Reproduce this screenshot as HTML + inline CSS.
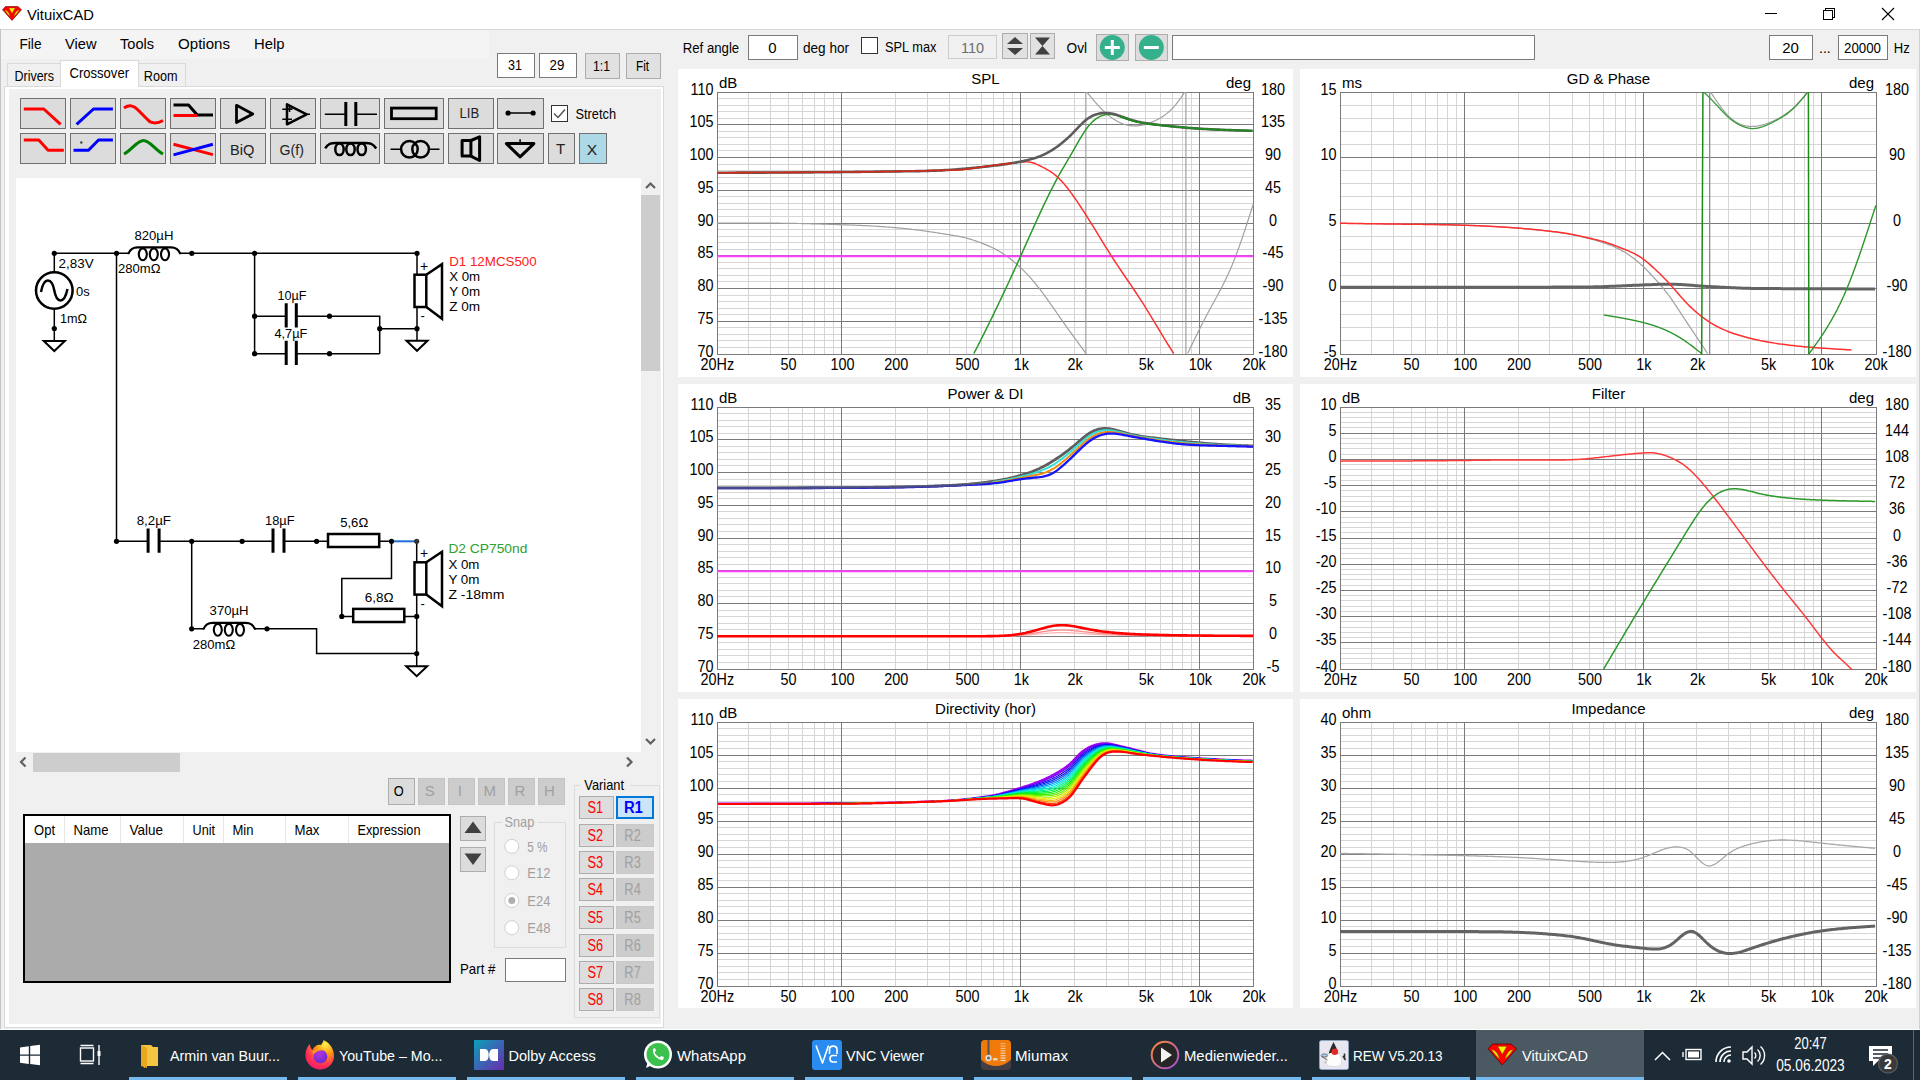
<!DOCTYPE html><html><head><meta charset="utf-8"><title>VituixCAD</title><style>html,body{margin:0;padding:0;width:1920px;height:1080px;overflow:hidden;background:#f0f0f0}svg{position:absolute;left:0;top:0;display:block}text{font-family:"Liberation Sans",sans-serif}</style></head><body><svg width="1920" height="1080" viewBox="0 0 1920 1080"><rect x="0" y="0" width="1920" height="1080" fill="#f0f0f0"/><rect x="0" y="0" width="1920" height="29" fill="#ffffff"/><line x1="0" y1="29.5" x2="1920" y2="29.5" stroke="#d6d6d6" shape-rendering="crispEdges"/><line x1="0.5" y1="29" x2="0.5" y2="1029" stroke="#c4c4c4" shape-rendering="crispEdges"/><line x1="1919.5" y1="29" x2="1919.5" y2="1030" stroke="#d0d0d0" shape-rendering="crispEdges"/><g transform="translate(2.5,6.5) scale(0.67)"><path d="M4.4 0 H23 L28.4 4.7 L14.2 20.8 L0 4.7 Z" fill="#ff0000" stroke="#6a0000" stroke-width="0.9" stroke-linejoin="round"/><path d="M9.5 2.2 H18.9 L14.2 10.4 Z" fill="#f4f400" stroke="#8a2000" stroke-width="0.5"/><path d="M3.2 5.4 C6.5 5.2 10 8.5 11.7 15.4 C8.5 12.5 6 9.5 3.2 5.4 Z" fill="#e6e600" stroke="#8a2000" stroke-width="0.5"/><path d="M25.2 5.4 C21.9 5.2 18.4 8.5 16.7 15.4 C19.9 12.5 22.4 9.5 25.2 5.4 Z" fill="#e6e600" stroke="#8a2000" stroke-width="0.5"/></g><text x="27" y="20" font-size="15" fill="#000" textLength="67" lengthAdjust="spacingAndGlyphs">VituixCAD</text><g stroke="#000" stroke-width="1" fill="none" shape-rendering="crispEdges"><line x1="1765" y1="13.5" x2="1777" y2="13.5"/><rect x="1823.5" y="10.5" width="9" height="9"/><path d="M1825.5 10.5 V8.5 H1834.5 V17.5 H1832.5"/></g><g stroke="#000" stroke-width="1.1"><line x1="1882" y1="8" x2="1894" y2="20"/><line x1="1894" y1="8" x2="1882" y2="20"/></g><rect x="1" y="30" width="488" height="29" fill="#f4f4f4"/><text x="19.5" y="49" font-size="15.5" fill="#000" textLength="22" lengthAdjust="spacingAndGlyphs">File</text><text x="65" y="49" font-size="15.5" fill="#000" textLength="31.5" lengthAdjust="spacingAndGlyphs">View</text><text x="120" y="49" font-size="15.5" fill="#000" textLength="34" lengthAdjust="spacingAndGlyphs">Tools</text><text x="178" y="49" font-size="15.5" fill="#000" textLength="52" lengthAdjust="spacingAndGlyphs">Options</text><text x="254" y="49" font-size="15.5" fill="#000" textLength="30.5" lengthAdjust="spacingAndGlyphs">Help</text><rect x="4.5" y="86.5" width="659" height="941" fill="#ffffff" stroke="#d9d9d9" stroke-width="1" shape-rendering="crispEdges"/><rect x="9" y="89" width="652" height="935" fill="#f0f0f0"/><rect x="7.5" y="63.5" width="53" height="23" fill="#f0f0f0" stroke="#d9d9d9" stroke-width="1" shape-rendering="crispEdges"/><rect x="138.5" y="63.5" width="47" height="23" fill="#f0f0f0" stroke="#d9d9d9" stroke-width="1" shape-rendering="crispEdges"/><rect x="60.5" y="60.5" width="78" height="26" fill="#ffffff" stroke="#d9d9d9" stroke-width="1" shape-rendering="crispEdges"/><rect x="61" y="85" width="77" height="3" fill="#ffffff"/><text x="14.5" y="80.5" font-size="14.5" fill="#000" textLength="39.5" lengthAdjust="spacingAndGlyphs">Drivers</text><text x="69.5" y="77.5" font-size="14.5" fill="#000" textLength="59.5" lengthAdjust="spacingAndGlyphs">Crossover</text><text x="143.8" y="80.5" font-size="14.5" fill="#000" textLength="33.8" lengthAdjust="spacingAndGlyphs">Room</text><rect x="497.5" y="53.5" width="37" height="24" fill="#ffffff" stroke="#7a7a7a" stroke-width="1" shape-rendering="crispEdges"/><rect x="539.5" y="53.5" width="37" height="24" fill="#ffffff" stroke="#7a7a7a" stroke-width="1" shape-rendering="crispEdges"/><text x="515" y="69.6" font-size="15.5" fill="#000" text-anchor="middle" textLength="13.99" lengthAdjust="spacingAndGlyphs">31</text><text x="557" y="69.6" font-size="15.5" fill="#000" text-anchor="middle" textLength="14.79" lengthAdjust="spacingAndGlyphs">29</text><rect x="585.5" y="53.5" width="34" height="25" fill="#e1e1e1" stroke="#adadad" stroke-width="1" shape-rendering="crispEdges"/><rect x="626.5" y="53.5" width="34" height="25" fill="#e1e1e1" stroke="#adadad" stroke-width="1" shape-rendering="crispEdges"/><text x="601.5" y="71" font-size="15.5" fill="#000" text-anchor="middle" textLength="17.04" lengthAdjust="spacingAndGlyphs">1:1</text><text x="642.5" y="71" font-size="15.5" fill="#000" text-anchor="middle" textLength="13.08" lengthAdjust="spacingAndGlyphs">Fit</text><rect x="20.5" y="98.5" width="45" height="30" fill="#dcdcdc" stroke="#707070" stroke-width="1" shape-rendering="crispEdges"/><rect x="70.5" y="98.5" width="45" height="30" fill="#dcdcdc" stroke="#707070" stroke-width="1" shape-rendering="crispEdges"/><rect x="120.5" y="98.5" width="45" height="30" fill="#dcdcdc" stroke="#707070" stroke-width="1" shape-rendering="crispEdges"/><rect x="170.5" y="98.5" width="45" height="30" fill="#dcdcdc" stroke="#707070" stroke-width="1" shape-rendering="crispEdges"/><rect x="220.5" y="98.5" width="45" height="30" fill="#dcdcdc" stroke="#707070" stroke-width="1" shape-rendering="crispEdges"/><rect x="270.5" y="98.5" width="45" height="30" fill="#dcdcdc" stroke="#707070" stroke-width="1" shape-rendering="crispEdges"/><rect x="320.5" y="98.5" width="59" height="30" fill="#dcdcdc" stroke="#707070" stroke-width="1" shape-rendering="crispEdges"/><rect x="384.5" y="98.5" width="59" height="30" fill="#dcdcdc" stroke="#707070" stroke-width="1" shape-rendering="crispEdges"/><rect x="448.5" y="98.5" width="45" height="30" fill="#dcdcdc" stroke="#707070" stroke-width="1" shape-rendering="crispEdges"/><rect x="497.5" y="98.5" width="46" height="30" fill="#dcdcdc" stroke="#707070" stroke-width="1" shape-rendering="crispEdges"/><rect x="20.5" y="133.5" width="45" height="30" fill="#dcdcdc" stroke="#707070" stroke-width="1" shape-rendering="crispEdges"/><rect x="70.5" y="133.5" width="45" height="30" fill="#dcdcdc" stroke="#707070" stroke-width="1" shape-rendering="crispEdges"/><rect x="120.5" y="133.5" width="45" height="30" fill="#dcdcdc" stroke="#707070" stroke-width="1" shape-rendering="crispEdges"/><rect x="170.5" y="133.5" width="45" height="30" fill="#dcdcdc" stroke="#707070" stroke-width="1" shape-rendering="crispEdges"/><rect x="220.5" y="133.5" width="45" height="30" fill="#dcdcdc" stroke="#707070" stroke-width="1" shape-rendering="crispEdges"/><rect x="270.5" y="133.5" width="45" height="30" fill="#dcdcdc" stroke="#707070" stroke-width="1" shape-rendering="crispEdges"/><rect x="320.5" y="133.5" width="59" height="30" fill="#dcdcdc" stroke="#707070" stroke-width="1" shape-rendering="crispEdges"/><rect x="384.5" y="133.5" width="59" height="30" fill="#dcdcdc" stroke="#707070" stroke-width="1" shape-rendering="crispEdges"/><rect x="448.5" y="133.5" width="45" height="30" fill="#dcdcdc" stroke="#707070" stroke-width="1" shape-rendering="crispEdges"/><rect x="497.5" y="133.5" width="46" height="30" fill="#dcdcdc" stroke="#707070" stroke-width="1" shape-rendering="crispEdges"/><rect x="548.5" y="133.5" width="26" height="30" fill="#dcdcdc" stroke="#707070" stroke-width="1" shape-rendering="crispEdges"/><rect x="579.5" y="133.5" width="27" height="30" fill="#add8e6" stroke="#707070" stroke-width="1" shape-rendering="crispEdges"/><path d="M23.8 109 H43.8 L60.6 124.3" stroke="#ff0000" stroke-width="3" fill="none" stroke-linejoin="round"/><path d="M76.6 124.3 L93.5 109 H112.9" stroke="#0000ff" stroke-width="3" fill="none" stroke-linejoin="round"/><path d="M124 108 C129 104.5 134 105.5 137 109 L148 120 C151 123.5 157 124 163 120.5" stroke="#ff0000" stroke-width="3" fill="none" stroke-linejoin="round"/><path d="M173.5 105 H188.5 L197.3 115 H213" stroke="#000000" stroke-width="3" fill="none" stroke-linejoin="round"/><path d="M173.5 115.5 H197.3" stroke="#ff0000" stroke-width="3" fill="none" stroke-linejoin="round"/><path d="M236.5 105.3 L252.8 113.9 L236.5 122.5 Z" stroke="#000" stroke-width="2.8" fill="none" stroke-linejoin="round"/><path d="M287 104.3 L306.6 114.3 L287 124.3 Z" stroke="#000" stroke-width="2.5" fill="none" stroke-linejoin="round"/><path d="M306.6 114.3 H310 M282.3 109.3 H292 M282.3 119.3 H292 M289.5 106 V112 M286.5 109 H292.5" stroke="#000" stroke-width="1.5" fill="none" stroke-linejoin="round"/><path d="M324.8 114.3 H345.8 M355.8 114.3 H377" stroke="#000" stroke-width="1.5" fill="none" stroke-linejoin="round"/><path d="M345.8 102 V126 M355.8 102 V126" stroke="#000" stroke-width="3" fill="none" stroke-linejoin="round"/><rect x="391.5" y="108.1" width="44.7" height="10.6" fill="none" stroke="#000" stroke-width="2.8"/><path d="M508 113 H533" stroke="#000" stroke-width="1.5" fill="none" stroke-linejoin="round"/><circle cx="508.1" cy="113" r="2.6" fill="#000"/><circle cx="533.1" cy="113" r="2.6" fill="#000"/><text x="469.4" y="118.4" font-size="15.5" fill="#222" text-anchor="middle" textLength="19.76" lengthAdjust="spacingAndGlyphs">LIB</text><rect x="551.5" y="105.5" width="16" height="16" fill="#ffffff" stroke="#333333" stroke-width="1" shape-rendering="crispEdges"/><path d="M554 113.5 L558 117.5 L565 109.5" stroke="#555" stroke-width="1.5" fill="none" stroke-linejoin="round"/><text x="575.5" y="119" font-size="15" fill="#000" textLength="40.5" lengthAdjust="spacingAndGlyphs">Stretch</text><path d="M23.8 140 H38.8 L48.1 150.3 H63.8" stroke="#ff0000" stroke-width="3" fill="none" stroke-linejoin="round"/><path d="M73.5 150.3 H88.5 L98.5 140 H112.9" stroke="#0000ff" stroke-width="3" fill="none" stroke-linejoin="round"/><circle cx="81.3" cy="142.5" r="1.2" fill="#444"/><path d="M124 154 C132 150 137 140.5 143.5 140.5 C150 140.5 155 150 163 154" stroke="#008000" stroke-width="3" fill="none" stroke-linejoin="round"/><path d="M173.5 144.3 L212.9 154.6" stroke="#ff0000" stroke-width="3" fill="none" stroke-linejoin="round"/><path d="M173.5 154.9 L212.9 144.3" stroke="#0000ff" stroke-width="3" fill="none" stroke-linejoin="round"/><text x="242.3" y="154.5" font-size="15.5" fill="#222" text-anchor="middle" textLength="24.37" lengthAdjust="spacingAndGlyphs">BiQ</text><text x="291.7" y="154.5" font-size="15.5" fill="#222" text-anchor="middle" textLength="24.34" lengthAdjust="spacingAndGlyphs">G(f)</text><path d="M325.2 148.3 C328 143.5 331 143 336 143 H365 C370 143 373 143.5 376.2 148.5" stroke="#000" stroke-width="2.5" fill="none" stroke-linejoin="round"/><g stroke="#000" stroke-width="2.5" fill="none"><ellipse cx="339.5" cy="149.3" rx="4.2" ry="5.8"/><ellipse cx="350.5" cy="149.3" rx="4.2" ry="5.8"/><ellipse cx="361.7" cy="149.3" rx="4.2" ry="5.8"/></g><g stroke="#000" stroke-width="2.5" fill="none"><circle cx="409.4" cy="149.3" r="8.3"/><circle cx="420.6" cy="149.3" r="8.3"/><path d="M390.5 149.3 H401 M429 149.3 H439.5" stroke-width="1.5"/></g><path d="M462.1 140.5 H470.9 V156.1 H462.1 Z" stroke="#000" stroke-width="3" fill="none" stroke-linejoin="round"/><path d="M470.9 140.5 L479.6 136.8 V160.5 L470.9 156.1" stroke="#000" stroke-width="3" fill="none" stroke-linejoin="round"/><path d="M520.1 139.3 V143.6" stroke="#000" stroke-width="1.5" fill="none" stroke-linejoin="round"/><path d="M506.4 143.6 H533.9 L520.1 156.8 Z" stroke="#000" stroke-width="3" fill="none" stroke-linejoin="round"/><text x="560.5" y="154.2" font-size="15.5" fill="#222" text-anchor="middle" textLength="9.22" lengthAdjust="spacingAndGlyphs">T</text><text x="592" y="154.5" font-size="15.5" fill="#222" text-anchor="middle" textLength="10.46" lengthAdjust="spacingAndGlyphs">X</text><rect x="16" y="178" width="625" height="574" fill="#ffffff"/><rect x="641" y="178" width="19" height="574" fill="#f0f0f0"/><rect x="641" y="195" width="19" height="176" fill="#cdcdcd"/><path d="M646 188 L650.5 183.5 L655 188" stroke="#606060" stroke-width="2.2" fill="none"/><path d="M646 739 L650.5 743.5 L655 739" stroke="#606060" stroke-width="2.2" fill="none"/><rect x="16" y="752" width="625" height="20" fill="#f0f0f0"/><rect x="33" y="753" width="147" height="19" fill="#cdcdcd"/><path d="M25.5 757.5 L21 762 L25.5 766.5" stroke="#606060" stroke-width="2.2" fill="none"/><path d="M627 757.5 L631.5 762 L627 766.5" stroke="#606060" stroke-width="2.2" fill="none"/><g><path d="M54.3 253.3 H128.6 M180 253.3 H417 V275 M417 307 V340.8" stroke="#000" stroke-width="1.5" fill="none"/><path d="M54.3 253.3 V272 M54.3 309 V341" stroke="#000" stroke-width="1.5" fill="none"/><circle cx="54.3" cy="253.3" r="2.6" fill="#000"/><circle cx="116.5" cy="253.3" r="2.6" fill="#000"/><circle cx="191.8" cy="253.3" r="2.6" fill="#000"/><circle cx="254.6" cy="253.3" r="2.6" fill="#000"/><circle cx="417" cy="253.3" r="2.6" fill="#000"/><circle cx="54.3" cy="328.5" r="2.6" fill="#000"/><circle cx="54.3" cy="290.5" r="18.3" fill="none" stroke="#000" stroke-width="2.5"/><path d="M41 292 C44 276 52 278 54.3 290.5 C56.6 303 64 305 67.5 289" stroke="#000" stroke-width="2.5" fill="none"/><path d="M43.8 341 H64.8 L54.3 351 Z" stroke="#000" stroke-width="2" fill="none"/><path d="M116.5 253.3 V541.3" stroke="#000" stroke-width="1.5" fill="none"/><path d="M127.6 253.3 H128.6 C130.6 248.3 133.6 247.4 137.6 247.4 H171 C175 247.4 178 248.3 180 253.3 H181" stroke="#000" stroke-width="2.1" fill="none"/><ellipse cx="142.79999999999998" cy="254.3" rx="4" ry="5.9" fill="none" stroke="#000" stroke-width="2.1"/><ellipse cx="153.79999999999998" cy="254.3" rx="4" ry="5.9" fill="none" stroke="#000" stroke-width="2.1"/><ellipse cx="165.0" cy="254.3" rx="4" ry="5.9" fill="none" stroke="#000" stroke-width="2.1"/><path d="M254.6 253.3 V353.7 M254.6 316.2 H286 M296.3 316.2 H379.7 V353.7 M254.6 353.7 H286 M296.3 353.7 H379.7 M379.7 328.7 H417" stroke="#000" stroke-width="1.5" fill="none"/><path d="M286.2 303.3 V327.5 M296.3 303.3 V327.5" stroke="#000" stroke-width="3" fill="none"/><path d="M286.2 340.8 V365 M296.3 340.8 V365" stroke="#000" stroke-width="3" fill="none"/><circle cx="254.6" cy="316.2" r="2.6" fill="#000"/><circle cx="254.6" cy="353.7" r="2.6" fill="#000"/><circle cx="329.5" cy="316.2" r="2.6" fill="#000"/><circle cx="329.5" cy="353.7" r="2.6" fill="#000"/><circle cx="379.7" cy="328.7" r="2.6" fill="#000"/><circle cx="417" cy="328.7" r="2.6" fill="#000"/><rect x="414.5" y="274.7" width="11.8" height="32.3" fill="none" stroke="#000" stroke-width="2.5"/><path d="M426.3 274.7 L442 264.2 V318.7 L426.3 307.0" stroke="#000" stroke-width="2.5" fill="none"/><path d="M406.5 340.8 H427.5 L417 350.8 Z" stroke="#000" stroke-width="2" fill="none"/><path d="M116.5 541.3 H148 M159 541.3 H273 M284 541.3 H328 M379.2 541.3 H391.5" stroke="#000" stroke-width="1.5" fill="none"/><path d="M391.5 541.3 H416.7" stroke="#1f6fd6" stroke-width="2" fill="none"/><path d="M416.7 541.3 V562.3 M416.7 594 V666" stroke="#000" stroke-width="1.5" fill="none"/><path d="M148.1 528.6 V552.7 M159.1 528.6 V552.7" stroke="#000" stroke-width="3" fill="none"/><path d="M273 528.6 V552.7 M284 528.6 V552.7" stroke="#000" stroke-width="3" fill="none"/><rect x="328" y="534" width="51.19999999999999" height="13" fill="none" stroke="#000" stroke-width="2.5"/><path d="M391.5 541.3 V578.4 H341.8 V616.4 H353 M404.3 616.4 H416.7" stroke="#000" stroke-width="1.5" fill="none"/><rect x="353.2" y="608.9" width="51.10000000000002" height="13.100000000000023" fill="none" stroke="#000" stroke-width="2.5"/><path d="M191.7 541.3 V628.8 H203.6 M254.8 628.8 H316.6 V653.6 H416.7" stroke="#000" stroke-width="1.5" fill="none"/><path d="M202.6 628.8 H203.6 C205.6 623.8 208.6 622.9 212.6 622.9 H245.8 C249.8 622.9 252.8 623.8 254.8 628.8 H255.8" stroke="#000" stroke-width="2.1" fill="none"/><ellipse cx="217.79999999999998" cy="629.8" rx="4" ry="5.9" fill="none" stroke="#000" stroke-width="2.1"/><ellipse cx="228.79999999999998" cy="629.8" rx="4" ry="5.9" fill="none" stroke="#000" stroke-width="2.1"/><ellipse cx="240.0" cy="629.8" rx="4" ry="5.9" fill="none" stroke="#000" stroke-width="2.1"/><circle cx="116.5" cy="541.3" r="2.6" fill="#000"/><circle cx="191.7" cy="541.3" r="2.6" fill="#000"/><circle cx="242.1" cy="541.3" r="2.6" fill="#000"/><circle cx="316.6" cy="541.3" r="2.6" fill="#000"/><circle cx="391.5" cy="541.3" r="2.6" fill="#000"/><circle cx="416.7" cy="541.3" r="2.6" fill="#333"/><circle cx="191.7" cy="628.8" r="2.6" fill="#000"/><circle cx="267" cy="628.8" r="2.6" fill="#000"/><circle cx="341.8" cy="616.4" r="2.6" fill="#000"/><circle cx="416.7" cy="616.4" r="2.6" fill="#000"/><circle cx="416.7" cy="653.6" r="2.6" fill="#000"/><rect x="414.5" y="562.3" width="11.8" height="32.3" fill="none" stroke="#000" stroke-width="2.5"/><path d="M426.3 562.3 L442 551.8 V606.3 L426.3 594.5999999999999" stroke="#000" stroke-width="2.5" fill="none"/><path d="M406.2 666.2 H427.2 L416.7 676.2 Z" stroke="#000" stroke-width="2" fill="none"/></g><text x="134.4" y="239.7" font-size="13" fill="#000" textLength="39" lengthAdjust="spacingAndGlyphs">820µH</text><text x="118" y="273.2" font-size="13" fill="#000" textLength="42.5" lengthAdjust="spacingAndGlyphs">280mΩ</text><text x="58.6" y="267.5" font-size="13" fill="#000" textLength="35" lengthAdjust="spacingAndGlyphs">2,83V</text><text x="76" y="296" font-size="13" fill="#000" textLength="13.7" lengthAdjust="spacingAndGlyphs">0s</text><text x="60" y="323.2" font-size="13" fill="#000" textLength="27" lengthAdjust="spacingAndGlyphs">1mΩ</text><text x="277.4" y="299.5" font-size="13" fill="#000" textLength="29" lengthAdjust="spacingAndGlyphs">10µF</text><text x="274.4" y="337.5" font-size="13" fill="#000" textLength="33" lengthAdjust="spacingAndGlyphs">4,7µF</text><text x="420" y="271" font-size="14" fill="#000">+</text><text x="420.5" y="320" font-size="13" fill="#000">-</text><text x="449.2" y="266" font-size="13" fill="#ff2020" textLength="87.5" lengthAdjust="spacingAndGlyphs">D1 12MCS500</text><text x="449.2" y="281" font-size="13" fill="#000" textLength="31" lengthAdjust="spacingAndGlyphs">X 0m</text><text x="449.2" y="296" font-size="13" fill="#000" textLength="31" lengthAdjust="spacingAndGlyphs">Y 0m</text><text x="449.2" y="311" font-size="13" fill="#000" textLength="31" lengthAdjust="spacingAndGlyphs">Z 0m</text><text x="136.7" y="524.5" font-size="13" fill="#000" textLength="34.3" lengthAdjust="spacingAndGlyphs">8,2µF</text><text x="265" y="524.5" font-size="13" fill="#000" textLength="29.5" lengthAdjust="spacingAndGlyphs">18µF</text><text x="340.2" y="527.2" font-size="13" fill="#000" textLength="28" lengthAdjust="spacingAndGlyphs">5,6Ω</text><text x="364.7" y="602" font-size="13" fill="#000" textLength="28.8" lengthAdjust="spacingAndGlyphs">6,8Ω</text><text x="209.6" y="614.8" font-size="13" fill="#000" textLength="39" lengthAdjust="spacingAndGlyphs">370µH</text><text x="192.8" y="649.2" font-size="13" fill="#000" textLength="42.4" lengthAdjust="spacingAndGlyphs">280mΩ</text><text x="420" y="558" font-size="14" fill="#000">+</text><text x="420.5" y="608" font-size="13" fill="#000">-</text><text x="448.4" y="553.2" font-size="13" fill="#2ea02e" textLength="79" lengthAdjust="spacingAndGlyphs">D2 CP750nd</text><text x="448.4" y="568.9" font-size="13" fill="#000" textLength="31" lengthAdjust="spacingAndGlyphs">X 0m</text><text x="448.4" y="583.8" font-size="13" fill="#000" textLength="31" lengthAdjust="spacingAndGlyphs">Y 0m</text><text x="448.4" y="598.8" font-size="13" fill="#000" textLength="56" lengthAdjust="spacingAndGlyphs">Z -18mm</text><rect x="388.5" y="778.5" width="26" height="26" fill="#dcdcdc" stroke="#adadad" stroke-width="1" shape-rendering="crispEdges"/><text x="398.6" y="796" font-size="15" fill="#000" text-anchor="middle" textLength="9.94" lengthAdjust="spacingAndGlyphs">O</text><rect x="418.5" y="778.5" width="26" height="26" fill="#cccccc" stroke="#c4c4c4" stroke-width="1" shape-rendering="crispEdges"/><text x="429.7" y="796" font-size="15" fill="#a0a0a0" text-anchor="middle">S</text><rect x="448.5" y="778.5" width="26" height="26" fill="#cccccc" stroke="#c4c4c4" stroke-width="1" shape-rendering="crispEdges"/><text x="459.8" y="796" font-size="15" fill="#a0a0a0" text-anchor="middle">I</text><rect x="478.5" y="778.5" width="26" height="26" fill="#cccccc" stroke="#c4c4c4" stroke-width="1" shape-rendering="crispEdges"/><text x="489.8" y="796" font-size="15" fill="#a0a0a0" text-anchor="middle">M</text><rect x="508.5" y="778.5" width="26" height="26" fill="#cccccc" stroke="#c4c4c4" stroke-width="1" shape-rendering="crispEdges"/><text x="519.8" y="796" font-size="15" fill="#a0a0a0" text-anchor="middle">R</text><rect x="538.5" y="778.5" width="26" height="26" fill="#cccccc" stroke="#c4c4c4" stroke-width="1" shape-rendering="crispEdges"/><text x="549.3" y="796" font-size="15" fill="#a0a0a0" text-anchor="middle">H</text><rect x="24" y="815" width="426" height="167" fill="#ababab" stroke="#000" stroke-width="2"/><rect x="25" y="816" width="424" height="27" fill="#ffffff"/><g stroke="#e6e6e6" shape-rendering="crispEdges"><line x1="64.5" y1="816" x2="64.5" y2="843"/><line x1="120.5" y1="816" x2="120.5" y2="843"/><line x1="183.5" y1="816" x2="183.5" y2="843"/><line x1="223.5" y1="816" x2="223.5" y2="843"/><line x1="285.5" y1="816" x2="285.5" y2="843"/><line x1="348.5" y1="816" x2="348.5" y2="843"/></g><text x="34" y="835" font-size="14.5" fill="#000" textLength="21" lengthAdjust="spacingAndGlyphs">Opt</text><text x="73.5" y="835" font-size="14.5" fill="#000" textLength="35" lengthAdjust="spacingAndGlyphs">Name</text><text x="129.5" y="835" font-size="14.5" fill="#000" textLength="33.5" lengthAdjust="spacingAndGlyphs">Value</text><text x="192.5" y="835" font-size="14.5" fill="#000" textLength="22.5" lengthAdjust="spacingAndGlyphs">Unit</text><text x="232.5" y="835" font-size="14.5" fill="#000" textLength="21" lengthAdjust="spacingAndGlyphs">Min</text><text x="294.5" y="835" font-size="14.5" fill="#000" textLength="25" lengthAdjust="spacingAndGlyphs">Max</text><text x="357.5" y="835" font-size="14.5" fill="#000" textLength="63" lengthAdjust="spacingAndGlyphs">Expression</text><rect x="460.5" y="816.5" width="25" height="24" fill="#dcdcdc" stroke="#adadad" stroke-width="1" shape-rendering="crispEdges"/><rect x="460.5" y="847.5" width="25" height="24" fill="#dcdcdc" stroke="#adadad" stroke-width="1" shape-rendering="crispEdges"/><path d="M464.5 833 L473 821.5 L481.5 833 Z" fill="#404040"/><path d="M464.5 853.5 L473 865 L481.5 853.5 Z" fill="#404040"/><path d="M502 822.5 H494.5 V947.5 H565.5 V822.5 H538" stroke="#dcdcdc" fill="none" shape-rendering="crispEdges"/><text x="504.5" y="826.5" font-size="15" fill="#a0a0a0" textLength="29.73" lengthAdjust="spacingAndGlyphs">Snap</text><circle cx="511.8" cy="846.3" r="7" fill="#fff" stroke="#cfcfcf"/><text x="527.3" y="851.8" font-size="15" fill="#a0a0a0" textLength="20.28" lengthAdjust="spacingAndGlyphs">5 %</text><circle cx="511.8" cy="872.8" r="7" fill="#fff" stroke="#cfcfcf"/><text x="527.3" y="878.3" font-size="15" fill="#a0a0a0" textLength="23.05" lengthAdjust="spacingAndGlyphs">E12</text><circle cx="511.8" cy="900.5" r="7" fill="#fff" stroke="#cfcfcf"/><text x="527.3" y="906" font-size="15" fill="#a0a0a0" textLength="23.05" lengthAdjust="spacingAndGlyphs">E24</text><circle cx="511.8" cy="927.7" r="7" fill="#fff" stroke="#cfcfcf"/><text x="527.3" y="933.2" font-size="15" fill="#a0a0a0" textLength="23.05" lengthAdjust="spacingAndGlyphs">E48</text><circle cx="511.8" cy="900.5" r="3.5" fill="#b0b0b0"/><text x="460" y="974" font-size="15" fill="#000" textLength="35.42" lengthAdjust="spacingAndGlyphs">Part #</text><rect x="505.5" y="958.5" width="60" height="23" fill="#ffffff" stroke="#7a7a7a" stroke-width="1" shape-rendering="crispEdges"/><path d="M580 785.5 H574.5 V1017.5 H659.5 V785.5 H630" stroke="#dcdcdc" fill="none" shape-rendering="crispEdges"/><text x="584.3" y="790" font-size="15" fill="#000" textLength="39.73" lengthAdjust="spacingAndGlyphs">Variant</text><rect x="579.5" y="796.5" width="34" height="22" fill="#dddddd" stroke="#adadad" stroke-width="1" shape-rendering="crispEdges"/><text x="595.3" y="812.5" font-size="16" fill="#ff0000" text-anchor="middle" textLength="15.56" lengthAdjust="spacingAndGlyphs">S1</text><rect x="617" y="797" width="36" height="21" fill="#cce4f7" stroke="#0078d7" stroke-width="2"/><text x="633.4" y="812.5" font-size="16" fill="#0000ff" text-anchor="middle" textLength="18.96" lengthAdjust="spacingAndGlyphs" font-weight="bold">R1</text><rect x="579.5" y="824.5" width="34" height="22" fill="#dddddd" stroke="#adadad" stroke-width="1" shape-rendering="crispEdges"/><text x="595.3" y="840.5" font-size="16" fill="#ff0000" text-anchor="middle" textLength="15.56" lengthAdjust="spacingAndGlyphs">S2</text><rect x="616.5" y="824.5" width="37" height="22" fill="#cccccc" stroke="#c8c8c8" stroke-width="1" shape-rendering="crispEdges"/><text x="632.6" y="840.5" font-size="16" fill="#a0a0a0" text-anchor="middle" textLength="16.46" lengthAdjust="spacingAndGlyphs">R2</text><rect x="579.5" y="851.5" width="34" height="22" fill="#dddddd" stroke="#adadad" stroke-width="1" shape-rendering="crispEdges"/><text x="595.3" y="867.5" font-size="16" fill="#ff0000" text-anchor="middle" textLength="15.56" lengthAdjust="spacingAndGlyphs">S3</text><rect x="616.5" y="851.5" width="37" height="22" fill="#cccccc" stroke="#c8c8c8" stroke-width="1" shape-rendering="crispEdges"/><text x="632.6" y="867.5" font-size="16" fill="#a0a0a0" text-anchor="middle" textLength="16.46" lengthAdjust="spacingAndGlyphs">R3</text><rect x="579.5" y="878.5" width="34" height="22" fill="#dddddd" stroke="#adadad" stroke-width="1" shape-rendering="crispEdges"/><text x="595.3" y="894.5" font-size="16" fill="#ff0000" text-anchor="middle" textLength="15.56" lengthAdjust="spacingAndGlyphs">S4</text><rect x="616.5" y="878.5" width="37" height="22" fill="#cccccc" stroke="#c8c8c8" stroke-width="1" shape-rendering="crispEdges"/><text x="632.6" y="894.5" font-size="16" fill="#a0a0a0" text-anchor="middle" textLength="16.46" lengthAdjust="spacingAndGlyphs">R4</text><rect x="579.5" y="906.5" width="34" height="22" fill="#dddddd" stroke="#adadad" stroke-width="1" shape-rendering="crispEdges"/><text x="595.3" y="922.5" font-size="16" fill="#ff0000" text-anchor="middle" textLength="15.56" lengthAdjust="spacingAndGlyphs">S5</text><rect x="616.5" y="906.5" width="37" height="22" fill="#cccccc" stroke="#c8c8c8" stroke-width="1" shape-rendering="crispEdges"/><text x="632.6" y="922.5" font-size="16" fill="#a0a0a0" text-anchor="middle" textLength="16.46" lengthAdjust="spacingAndGlyphs">R5</text><rect x="579.5" y="934.5" width="34" height="22" fill="#dddddd" stroke="#adadad" stroke-width="1" shape-rendering="crispEdges"/><text x="595.3" y="950.5" font-size="16" fill="#ff0000" text-anchor="middle" textLength="15.56" lengthAdjust="spacingAndGlyphs">S6</text><rect x="616.5" y="934.5" width="37" height="22" fill="#cccccc" stroke="#c8c8c8" stroke-width="1" shape-rendering="crispEdges"/><text x="632.6" y="950.5" font-size="16" fill="#a0a0a0" text-anchor="middle" textLength="16.46" lengthAdjust="spacingAndGlyphs">R6</text><rect x="579.5" y="961.5" width="34" height="22" fill="#dddddd" stroke="#adadad" stroke-width="1" shape-rendering="crispEdges"/><text x="595.3" y="977.5" font-size="16" fill="#ff0000" text-anchor="middle" textLength="15.56" lengthAdjust="spacingAndGlyphs">S7</text><rect x="616.5" y="961.5" width="37" height="22" fill="#cccccc" stroke="#c8c8c8" stroke-width="1" shape-rendering="crispEdges"/><text x="632.6" y="977.5" font-size="16" fill="#a0a0a0" text-anchor="middle" textLength="16.46" lengthAdjust="spacingAndGlyphs">R7</text><rect x="579.5" y="988.5" width="34" height="22" fill="#dddddd" stroke="#adadad" stroke-width="1" shape-rendering="crispEdges"/><text x="595.3" y="1004.5" font-size="16" fill="#ff0000" text-anchor="middle" textLength="15.56" lengthAdjust="spacingAndGlyphs">S8</text><rect x="616.5" y="988.5" width="37" height="22" fill="#cccccc" stroke="#c8c8c8" stroke-width="1" shape-rendering="crispEdges"/><text x="632.6" y="1004.5" font-size="16" fill="#a0a0a0" text-anchor="middle" textLength="16.46" lengthAdjust="spacingAndGlyphs">R8</text><text x="682.7" y="52.5" font-size="15.5" fill="#000" textLength="56.5" lengthAdjust="spacingAndGlyphs">Ref angle</text><rect x="748.5" y="35.5" width="49" height="24" fill="#ffffff" stroke="#7a7a7a" stroke-width="1" shape-rendering="crispEdges"/><text x="772.5" y="53" font-size="15" fill="#000" text-anchor="middle">0</text><text x="803" y="52.5" font-size="15.5" fill="#000" textLength="46" lengthAdjust="spacingAndGlyphs">deg hor</text><rect x="861.5" y="37.5" width="16" height="16" fill="#ffffff" stroke="#333333" stroke-width="1" shape-rendering="crispEdges"/><text x="885" y="52" font-size="15.5" fill="#000" textLength="51.5" lengthAdjust="spacingAndGlyphs">SPL max</text><rect x="948.5" y="35.5" width="48" height="23" fill="#f0f0f0" stroke="#cccccc" stroke-width="1" shape-rendering="crispEdges"/><text x="972.5" y="52.5" font-size="14.5" fill="#6d6d6d" text-anchor="middle">110</text><rect x="1002.5" y="33.5" width="25" height="25" fill="#e1e1e1" stroke="#adadad" stroke-width="1" shape-rendering="crispEdges"/><path d="M1007 44 L1015 37 L1023 44 Z M1007 48 L1015 55 L1023 48 Z" fill="#404040"/><rect x="1030.5" y="33.5" width="24" height="25" fill="#e1e1e1" stroke="#adadad" stroke-width="1" shape-rendering="crispEdges"/><path d="M1035 37.5 H1050 L1042.5 46 Z M1035 54.5 H1050 L1042.5 46 Z" fill="#404040"/><text x="1066.6" y="52.5" font-size="15.5" fill="#000" textLength="20.5" lengthAdjust="spacingAndGlyphs">Ovl</text><rect x="1096.5" y="34.5" width="32" height="26" fill="#dcdcdc" stroke="#adadad" stroke-width="1" shape-rendering="crispEdges"/><rect x="1135.5" y="34.5" width="32" height="26" fill="#dcdcdc" stroke="#adadad" stroke-width="1" shape-rendering="crispEdges"/><circle cx="1112.3" cy="47.5" r="12.5" fill="#34b08d"/><path d="M1112.3 40 V55 M1104.8 47.5 H1119.8" stroke="#fff" stroke-width="3"/><circle cx="1151.3" cy="47.5" r="12.5" fill="#34b08d"/><path d="M1143.8 47.5 H1158.8" stroke="#fff" stroke-width="3"/><rect x="1172.5" y="35.5" width="362" height="24" fill="#ffffff" stroke="#7a7a7a" stroke-width="1" shape-rendering="crispEdges"/><rect x="1769.5" y="35.5" width="43" height="24" fill="#ffffff" stroke="#7a7a7a" stroke-width="1" shape-rendering="crispEdges"/><text x="1790.5" y="53" font-size="15" fill="#000" text-anchor="middle">20</text><text x="1819" y="53" font-size="14" fill="#000">...</text><rect x="1838.5" y="35.5" width="49" height="24" fill="#ffffff" stroke="#7a7a7a" stroke-width="1" shape-rendering="crispEdges"/><text x="1862.5" y="53" font-size="15" fill="#000" text-anchor="middle" textLength="37" lengthAdjust="spacingAndGlyphs">20000</text><text x="1893.8" y="53" font-size="15" fill="#000" textLength="16" lengthAdjust="spacingAndGlyphs">Hz</text><rect x="678" y="69" width="615" height="308" fill="#fff"/><g shape-rendering="crispEdges"><line x1="717" y1="347.5" x2="1253" y2="347.5" stroke="#d6d6d6"/><line x1="717" y1="340.5" x2="1253" y2="340.5" stroke="#d6d6d6"/><line x1="717" y1="334.5" x2="1253" y2="334.5" stroke="#d6d6d6"/><line x1="717" y1="327.5" x2="1253" y2="327.5" stroke="#d6d6d6"/><line x1="717" y1="314.5" x2="1253" y2="314.5" stroke="#d6d6d6"/><line x1="717" y1="308.5" x2="1253" y2="308.5" stroke="#d6d6d6"/><line x1="717" y1="301.5" x2="1253" y2="301.5" stroke="#d6d6d6"/><line x1="717" y1="295.5" x2="1253" y2="295.5" stroke="#d6d6d6"/><line x1="717" y1="281.5" x2="1253" y2="281.5" stroke="#d6d6d6"/><line x1="717" y1="275.5" x2="1253" y2="275.5" stroke="#d6d6d6"/><line x1="717" y1="268.5" x2="1253" y2="268.5" stroke="#d6d6d6"/><line x1="717" y1="262.5" x2="1253" y2="262.5" stroke="#d6d6d6"/><line x1="717" y1="249.5" x2="1253" y2="249.5" stroke="#d6d6d6"/><line x1="717" y1="242.5" x2="1253" y2="242.5" stroke="#d6d6d6"/><line x1="717" y1="236.5" x2="1253" y2="236.5" stroke="#d6d6d6"/><line x1="717" y1="229.5" x2="1253" y2="229.5" stroke="#d6d6d6"/><line x1="717" y1="216.5" x2="1253" y2="216.5" stroke="#d6d6d6"/><line x1="717" y1="209.5" x2="1253" y2="209.5" stroke="#d6d6d6"/><line x1="717" y1="203.5" x2="1253" y2="203.5" stroke="#d6d6d6"/><line x1="717" y1="196.5" x2="1253" y2="196.5" stroke="#d6d6d6"/><line x1="717" y1="183.5" x2="1253" y2="183.5" stroke="#d6d6d6"/><line x1="717" y1="177.5" x2="1253" y2="177.5" stroke="#d6d6d6"/><line x1="717" y1="170.5" x2="1253" y2="170.5" stroke="#d6d6d6"/><line x1="717" y1="164.5" x2="1253" y2="164.5" stroke="#d6d6d6"/><line x1="717" y1="150.5" x2="1253" y2="150.5" stroke="#d6d6d6"/><line x1="717" y1="144.5" x2="1253" y2="144.5" stroke="#d6d6d6"/><line x1="717" y1="137.5" x2="1253" y2="137.5" stroke="#d6d6d6"/><line x1="717" y1="131.5" x2="1253" y2="131.5" stroke="#d6d6d6"/><line x1="717" y1="118.5" x2="1253" y2="118.5" stroke="#d6d6d6"/><line x1="717" y1="111.5" x2="1253" y2="111.5" stroke="#d6d6d6"/><line x1="717" y1="105.5" x2="1253" y2="105.5" stroke="#d6d6d6"/><line x1="717" y1="98.5" x2="1253" y2="98.5" stroke="#d6d6d6"/><line x1="748.5" y1="92" x2="748.5" y2="354" stroke="#d6d6d6"/><line x1="770.5" y1="92" x2="770.5" y2="354" stroke="#d6d6d6"/><line x1="788.5" y1="92" x2="788.5" y2="354" stroke="#d6d6d6"/><line x1="802.5" y1="92" x2="802.5" y2="354" stroke="#d6d6d6"/><line x1="814.5" y1="92" x2="814.5" y2="354" stroke="#d6d6d6"/><line x1="824.5" y1="92" x2="824.5" y2="354" stroke="#d6d6d6"/><line x1="833.5" y1="92" x2="833.5" y2="354" stroke="#d6d6d6"/><line x1="895.5" y1="92" x2="895.5" y2="354" stroke="#d6d6d6"/><line x1="927.5" y1="92" x2="927.5" y2="354" stroke="#d6d6d6"/><line x1="949.5" y1="92" x2="949.5" y2="354" stroke="#d6d6d6"/><line x1="966.5" y1="92" x2="966.5" y2="354" stroke="#d6d6d6"/><line x1="981.5" y1="92" x2="981.5" y2="354" stroke="#d6d6d6"/><line x1="993.5" y1="92" x2="993.5" y2="354" stroke="#d6d6d6"/><line x1="1003.5" y1="92" x2="1003.5" y2="354" stroke="#d6d6d6"/><line x1="1012.5" y1="92" x2="1012.5" y2="354" stroke="#d6d6d6"/><line x1="1074.5" y1="92" x2="1074.5" y2="354" stroke="#d6d6d6"/><line x1="1106.5" y1="92" x2="1106.5" y2="354" stroke="#d6d6d6"/><line x1="1128.5" y1="92" x2="1128.5" y2="354" stroke="#d6d6d6"/><line x1="1145.5" y1="92" x2="1145.5" y2="354" stroke="#d6d6d6"/><line x1="1160.5" y1="92" x2="1160.5" y2="354" stroke="#d6d6d6"/><line x1="1172.5" y1="92" x2="1172.5" y2="354" stroke="#d6d6d6"/><line x1="1182.5" y1="92" x2="1182.5" y2="354" stroke="#d6d6d6"/><line x1="1191.5" y1="92" x2="1191.5" y2="354" stroke="#d6d6d6"/><line x1="841.5" y1="92" x2="841.5" y2="354" stroke="#7a7a7a"/><line x1="1020.5" y1="92" x2="1020.5" y2="354" stroke="#7a7a7a"/><line x1="1199.5" y1="92" x2="1199.5" y2="354" stroke="#7a7a7a"/><line x1="717" y1="354.5" x2="1253" y2="354.5" stroke="#7a7a7a"/><line x1="717" y1="321.5" x2="1253" y2="321.5" stroke="#7a7a7a"/><line x1="717" y1="288.5" x2="1253" y2="288.5" stroke="#7a7a7a"/><line x1="717" y1="255.5" x2="1253" y2="255.5" stroke="#7a7a7a"/><line x1="717" y1="223.5" x2="1253" y2="223.5" stroke="#7a7a7a"/><line x1="717" y1="190.5" x2="1253" y2="190.5" stroke="#7a7a7a"/><line x1="717" y1="157.5" x2="1253" y2="157.5" stroke="#7a7a7a"/><line x1="717" y1="124.5" x2="1253" y2="124.5" stroke="#7a7a7a"/><line x1="717" y1="92.5" x2="1253" y2="92.5" stroke="#7a7a7a"/><rect x="717.5" y="92.5" width="536" height="262" fill="none" stroke="#7a7a7a"/></g><rect x="678" y="384" width="615" height="308" fill="#fff"/><g shape-rendering="crispEdges"><line x1="717" y1="662.5" x2="1253" y2="662.5" stroke="#d6d6d6"/><line x1="717" y1="655.5" x2="1253" y2="655.5" stroke="#d6d6d6"/><line x1="717" y1="649.5" x2="1253" y2="649.5" stroke="#d6d6d6"/><line x1="717" y1="642.5" x2="1253" y2="642.5" stroke="#d6d6d6"/><line x1="717" y1="629.5" x2="1253" y2="629.5" stroke="#d6d6d6"/><line x1="717" y1="623.5" x2="1253" y2="623.5" stroke="#d6d6d6"/><line x1="717" y1="616.5" x2="1253" y2="616.5" stroke="#d6d6d6"/><line x1="717" y1="610.5" x2="1253" y2="610.5" stroke="#d6d6d6"/><line x1="717" y1="596.5" x2="1253" y2="596.5" stroke="#d6d6d6"/><line x1="717" y1="590.5" x2="1253" y2="590.5" stroke="#d6d6d6"/><line x1="717" y1="583.5" x2="1253" y2="583.5" stroke="#d6d6d6"/><line x1="717" y1="577.5" x2="1253" y2="577.5" stroke="#d6d6d6"/><line x1="717" y1="564.5" x2="1253" y2="564.5" stroke="#d6d6d6"/><line x1="717" y1="557.5" x2="1253" y2="557.5" stroke="#d6d6d6"/><line x1="717" y1="551.5" x2="1253" y2="551.5" stroke="#d6d6d6"/><line x1="717" y1="544.5" x2="1253" y2="544.5" stroke="#d6d6d6"/><line x1="717" y1="531.5" x2="1253" y2="531.5" stroke="#d6d6d6"/><line x1="717" y1="524.5" x2="1253" y2="524.5" stroke="#d6d6d6"/><line x1="717" y1="518.5" x2="1253" y2="518.5" stroke="#d6d6d6"/><line x1="717" y1="511.5" x2="1253" y2="511.5" stroke="#d6d6d6"/><line x1="717" y1="498.5" x2="1253" y2="498.5" stroke="#d6d6d6"/><line x1="717" y1="492.5" x2="1253" y2="492.5" stroke="#d6d6d6"/><line x1="717" y1="485.5" x2="1253" y2="485.5" stroke="#d6d6d6"/><line x1="717" y1="479.5" x2="1253" y2="479.5" stroke="#d6d6d6"/><line x1="717" y1="465.5" x2="1253" y2="465.5" stroke="#d6d6d6"/><line x1="717" y1="459.5" x2="1253" y2="459.5" stroke="#d6d6d6"/><line x1="717" y1="452.5" x2="1253" y2="452.5" stroke="#d6d6d6"/><line x1="717" y1="446.5" x2="1253" y2="446.5" stroke="#d6d6d6"/><line x1="717" y1="433.5" x2="1253" y2="433.5" stroke="#d6d6d6"/><line x1="717" y1="426.5" x2="1253" y2="426.5" stroke="#d6d6d6"/><line x1="717" y1="420.5" x2="1253" y2="420.5" stroke="#d6d6d6"/><line x1="717" y1="413.5" x2="1253" y2="413.5" stroke="#d6d6d6"/><line x1="748.5" y1="407" x2="748.5" y2="669" stroke="#d6d6d6"/><line x1="770.5" y1="407" x2="770.5" y2="669" stroke="#d6d6d6"/><line x1="788.5" y1="407" x2="788.5" y2="669" stroke="#d6d6d6"/><line x1="802.5" y1="407" x2="802.5" y2="669" stroke="#d6d6d6"/><line x1="814.5" y1="407" x2="814.5" y2="669" stroke="#d6d6d6"/><line x1="824.5" y1="407" x2="824.5" y2="669" stroke="#d6d6d6"/><line x1="833.5" y1="407" x2="833.5" y2="669" stroke="#d6d6d6"/><line x1="895.5" y1="407" x2="895.5" y2="669" stroke="#d6d6d6"/><line x1="927.5" y1="407" x2="927.5" y2="669" stroke="#d6d6d6"/><line x1="949.5" y1="407" x2="949.5" y2="669" stroke="#d6d6d6"/><line x1="966.5" y1="407" x2="966.5" y2="669" stroke="#d6d6d6"/><line x1="981.5" y1="407" x2="981.5" y2="669" stroke="#d6d6d6"/><line x1="993.5" y1="407" x2="993.5" y2="669" stroke="#d6d6d6"/><line x1="1003.5" y1="407" x2="1003.5" y2="669" stroke="#d6d6d6"/><line x1="1012.5" y1="407" x2="1012.5" y2="669" stroke="#d6d6d6"/><line x1="1074.5" y1="407" x2="1074.5" y2="669" stroke="#d6d6d6"/><line x1="1106.5" y1="407" x2="1106.5" y2="669" stroke="#d6d6d6"/><line x1="1128.5" y1="407" x2="1128.5" y2="669" stroke="#d6d6d6"/><line x1="1145.5" y1="407" x2="1145.5" y2="669" stroke="#d6d6d6"/><line x1="1160.5" y1="407" x2="1160.5" y2="669" stroke="#d6d6d6"/><line x1="1172.5" y1="407" x2="1172.5" y2="669" stroke="#d6d6d6"/><line x1="1182.5" y1="407" x2="1182.5" y2="669" stroke="#d6d6d6"/><line x1="1191.5" y1="407" x2="1191.5" y2="669" stroke="#d6d6d6"/><line x1="841.5" y1="407" x2="841.5" y2="669" stroke="#7a7a7a"/><line x1="1020.5" y1="407" x2="1020.5" y2="669" stroke="#7a7a7a"/><line x1="1199.5" y1="407" x2="1199.5" y2="669" stroke="#7a7a7a"/><line x1="717" y1="669.5" x2="1253" y2="669.5" stroke="#7a7a7a"/><line x1="717" y1="636.5" x2="1253" y2="636.5" stroke="#7a7a7a"/><line x1="717" y1="603.5" x2="1253" y2="603.5" stroke="#7a7a7a"/><line x1="717" y1="570.5" x2="1253" y2="570.5" stroke="#7a7a7a"/><line x1="717" y1="538.5" x2="1253" y2="538.5" stroke="#7a7a7a"/><line x1="717" y1="505.5" x2="1253" y2="505.5" stroke="#7a7a7a"/><line x1="717" y1="472.5" x2="1253" y2="472.5" stroke="#7a7a7a"/><line x1="717" y1="439.5" x2="1253" y2="439.5" stroke="#7a7a7a"/><line x1="717" y1="407.5" x2="1253" y2="407.5" stroke="#7a7a7a"/><rect x="717.5" y="407.5" width="536" height="262" fill="none" stroke="#7a7a7a"/></g><rect x="678" y="699" width="615" height="309" fill="#fff"/><g shape-rendering="crispEdges"><line x1="717" y1="979.5" x2="1253" y2="979.5" stroke="#d6d6d6"/><line x1="717" y1="972.5" x2="1253" y2="972.5" stroke="#d6d6d6"/><line x1="717" y1="966.5" x2="1253" y2="966.5" stroke="#d6d6d6"/><line x1="717" y1="959.5" x2="1253" y2="959.5" stroke="#d6d6d6"/><line x1="717" y1="946.5" x2="1253" y2="946.5" stroke="#d6d6d6"/><line x1="717" y1="939.5" x2="1253" y2="939.5" stroke="#d6d6d6"/><line x1="717" y1="933.5" x2="1253" y2="933.5" stroke="#d6d6d6"/><line x1="717" y1="926.5" x2="1253" y2="926.5" stroke="#d6d6d6"/><line x1="717" y1="913.5" x2="1253" y2="913.5" stroke="#d6d6d6"/><line x1="717" y1="906.5" x2="1253" y2="906.5" stroke="#d6d6d6"/><line x1="717" y1="900.5" x2="1253" y2="900.5" stroke="#d6d6d6"/><line x1="717" y1="893.5" x2="1253" y2="893.5" stroke="#d6d6d6"/><line x1="717" y1="880.5" x2="1253" y2="880.5" stroke="#d6d6d6"/><line x1="717" y1="873.5" x2="1253" y2="873.5" stroke="#d6d6d6"/><line x1="717" y1="867.5" x2="1253" y2="867.5" stroke="#d6d6d6"/><line x1="717" y1="860.5" x2="1253" y2="860.5" stroke="#d6d6d6"/><line x1="717" y1="847.5" x2="1253" y2="847.5" stroke="#d6d6d6"/><line x1="717" y1="840.5" x2="1253" y2="840.5" stroke="#d6d6d6"/><line x1="717" y1="834.5" x2="1253" y2="834.5" stroke="#d6d6d6"/><line x1="717" y1="827.5" x2="1253" y2="827.5" stroke="#d6d6d6"/><line x1="717" y1="814.5" x2="1253" y2="814.5" stroke="#d6d6d6"/><line x1="717" y1="807.5" x2="1253" y2="807.5" stroke="#d6d6d6"/><line x1="717" y1="801.5" x2="1253" y2="801.5" stroke="#d6d6d6"/><line x1="717" y1="794.5" x2="1253" y2="794.5" stroke="#d6d6d6"/><line x1="717" y1="781.5" x2="1253" y2="781.5" stroke="#d6d6d6"/><line x1="717" y1="774.5" x2="1253" y2="774.5" stroke="#d6d6d6"/><line x1="717" y1="768.5" x2="1253" y2="768.5" stroke="#d6d6d6"/><line x1="717" y1="761.5" x2="1253" y2="761.5" stroke="#d6d6d6"/><line x1="717" y1="748.5" x2="1253" y2="748.5" stroke="#d6d6d6"/><line x1="717" y1="741.5" x2="1253" y2="741.5" stroke="#d6d6d6"/><line x1="717" y1="735.5" x2="1253" y2="735.5" stroke="#d6d6d6"/><line x1="717" y1="728.5" x2="1253" y2="728.5" stroke="#d6d6d6"/><line x1="748.5" y1="722" x2="748.5" y2="986" stroke="#d6d6d6"/><line x1="770.5" y1="722" x2="770.5" y2="986" stroke="#d6d6d6"/><line x1="788.5" y1="722" x2="788.5" y2="986" stroke="#d6d6d6"/><line x1="802.5" y1="722" x2="802.5" y2="986" stroke="#d6d6d6"/><line x1="814.5" y1="722" x2="814.5" y2="986" stroke="#d6d6d6"/><line x1="824.5" y1="722" x2="824.5" y2="986" stroke="#d6d6d6"/><line x1="833.5" y1="722" x2="833.5" y2="986" stroke="#d6d6d6"/><line x1="895.5" y1="722" x2="895.5" y2="986" stroke="#d6d6d6"/><line x1="927.5" y1="722" x2="927.5" y2="986" stroke="#d6d6d6"/><line x1="949.5" y1="722" x2="949.5" y2="986" stroke="#d6d6d6"/><line x1="966.5" y1="722" x2="966.5" y2="986" stroke="#d6d6d6"/><line x1="981.5" y1="722" x2="981.5" y2="986" stroke="#d6d6d6"/><line x1="993.5" y1="722" x2="993.5" y2="986" stroke="#d6d6d6"/><line x1="1003.5" y1="722" x2="1003.5" y2="986" stroke="#d6d6d6"/><line x1="1012.5" y1="722" x2="1012.5" y2="986" stroke="#d6d6d6"/><line x1="1074.5" y1="722" x2="1074.5" y2="986" stroke="#d6d6d6"/><line x1="1106.5" y1="722" x2="1106.5" y2="986" stroke="#d6d6d6"/><line x1="1128.5" y1="722" x2="1128.5" y2="986" stroke="#d6d6d6"/><line x1="1145.5" y1="722" x2="1145.5" y2="986" stroke="#d6d6d6"/><line x1="1160.5" y1="722" x2="1160.5" y2="986" stroke="#d6d6d6"/><line x1="1172.5" y1="722" x2="1172.5" y2="986" stroke="#d6d6d6"/><line x1="1182.5" y1="722" x2="1182.5" y2="986" stroke="#d6d6d6"/><line x1="1191.5" y1="722" x2="1191.5" y2="986" stroke="#d6d6d6"/><line x1="841.5" y1="722" x2="841.5" y2="986" stroke="#7a7a7a"/><line x1="1020.5" y1="722" x2="1020.5" y2="986" stroke="#7a7a7a"/><line x1="1199.5" y1="722" x2="1199.5" y2="986" stroke="#7a7a7a"/><line x1="717" y1="986.5" x2="1253" y2="986.5" stroke="#7a7a7a"/><line x1="717" y1="953.5" x2="1253" y2="953.5" stroke="#7a7a7a"/><line x1="717" y1="920.5" x2="1253" y2="920.5" stroke="#7a7a7a"/><line x1="717" y1="887.5" x2="1253" y2="887.5" stroke="#7a7a7a"/><line x1="717" y1="854.5" x2="1253" y2="854.5" stroke="#7a7a7a"/><line x1="717" y1="821.5" x2="1253" y2="821.5" stroke="#7a7a7a"/><line x1="717" y1="788.5" x2="1253" y2="788.5" stroke="#7a7a7a"/><line x1="717" y1="755.5" x2="1253" y2="755.5" stroke="#7a7a7a"/><line x1="717" y1="722.5" x2="1253" y2="722.5" stroke="#7a7a7a"/><rect x="717.5" y="722.5" width="536" height="264" fill="none" stroke="#7a7a7a"/></g><rect x="1300" y="69" width="616" height="308" fill="#fff"/><g shape-rendering="crispEdges"><line x1="1340" y1="340.5" x2="1876" y2="340.5" stroke="#d6d6d6"/><line x1="1340" y1="327.5" x2="1876" y2="327.5" stroke="#d6d6d6"/><line x1="1340" y1="314.5" x2="1876" y2="314.5" stroke="#d6d6d6"/><line x1="1340" y1="301.5" x2="1876" y2="301.5" stroke="#d6d6d6"/><line x1="1340" y1="275.5" x2="1876" y2="275.5" stroke="#d6d6d6"/><line x1="1340" y1="262.5" x2="1876" y2="262.5" stroke="#d6d6d6"/><line x1="1340" y1="249.5" x2="1876" y2="249.5" stroke="#d6d6d6"/><line x1="1340" y1="236.5" x2="1876" y2="236.5" stroke="#d6d6d6"/><line x1="1340" y1="209.5" x2="1876" y2="209.5" stroke="#d6d6d6"/><line x1="1340" y1="196.5" x2="1876" y2="196.5" stroke="#d6d6d6"/><line x1="1340" y1="183.5" x2="1876" y2="183.5" stroke="#d6d6d6"/><line x1="1340" y1="170.5" x2="1876" y2="170.5" stroke="#d6d6d6"/><line x1="1340" y1="144.5" x2="1876" y2="144.5" stroke="#d6d6d6"/><line x1="1340" y1="131.5" x2="1876" y2="131.5" stroke="#d6d6d6"/><line x1="1340" y1="118.5" x2="1876" y2="118.5" stroke="#d6d6d6"/><line x1="1340" y1="105.5" x2="1876" y2="105.5" stroke="#d6d6d6"/><line x1="1371.5" y1="92" x2="1371.5" y2="354" stroke="#d6d6d6"/><line x1="1393.5" y1="92" x2="1393.5" y2="354" stroke="#d6d6d6"/><line x1="1411.5" y1="92" x2="1411.5" y2="354" stroke="#d6d6d6"/><line x1="1425.5" y1="92" x2="1425.5" y2="354" stroke="#d6d6d6"/><line x1="1437.5" y1="92" x2="1437.5" y2="354" stroke="#d6d6d6"/><line x1="1447.5" y1="92" x2="1447.5" y2="354" stroke="#d6d6d6"/><line x1="1456.5" y1="92" x2="1456.5" y2="354" stroke="#d6d6d6"/><line x1="1518.5" y1="92" x2="1518.5" y2="354" stroke="#d6d6d6"/><line x1="1549.5" y1="92" x2="1549.5" y2="354" stroke="#d6d6d6"/><line x1="1572.5" y1="92" x2="1572.5" y2="354" stroke="#d6d6d6"/><line x1="1589.5" y1="92" x2="1589.5" y2="354" stroke="#d6d6d6"/><line x1="1603.5" y1="92" x2="1603.5" y2="354" stroke="#d6d6d6"/><line x1="1615.5" y1="92" x2="1615.5" y2="354" stroke="#d6d6d6"/><line x1="1625.5" y1="92" x2="1625.5" y2="354" stroke="#d6d6d6"/><line x1="1635.5" y1="92" x2="1635.5" y2="354" stroke="#d6d6d6"/><line x1="1696.5" y1="92" x2="1696.5" y2="354" stroke="#d6d6d6"/><line x1="1728.5" y1="92" x2="1728.5" y2="354" stroke="#d6d6d6"/><line x1="1750.5" y1="92" x2="1750.5" y2="354" stroke="#d6d6d6"/><line x1="1768.5" y1="92" x2="1768.5" y2="354" stroke="#d6d6d6"/><line x1="1782.5" y1="92" x2="1782.5" y2="354" stroke="#d6d6d6"/><line x1="1794.5" y1="92" x2="1794.5" y2="354" stroke="#d6d6d6"/><line x1="1804.5" y1="92" x2="1804.5" y2="354" stroke="#d6d6d6"/><line x1="1813.5" y1="92" x2="1813.5" y2="354" stroke="#d6d6d6"/><line x1="1464.5" y1="92" x2="1464.5" y2="354" stroke="#7a7a7a"/><line x1="1643.5" y1="92" x2="1643.5" y2="354" stroke="#7a7a7a"/><line x1="1821.5" y1="92" x2="1821.5" y2="354" stroke="#7a7a7a"/><line x1="1340" y1="354.5" x2="1876" y2="354.5" stroke="#7a7a7a"/><line x1="1340" y1="288.5" x2="1876" y2="288.5" stroke="#7a7a7a"/><line x1="1340" y1="223.5" x2="1876" y2="223.5" stroke="#7a7a7a"/><line x1="1340" y1="157.5" x2="1876" y2="157.5" stroke="#7a7a7a"/><line x1="1340" y1="92.5" x2="1876" y2="92.5" stroke="#7a7a7a"/><rect x="1340.5" y="92.5" width="536" height="262" fill="none" stroke="#7a7a7a"/></g><rect x="1300" y="384" width="616" height="308" fill="#fff"/><g shape-rendering="crispEdges"><line x1="1340" y1="663.5" x2="1876" y2="663.5" stroke="#d6d6d6"/><line x1="1340" y1="658.5" x2="1876" y2="658.5" stroke="#d6d6d6"/><line x1="1340" y1="653.5" x2="1876" y2="653.5" stroke="#d6d6d6"/><line x1="1340" y1="648.5" x2="1876" y2="648.5" stroke="#d6d6d6"/><line x1="1340" y1="637.5" x2="1876" y2="637.5" stroke="#d6d6d6"/><line x1="1340" y1="632.5" x2="1876" y2="632.5" stroke="#d6d6d6"/><line x1="1340" y1="627.5" x2="1876" y2="627.5" stroke="#d6d6d6"/><line x1="1340" y1="621.5" x2="1876" y2="621.5" stroke="#d6d6d6"/><line x1="1340" y1="611.5" x2="1876" y2="611.5" stroke="#d6d6d6"/><line x1="1340" y1="606.5" x2="1876" y2="606.5" stroke="#d6d6d6"/><line x1="1340" y1="600.5" x2="1876" y2="600.5" stroke="#d6d6d6"/><line x1="1340" y1="595.5" x2="1876" y2="595.5" stroke="#d6d6d6"/><line x1="1340" y1="585.5" x2="1876" y2="585.5" stroke="#d6d6d6"/><line x1="1340" y1="579.5" x2="1876" y2="579.5" stroke="#d6d6d6"/><line x1="1340" y1="574.5" x2="1876" y2="574.5" stroke="#d6d6d6"/><line x1="1340" y1="569.5" x2="1876" y2="569.5" stroke="#d6d6d6"/><line x1="1340" y1="558.5" x2="1876" y2="558.5" stroke="#d6d6d6"/><line x1="1340" y1="553.5" x2="1876" y2="553.5" stroke="#d6d6d6"/><line x1="1340" y1="548.5" x2="1876" y2="548.5" stroke="#d6d6d6"/><line x1="1340" y1="543.5" x2="1876" y2="543.5" stroke="#d6d6d6"/><line x1="1340" y1="532.5" x2="1876" y2="532.5" stroke="#d6d6d6"/><line x1="1340" y1="527.5" x2="1876" y2="527.5" stroke="#d6d6d6"/><line x1="1340" y1="522.5" x2="1876" y2="522.5" stroke="#d6d6d6"/><line x1="1340" y1="517.5" x2="1876" y2="517.5" stroke="#d6d6d6"/><line x1="1340" y1="506.5" x2="1876" y2="506.5" stroke="#d6d6d6"/><line x1="1340" y1="501.5" x2="1876" y2="501.5" stroke="#d6d6d6"/><line x1="1340" y1="496.5" x2="1876" y2="496.5" stroke="#d6d6d6"/><line x1="1340" y1="490.5" x2="1876" y2="490.5" stroke="#d6d6d6"/><line x1="1340" y1="480.5" x2="1876" y2="480.5" stroke="#d6d6d6"/><line x1="1340" y1="475.5" x2="1876" y2="475.5" stroke="#d6d6d6"/><line x1="1340" y1="469.5" x2="1876" y2="469.5" stroke="#d6d6d6"/><line x1="1340" y1="464.5" x2="1876" y2="464.5" stroke="#d6d6d6"/><line x1="1340" y1="454.5" x2="1876" y2="454.5" stroke="#d6d6d6"/><line x1="1340" y1="448.5" x2="1876" y2="448.5" stroke="#d6d6d6"/><line x1="1340" y1="443.5" x2="1876" y2="443.5" stroke="#d6d6d6"/><line x1="1340" y1="438.5" x2="1876" y2="438.5" stroke="#d6d6d6"/><line x1="1340" y1="427.5" x2="1876" y2="427.5" stroke="#d6d6d6"/><line x1="1340" y1="422.5" x2="1876" y2="422.5" stroke="#d6d6d6"/><line x1="1340" y1="417.5" x2="1876" y2="417.5" stroke="#d6d6d6"/><line x1="1340" y1="412.5" x2="1876" y2="412.5" stroke="#d6d6d6"/><line x1="1371.5" y1="407" x2="1371.5" y2="669" stroke="#d6d6d6"/><line x1="1393.5" y1="407" x2="1393.5" y2="669" stroke="#d6d6d6"/><line x1="1411.5" y1="407" x2="1411.5" y2="669" stroke="#d6d6d6"/><line x1="1425.5" y1="407" x2="1425.5" y2="669" stroke="#d6d6d6"/><line x1="1437.5" y1="407" x2="1437.5" y2="669" stroke="#d6d6d6"/><line x1="1447.5" y1="407" x2="1447.5" y2="669" stroke="#d6d6d6"/><line x1="1456.5" y1="407" x2="1456.5" y2="669" stroke="#d6d6d6"/><line x1="1518.5" y1="407" x2="1518.5" y2="669" stroke="#d6d6d6"/><line x1="1549.5" y1="407" x2="1549.5" y2="669" stroke="#d6d6d6"/><line x1="1572.5" y1="407" x2="1572.5" y2="669" stroke="#d6d6d6"/><line x1="1589.5" y1="407" x2="1589.5" y2="669" stroke="#d6d6d6"/><line x1="1603.5" y1="407" x2="1603.5" y2="669" stroke="#d6d6d6"/><line x1="1615.5" y1="407" x2="1615.5" y2="669" stroke="#d6d6d6"/><line x1="1625.5" y1="407" x2="1625.5" y2="669" stroke="#d6d6d6"/><line x1="1635.5" y1="407" x2="1635.5" y2="669" stroke="#d6d6d6"/><line x1="1696.5" y1="407" x2="1696.5" y2="669" stroke="#d6d6d6"/><line x1="1728.5" y1="407" x2="1728.5" y2="669" stroke="#d6d6d6"/><line x1="1750.5" y1="407" x2="1750.5" y2="669" stroke="#d6d6d6"/><line x1="1768.5" y1="407" x2="1768.5" y2="669" stroke="#d6d6d6"/><line x1="1782.5" y1="407" x2="1782.5" y2="669" stroke="#d6d6d6"/><line x1="1794.5" y1="407" x2="1794.5" y2="669" stroke="#d6d6d6"/><line x1="1804.5" y1="407" x2="1804.5" y2="669" stroke="#d6d6d6"/><line x1="1813.5" y1="407" x2="1813.5" y2="669" stroke="#d6d6d6"/><line x1="1464.5" y1="407" x2="1464.5" y2="669" stroke="#7a7a7a"/><line x1="1643.5" y1="407" x2="1643.5" y2="669" stroke="#7a7a7a"/><line x1="1821.5" y1="407" x2="1821.5" y2="669" stroke="#7a7a7a"/><line x1="1340" y1="669.5" x2="1876" y2="669.5" stroke="#7a7a7a"/><line x1="1340" y1="642.5" x2="1876" y2="642.5" stroke="#7a7a7a"/><line x1="1340" y1="616.5" x2="1876" y2="616.5" stroke="#7a7a7a"/><line x1="1340" y1="590.5" x2="1876" y2="590.5" stroke="#7a7a7a"/><line x1="1340" y1="564.5" x2="1876" y2="564.5" stroke="#7a7a7a"/><line x1="1340" y1="538.5" x2="1876" y2="538.5" stroke="#7a7a7a"/><line x1="1340" y1="511.5" x2="1876" y2="511.5" stroke="#7a7a7a"/><line x1="1340" y1="485.5" x2="1876" y2="485.5" stroke="#7a7a7a"/><line x1="1340" y1="459.5" x2="1876" y2="459.5" stroke="#7a7a7a"/><line x1="1340" y1="433.5" x2="1876" y2="433.5" stroke="#7a7a7a"/><line x1="1340" y1="407.5" x2="1876" y2="407.5" stroke="#7a7a7a"/><rect x="1340.5" y="407.5" width="536" height="262" fill="none" stroke="#7a7a7a"/></g><rect x="1300" y="699" width="616" height="309" fill="#fff"/><g shape-rendering="crispEdges"><line x1="1340" y1="979.5" x2="1876" y2="979.5" stroke="#d6d6d6"/><line x1="1340" y1="972.5" x2="1876" y2="972.5" stroke="#d6d6d6"/><line x1="1340" y1="966.5" x2="1876" y2="966.5" stroke="#d6d6d6"/><line x1="1340" y1="959.5" x2="1876" y2="959.5" stroke="#d6d6d6"/><line x1="1340" y1="946.5" x2="1876" y2="946.5" stroke="#d6d6d6"/><line x1="1340" y1="939.5" x2="1876" y2="939.5" stroke="#d6d6d6"/><line x1="1340" y1="933.5" x2="1876" y2="933.5" stroke="#d6d6d6"/><line x1="1340" y1="926.5" x2="1876" y2="926.5" stroke="#d6d6d6"/><line x1="1340" y1="913.5" x2="1876" y2="913.5" stroke="#d6d6d6"/><line x1="1340" y1="906.5" x2="1876" y2="906.5" stroke="#d6d6d6"/><line x1="1340" y1="900.5" x2="1876" y2="900.5" stroke="#d6d6d6"/><line x1="1340" y1="893.5" x2="1876" y2="893.5" stroke="#d6d6d6"/><line x1="1340" y1="880.5" x2="1876" y2="880.5" stroke="#d6d6d6"/><line x1="1340" y1="873.5" x2="1876" y2="873.5" stroke="#d6d6d6"/><line x1="1340" y1="867.5" x2="1876" y2="867.5" stroke="#d6d6d6"/><line x1="1340" y1="860.5" x2="1876" y2="860.5" stroke="#d6d6d6"/><line x1="1340" y1="847.5" x2="1876" y2="847.5" stroke="#d6d6d6"/><line x1="1340" y1="840.5" x2="1876" y2="840.5" stroke="#d6d6d6"/><line x1="1340" y1="834.5" x2="1876" y2="834.5" stroke="#d6d6d6"/><line x1="1340" y1="827.5" x2="1876" y2="827.5" stroke="#d6d6d6"/><line x1="1340" y1="814.5" x2="1876" y2="814.5" stroke="#d6d6d6"/><line x1="1340" y1="807.5" x2="1876" y2="807.5" stroke="#d6d6d6"/><line x1="1340" y1="801.5" x2="1876" y2="801.5" stroke="#d6d6d6"/><line x1="1340" y1="794.5" x2="1876" y2="794.5" stroke="#d6d6d6"/><line x1="1340" y1="781.5" x2="1876" y2="781.5" stroke="#d6d6d6"/><line x1="1340" y1="774.5" x2="1876" y2="774.5" stroke="#d6d6d6"/><line x1="1340" y1="768.5" x2="1876" y2="768.5" stroke="#d6d6d6"/><line x1="1340" y1="761.5" x2="1876" y2="761.5" stroke="#d6d6d6"/><line x1="1340" y1="748.5" x2="1876" y2="748.5" stroke="#d6d6d6"/><line x1="1340" y1="741.5" x2="1876" y2="741.5" stroke="#d6d6d6"/><line x1="1340" y1="735.5" x2="1876" y2="735.5" stroke="#d6d6d6"/><line x1="1340" y1="728.5" x2="1876" y2="728.5" stroke="#d6d6d6"/><line x1="1371.5" y1="722" x2="1371.5" y2="986" stroke="#d6d6d6"/><line x1="1393.5" y1="722" x2="1393.5" y2="986" stroke="#d6d6d6"/><line x1="1411.5" y1="722" x2="1411.5" y2="986" stroke="#d6d6d6"/><line x1="1425.5" y1="722" x2="1425.5" y2="986" stroke="#d6d6d6"/><line x1="1437.5" y1="722" x2="1437.5" y2="986" stroke="#d6d6d6"/><line x1="1447.5" y1="722" x2="1447.5" y2="986" stroke="#d6d6d6"/><line x1="1456.5" y1="722" x2="1456.5" y2="986" stroke="#d6d6d6"/><line x1="1518.5" y1="722" x2="1518.5" y2="986" stroke="#d6d6d6"/><line x1="1549.5" y1="722" x2="1549.5" y2="986" stroke="#d6d6d6"/><line x1="1572.5" y1="722" x2="1572.5" y2="986" stroke="#d6d6d6"/><line x1="1589.5" y1="722" x2="1589.5" y2="986" stroke="#d6d6d6"/><line x1="1603.5" y1="722" x2="1603.5" y2="986" stroke="#d6d6d6"/><line x1="1615.5" y1="722" x2="1615.5" y2="986" stroke="#d6d6d6"/><line x1="1625.5" y1="722" x2="1625.5" y2="986" stroke="#d6d6d6"/><line x1="1635.5" y1="722" x2="1635.5" y2="986" stroke="#d6d6d6"/><line x1="1696.5" y1="722" x2="1696.5" y2="986" stroke="#d6d6d6"/><line x1="1728.5" y1="722" x2="1728.5" y2="986" stroke="#d6d6d6"/><line x1="1750.5" y1="722" x2="1750.5" y2="986" stroke="#d6d6d6"/><line x1="1768.5" y1="722" x2="1768.5" y2="986" stroke="#d6d6d6"/><line x1="1782.5" y1="722" x2="1782.5" y2="986" stroke="#d6d6d6"/><line x1="1794.5" y1="722" x2="1794.5" y2="986" stroke="#d6d6d6"/><line x1="1804.5" y1="722" x2="1804.5" y2="986" stroke="#d6d6d6"/><line x1="1813.5" y1="722" x2="1813.5" y2="986" stroke="#d6d6d6"/><line x1="1464.5" y1="722" x2="1464.5" y2="986" stroke="#7a7a7a"/><line x1="1643.5" y1="722" x2="1643.5" y2="986" stroke="#7a7a7a"/><line x1="1821.5" y1="722" x2="1821.5" y2="986" stroke="#7a7a7a"/><line x1="1340" y1="986.5" x2="1876" y2="986.5" stroke="#7a7a7a"/><line x1="1340" y1="953.5" x2="1876" y2="953.5" stroke="#7a7a7a"/><line x1="1340" y1="920.5" x2="1876" y2="920.5" stroke="#7a7a7a"/><line x1="1340" y1="887.5" x2="1876" y2="887.5" stroke="#7a7a7a"/><line x1="1340" y1="854.5" x2="1876" y2="854.5" stroke="#7a7a7a"/><line x1="1340" y1="821.5" x2="1876" y2="821.5" stroke="#7a7a7a"/><line x1="1340" y1="788.5" x2="1876" y2="788.5" stroke="#7a7a7a"/><line x1="1340" y1="755.5" x2="1876" y2="755.5" stroke="#7a7a7a"/><line x1="1340" y1="722.5" x2="1876" y2="722.5" stroke="#7a7a7a"/><rect x="1340.5" y="722.5" width="536" height="264" fill="none" stroke="#7a7a7a"/></g><g clip-path="url(#c_spl)"><clipPath id="c_spl"><rect x="717" y="92" width="537" height="263"/></clipPath><path d="M716.4 223.2L717.64 223.19L718.87 223.19L720.11 223.18L721.35 223.18L722.58 223.17L723.82 223.17L725.06 223.16L726.29 223.16L727.53 223.15L728.77 223.15L730 223.14L731.24 223.14L732.48 223.14L733.72 223.13L734.95 223.13L736.19 223.13L737.43 223.12L738.66 223.12L739.9 223.12L741.14 223.11L742.37 223.11L743.61 223.11L744.85 223.11L746.08 223.11L747.32 223.11L748.56 223.1L749.79 223.1L751.03 223.1L752.27 223.1L753.5 223.1L754.74 223.11L755.98 223.11L757.21 223.11L758.45 223.11L759.69 223.11L760.92 223.12L762.16 223.12L763.4 223.12L764.63 223.13L765.87 223.13L767.11 223.14L768.35 223.14L769.58 223.15L770.82 223.16L772.06 223.17L773.29 223.17L774.53 223.18L775.77 223.19L777 223.2L778.24 223.21L779.48 223.22L780.71 223.24L781.95 223.25L783.19 223.26L784.42 223.28L785.66 223.29L786.9 223.31L788.13 223.32L789.37 223.34L790.61 223.36L791.84 223.37L793.08 223.39L794.32 223.41L795.55 223.43L796.79 223.46L798.03 223.48L799.26 223.5L800.5 223.52L801.74 223.55L802.98 223.58L804.21 223.6L805.45 223.63L806.69 223.66L807.92 223.69L809.16 223.72L810.4 223.75L811.63 223.78L812.87 223.81L814.11 223.84L815.34 223.88L816.58 223.91L817.82 223.94L819.05 223.98L820.29 224.01L821.53 224.05L822.76 224.09L824 224.13L825.24 224.16L826.47 224.2L827.71 224.24L828.95 224.28L830.18 224.32L831.42 224.36L832.66 224.4L833.89 224.44L835.13 224.48L836.37 224.53L837.61 224.57L838.84 224.61L840.08 224.65L841.32 224.7L842.55 224.74L843.79 224.79L845.03 224.83L846.26 224.88L847.5 224.92L848.74 224.97L849.97 225.01L851.21 225.06L852.45 225.11L853.68 225.16L854.92 225.21L856.16 225.26L857.39 225.31L858.63 225.36L859.87 225.42L861.1 225.47L862.34 225.53L863.58 225.58L864.81 225.64L866.05 225.7L867.29 225.76L868.52 225.83L869.76 225.89L871 225.96L872.24 226.02L873.47 226.09L874.71 226.16L875.95 226.24L877.18 226.31L878.42 226.39L879.66 226.46L880.89 226.54L882.13 226.63L883.37 226.71L884.6 226.8L885.84 226.89L887.08 226.98L888.31 227.07L889.55 227.17L890.79 227.27L892.02 227.37L893.26 227.47L894.5 227.58L895.73 227.69L896.97 227.8L898.21 227.91L899.44 228.03L900.68 228.15L901.92 228.27L903.15 228.4L904.39 228.52L905.63 228.65L906.87 228.79L908.1 228.92L909.34 229.06L910.58 229.2L911.81 229.35L913.05 229.49L914.29 229.64L915.52 229.79L916.76 229.94L918 230.1L919.23 230.26L920.47 230.42L921.71 230.58L922.94 230.75L924.18 230.92L925.42 231.09L926.65 231.26L927.89 231.44L929.13 231.61L930.36 231.79L931.6 231.98L932.84 232.16L934.07 232.35L935.31 232.53L936.55 232.72L937.78 232.91L939.02 233.11L940.26 233.3L941.5 233.49L942.73 233.69L943.97 233.89L945.21 234.09L946.44 234.29L947.68 234.49L948.92 234.69L950.15 234.89L951.39 235.09L952.63 235.3L953.86 235.51L955.1 235.72L956.34 235.94L957.57 236.17L958.81 236.4L960.05 236.64L961.28 236.9L962.52 237.16L963.76 237.44L964.99 237.73L966.23 238.04L967.47 238.36L968.7 238.7L969.94 239.06L971.18 239.43L972.41 239.82L973.65 240.22L974.89 240.64L976.13 241.06L977.36 241.5L978.6 241.95L979.84 242.41L981.07 242.87L982.31 243.35L983.55 243.83L984.78 244.32L986.02 244.83L987.26 245.34L988.49 245.88L989.73 246.42L990.97 246.99L992.2 247.57L993.44 248.18L994.68 248.8L995.91 249.46L997.15 250.13L998.39 250.83L999.62 251.56L1000.86 252.31L1002.1 253.09L1003.33 253.89L1004.57 254.71L1005.81 255.56L1007.04 256.44L1008.28 257.34L1009.52 258.26L1010.76 259.2L1011.99 260.17L1013.23 261.17L1014.47 262.19L1015.7 263.24L1016.94 264.31L1018.18 265.41L1019.41 266.54L1020.65 267.7L1021.89 268.88L1023.12 270.09L1024.36 271.33L1025.6 272.59L1026.83 273.89L1028.07 275.21L1029.31 276.56L1030.54 277.94L1031.78 279.34L1033.02 280.78L1034.25 282.24L1035.49 283.73L1036.73 285.25L1037.96 286.79L1039.2 288.37L1040.44 289.97L1041.67 291.6L1042.91 293.26L1044.15 294.93L1045.39 296.63L1046.62 298.35L1047.86 300.08L1049.1 301.82L1050.33 303.58L1051.57 305.35L1052.81 307.12L1054.04 308.9L1055.28 310.69L1056.52 312.47L1057.75 314.26L1058.99 316.04L1060.23 317.82L1061.46 319.59L1062.7 321.35L1063.94 323.1L1065.17 324.85L1066.41 326.58L1067.65 328.31L1068.88 330.04L1070.12 331.76L1071.36 333.47L1072.59 335.18L1073.83 336.88L1075.07 338.58L1076.3 340.27L1077.54 341.96L1078.78 343.65L1080.02 345.34L1081.25 347.02L1082.49 348.7L1083.73 350.38L1084.96 352.06L1086.2 353.74" stroke="#a0a0a0" stroke-width="1.2" fill="none" stroke-linejoin="round"/><path d="M1086.33 91.5L1086.66 91.9L1086.99 92.31L1087.32 92.71L1087.65 93.12L1087.98 93.52L1088.31 93.92L1088.64 94.33L1088.97 94.73L1089.3 95.13L1089.63 95.53L1089.96 95.93L1090.29 96.33L1090.63 96.73L1090.96 97.13L1091.29 97.53L1091.62 97.92L1091.95 98.32L1092.28 98.71L1092.61 99.1L1092.94 99.5L1093.27 99.89L1093.6 100.27L1093.93 100.66L1094.26 101.05L1094.59 101.43L1094.92 101.82L1095.25 102.2L1095.58 102.58L1095.92 102.95L1096.25 103.33L1096.58 103.7L1096.91 104.07L1097.24 104.44L1097.57 104.81L1097.9 105.17L1098.23 105.54L1098.56 105.9L1098.89 106.26L1099.22 106.61L1099.55 106.96L1099.88 107.31L1100.21 107.66L1100.54 108.01L1100.88 108.35L1101.21 108.69L1101.54 109.02L1101.87 109.36L1102.2 109.69L1102.53 110.01L1102.86 110.34L1103.19 110.66L1103.52 110.97L1103.85 111.29L1104.18 111.6L1104.51 111.9L1104.84 112.21L1105.17 112.51L1105.5 112.81L1105.84 113.1L1106.17 113.39L1106.5 113.68L1106.83 113.97L1107.16 114.25L1107.49 114.53L1107.82 114.8L1108.15 115.07L1108.48 115.34L1108.81 115.61L1109.14 115.87L1109.47 116.13L1109.8 116.38L1110.13 116.64L1110.46 116.88L1110.8 117.13L1111.13 117.37L1111.46 117.61L1111.79 117.85L1112.12 118.08L1112.45 118.31L1112.78 118.53L1113.11 118.76L1113.44 118.98L1113.77 119.19L1114.1 119.4L1114.43 119.61L1114.76 119.82L1115.09 120.02L1115.42 120.22L1115.75 120.42L1116.09 120.61L1116.42 120.8L1116.75 120.98L1117.08 121.16L1117.41 121.34L1117.74 121.52L1118.07 121.69L1118.4 121.86L1118.73 122.03L1119.06 122.19L1119.39 122.35L1119.72 122.5L1120.05 122.65L1120.38 122.8L1120.71 122.95L1121.05 123.09L1121.38 123.23L1121.71 123.36L1122.04 123.49L1122.37 123.62L1122.7 123.74L1123.03 123.86L1123.36 123.98L1123.69 124.1L1124.02 124.21L1124.35 124.31L1124.68 124.42L1125.01 124.52L1125.34 124.61L1125.67 124.71L1126.01 124.8L1126.34 124.88L1126.67 124.96L1127 125.04L1127.33 125.12L1127.66 125.19L1127.99 125.26L1128.32 125.33L1128.65 125.39L1128.98 125.45L1129.31 125.5L1129.64 125.55L1129.97 125.6L1130.3 125.65L1130.63 125.69L1130.97 125.72L1131.3 125.76L1131.63 125.79L1131.96 125.82L1132.29 125.84L1132.62 125.86L1132.95 125.88L1133.28 125.9L1133.61 125.91L1133.94 125.92L1134.27 125.92L1134.6 125.93L1134.93 125.92L1135.26 125.92L1135.59 125.91L1135.92 125.9L1136.26 125.89L1136.59 125.87L1136.92 125.86L1137.25 125.83L1137.58 125.81L1137.91 125.78L1138.24 125.75L1138.57 125.72L1138.9 125.68L1139.23 125.64L1139.56 125.6L1139.89 125.55L1140.22 125.5L1140.55 125.45L1140.88 125.4L1141.22 125.34L1141.55 125.28L1141.88 125.22L1142.21 125.15L1142.54 125.09L1142.87 125.02L1143.2 124.94L1143.53 124.87L1143.86 124.79L1144.19 124.71L1144.52 124.63L1144.85 124.54L1145.18 124.45L1145.51 124.36L1145.84 124.27L1146.18 124.17L1146.51 124.07L1146.84 123.97L1147.17 123.87L1147.5 123.76L1147.83 123.65L1148.16 123.54L1148.49 123.43L1148.82 123.32L1149.15 123.2L1149.48 123.08L1149.81 122.96L1150.14 122.83L1150.47 122.7L1150.8 122.58L1151.14 122.44L1151.47 122.31L1151.8 122.18L1152.13 122.04L1152.46 121.9L1152.79 121.76L1153.12 121.61L1153.45 121.47L1153.78 121.32L1154.11 121.17L1154.44 121.02L1154.77 120.86L1155.1 120.71L1155.43 120.55L1155.76 120.39L1156.1 120.23L1156.43 120.06L1156.76 119.9L1157.09 119.73L1157.42 119.56L1157.75 119.38L1158.08 119.21L1158.41 119.03L1158.74 118.85L1159.07 118.67L1159.4 118.49L1159.73 118.3L1160.06 118.11L1160.39 117.92L1160.72 117.72L1161.05 117.52L1161.39 117.32L1161.72 117.11L1162.05 116.91L1162.38 116.69L1162.71 116.48L1163.04 116.26L1163.37 116.04L1163.7 115.82L1164.03 115.59L1164.36 115.35L1164.69 115.12L1165.02 114.88L1165.35 114.64L1165.68 114.39L1166.01 114.14L1166.35 113.88L1166.68 113.62L1167.01 113.36L1167.34 113.09L1167.67 112.82L1168 112.54L1168.33 112.26L1168.66 111.97L1168.99 111.68L1169.32 111.39L1169.65 111.09L1169.98 110.78L1170.31 110.47L1170.64 110.16L1170.97 109.84L1171.31 109.52L1171.64 109.19L1171.97 108.85L1172.3 108.51L1172.63 108.16L1172.96 107.81L1173.29 107.46L1173.62 107.09L1173.95 106.73L1174.28 106.35L1174.61 105.97L1174.94 105.59L1175.27 105.19L1175.6 104.8L1175.93 104.39L1176.27 103.98L1176.6 103.57L1176.93 103.15L1177.26 102.72L1177.59 102.29L1177.92 101.86L1178.25 101.42L1178.58 100.97L1178.91 100.53L1179.24 100.07L1179.57 99.62L1179.9 99.16L1180.23 98.7L1180.56 98.23L1180.89 97.76L1181.22 97.29L1181.56 96.82L1181.89 96.34L1182.22 95.86L1182.55 95.38L1182.88 94.9L1183.21 94.42L1183.54 93.93L1183.87 93.45L1184.2 92.96L1184.53 92.47L1184.86 91.99L1185.19 91.5" stroke="#a0a0a0" stroke-width="1.2" fill="none" stroke-linejoin="round"/><path d="M1187.71 353.35L1187.93 352.89L1188.15 352.44L1188.37 351.99L1188.58 351.53L1188.8 351.08L1189.02 350.63L1189.24 350.18L1189.46 349.72L1189.68 349.27L1189.9 348.82L1190.12 348.37L1190.34 347.91L1190.56 347.46L1190.78 347.01L1191 346.56L1191.22 346.11L1191.43 345.66L1191.65 345.21L1191.87 344.75L1192.09 344.3L1192.31 343.85L1192.53 343.4L1192.75 342.95L1192.97 342.5L1193.19 342.05L1193.41 341.6L1193.63 341.15L1193.85 340.71L1194.07 340.26L1194.28 339.81L1194.5 339.36L1194.72 338.91L1194.94 338.46L1195.16 338.02L1195.38 337.57L1195.6 337.12L1195.82 336.68L1196.04 336.23L1196.26 335.79L1196.48 335.34L1196.7 334.9L1196.92 334.45L1197.13 334.01L1197.35 333.57L1197.57 333.12L1197.79 332.68L1198.01 332.24L1198.23 331.8L1198.45 331.36L1198.67 330.92L1198.89 330.48L1199.11 330.04L1199.33 329.6L1199.55 329.16L1199.77 328.72L1199.98 328.29L1200.2 327.85L1200.42 327.41L1200.64 326.98L1200.86 326.54L1201.08 326.11L1201.3 325.68L1201.52 325.24L1201.74 324.81L1201.96 324.38L1202.18 323.95L1202.4 323.52L1202.62 323.09L1202.83 322.66L1203.05 322.23L1203.27 321.8L1203.49 321.37L1203.71 320.95L1203.93 320.52L1204.15 320.1L1204.37 319.67L1204.59 319.25L1204.81 318.83L1205.03 318.41L1205.25 317.99L1205.46 317.57L1205.68 317.15L1205.9 316.73L1206.12 316.31L1206.34 315.89L1206.56 315.48L1206.78 315.06L1207 314.65L1207.22 314.24L1207.44 313.82L1207.66 313.41L1207.88 313L1208.1 312.59L1208.31 312.18L1208.53 311.77L1208.75 311.37L1208.97 310.96L1209.19 310.55L1209.41 310.15L1209.63 309.74L1209.85 309.34L1210.07 308.94L1210.29 308.53L1210.51 308.13L1210.73 307.73L1210.95 307.33L1211.16 306.93L1211.38 306.53L1211.6 306.12L1211.82 305.72L1212.04 305.32L1212.26 304.92L1212.48 304.52L1212.7 304.13L1212.92 303.73L1213.14 303.33L1213.36 302.93L1213.58 302.53L1213.8 302.13L1214.01 301.73L1214.23 301.33L1214.45 300.93L1214.67 300.53L1214.89 300.13L1215.11 299.73L1215.33 299.33L1215.55 298.93L1215.77 298.53L1215.99 298.12L1216.21 297.72L1216.43 297.32L1216.65 296.92L1216.86 296.51L1217.08 296.11L1217.3 295.7L1217.52 295.3L1217.74 294.89L1217.96 294.48L1218.18 294.08L1218.4 293.67L1218.62 293.26L1218.84 292.85L1219.06 292.44L1219.28 292.03L1219.5 291.61L1219.71 291.2L1219.93 290.78L1220.15 290.37L1220.37 289.95L1220.59 289.53L1220.81 289.12L1221.03 288.69L1221.25 288.27L1221.47 287.85L1221.69 287.43L1221.91 287L1222.13 286.57L1222.34 286.15L1222.56 285.72L1222.78 285.29L1223 284.85L1223.22 284.42L1223.44 283.98L1223.66 283.55L1223.88 283.11L1224.1 282.67L1224.32 282.22L1224.54 281.78L1224.76 281.33L1224.98 280.89L1225.19 280.44L1225.41 279.99L1225.63 279.53L1225.85 279.08L1226.07 278.62L1226.29 278.16L1226.51 277.7L1226.73 277.24L1226.95 276.77L1227.17 276.3L1227.39 275.83L1227.61 275.36L1227.83 274.89L1228.04 274.41L1228.26 273.93L1228.48 273.45L1228.7 272.96L1228.92 272.48L1229.14 271.99L1229.36 271.5L1229.58 271L1229.8 270.51L1230.02 270.01L1230.24 269.51L1230.46 269L1230.68 268.5L1230.89 267.99L1231.11 267.47L1231.33 266.96L1231.55 266.44L1231.77 265.92L1231.99 265.39L1232.21 264.87L1232.43 264.34L1232.65 263.8L1232.87 263.27L1233.09 262.73L1233.31 262.19L1233.53 261.64L1233.74 261.09L1233.96 260.54L1234.18 259.99L1234.4 259.43L1234.62 258.87L1234.84 258.3L1235.06 257.74L1235.28 257.17L1235.5 256.6L1235.72 256.02L1235.94 255.45L1236.16 254.87L1236.38 254.28L1236.59 253.7L1236.81 253.11L1237.03 252.52L1237.25 251.93L1237.47 251.33L1237.69 250.74L1237.91 250.14L1238.13 249.54L1238.35 248.93L1238.57 248.32L1238.79 247.71L1239.01 247.1L1239.23 246.49L1239.44 245.87L1239.66 245.26L1239.88 244.64L1240.1 244.01L1240.32 243.39L1240.54 242.76L1240.76 242.14L1240.98 241.51L1241.2 240.87L1241.42 240.24L1241.64 239.61L1241.86 238.97L1242.07 238.33L1242.29 237.69L1242.51 237.05L1242.73 236.4L1242.95 235.76L1243.17 235.11L1243.39 234.46L1243.61 233.81L1243.83 233.16L1244.05 232.5L1244.27 231.85L1244.49 231.19L1244.71 230.54L1244.92 229.88L1245.14 229.22L1245.36 228.56L1245.58 227.89L1245.8 227.23L1246.02 226.57L1246.24 225.9L1246.46 225.23L1246.68 224.56L1246.9 223.89L1247.12 223.22L1247.34 222.55L1247.56 221.88L1247.77 221.21L1247.99 220.54L1248.21 219.86L1248.43 219.19L1248.65 218.51L1248.87 217.83L1249.09 217.16L1249.31 216.48L1249.53 215.8L1249.75 215.12L1249.97 214.44L1250.19 213.76L1250.41 213.08L1250.62 212.4L1250.84 211.72L1251.06 211.03L1251.28 210.35L1251.5 209.67L1251.72 208.99L1251.94 208.3L1252.16 207.62L1252.38 206.94L1252.6 206.25L1252.82 205.57L1253.04 204.89L1253.26 204.2" stroke="#a0a0a0" stroke-width="1.2" fill="none" stroke-linejoin="round"/><path d="M1085.83 354 V92 M1185.88 92 V354" stroke="#a0a0a0" stroke-width="1.2"/><line x1="717" y1="256.25" x2="1253" y2="256.25" stroke="#ff40ff" stroke-width="2"/><path d="M973.9 353.5L974.83 351.69L975.76 349.88L976.69 348.06L977.63 346.24L978.56 344.41L979.49 342.58L980.42 340.74L981.35 338.89L982.28 337.04L983.22 335.18L984.15 333.32L985.08 331.45L986.01 329.57L986.94 327.69L987.88 325.81L988.81 323.92L989.74 322.02L990.67 320.12L991.6 318.21L992.53 316.3L993.47 314.38L994.4 312.46L995.33 310.53L996.26 308.59L997.19 306.65L998.13 304.71L999.06 302.76L999.99 300.8L1000.92 298.84L1001.85 296.87L1002.78 294.9L1003.72 292.93L1004.65 290.94L1005.58 288.96L1006.51 286.96L1007.44 284.97L1008.37 282.96L1009.31 280.96L1010.24 278.94L1011.17 276.93L1012.1 274.9L1013.03 272.88L1013.97 270.84L1014.9 268.81L1015.83 266.76L1016.76 264.72L1017.69 262.67L1018.62 260.61L1019.56 258.55L1020.49 256.48L1021.42 254.41L1022.35 252.33L1023.28 250.26L1024.21 248.18L1025.15 246.09L1026.08 244.01L1027.01 241.93L1027.94 239.84L1028.87 237.76L1029.81 235.68L1030.74 233.61L1031.67 231.53L1032.6 229.46L1033.53 227.39L1034.46 225.33L1035.4 223.28L1036.33 221.23L1037.26 219.19L1038.19 217.15L1039.12 215.13L1040.05 213.11L1040.99 211.1L1041.92 209.11L1042.85 207.12L1043.78 205.15L1044.71 203.19L1045.65 201.24L1046.58 199.31L1047.51 197.39L1048.44 195.49L1049.37 193.6L1050.3 191.73L1051.24 189.87L1052.17 188.04L1053.1 186.22L1054.03 184.42L1054.96 182.65L1055.9 180.89L1056.83 179.15L1057.76 177.44L1058.69 175.75L1059.62 174.08L1060.55 172.44L1061.49 170.81L1062.42 169.2L1063.35 167.6L1064.28 166.02L1065.21 164.44L1066.14 162.86L1067.08 161.29L1068.01 159.71L1068.94 158.13L1069.87 156.55L1070.8 154.95L1071.74 153.33L1072.67 151.71L1073.6 150.06L1074.53 148.42L1075.46 146.76L1076.39 145.11L1077.33 143.47L1078.26 141.84L1079.19 140.22L1080.12 138.63L1081.05 137.06L1081.98 135.53L1082.92 134.03L1083.85 132.58L1084.78 131.17L1085.71 129.81L1086.64 128.51L1087.58 127.27L1088.51 126.1L1089.44 124.99L1090.37 123.94L1091.3 122.95L1092.23 122.03L1093.17 121.16L1094.1 120.35L1095.03 119.59L1095.96 118.9L1096.89 118.25L1097.83 117.67L1098.76 117.13L1099.69 116.65L1100.62 116.21L1101.55 115.83L1102.48 115.49L1103.42 115.21L1104.35 114.97L1105.28 114.77L1106.21 114.62L1107.14 114.51L1108.07 114.44L1109.01 114.42L1109.94 114.43L1110.87 114.49L1111.8 114.57L1112.73 114.69L1113.67 114.84L1114.6 115.02L1115.53 115.22L1116.46 115.45L1117.39 115.7L1118.32 115.97L1119.26 116.25L1120.19 116.55L1121.12 116.86L1122.05 117.18L1122.98 117.5L1123.91 117.83L1124.85 118.17L1125.78 118.5L1126.71 118.83L1127.64 119.16L1128.57 119.48L1129.51 119.8L1130.44 120.1L1131.37 120.39L1132.3 120.66L1133.23 120.93L1134.16 121.18L1135.1 121.41L1136.03 121.64L1136.96 121.86L1137.89 122.06L1138.82 122.26L1139.76 122.45L1140.69 122.63L1141.62 122.8L1142.55 122.96L1143.48 123.11L1144.41 123.26L1145.35 123.4L1146.28 123.54L1147.21 123.67L1148.14 123.79L1149.07 123.91L1150 124.03L1150.94 124.14L1151.87 124.25L1152.8 124.36L1153.73 124.47L1154.66 124.57L1155.6 124.67L1156.53 124.78L1157.46 124.88L1158.39 124.98L1159.32 125.08L1160.25 125.18L1161.19 125.28L1162.12 125.38L1163.05 125.48L1163.98 125.58L1164.91 125.68L1165.84 125.77L1166.78 125.87L1167.71 125.97L1168.64 126.06L1169.57 126.16L1170.5 126.25L1171.44 126.34L1172.37 126.43L1173.3 126.52L1174.23 126.62L1175.16 126.7L1176.09 126.79L1177.03 126.88L1177.96 126.97L1178.89 127.05L1179.82 127.14L1180.75 127.22L1181.68 127.31L1182.62 127.39L1183.55 127.47L1184.48 127.55L1185.41 127.63L1186.34 127.71L1187.28 127.78L1188.21 127.86L1189.14 127.93L1190.07 128.01L1191 128.08L1191.93 128.15L1192.87 128.22L1193.8 128.29L1194.73 128.35L1195.66 128.42L1196.59 128.48L1197.53 128.55L1198.46 128.61L1199.39 128.67L1200.32 128.73L1201.25 128.79L1202.18 128.84L1203.12 128.9L1204.05 128.95L1204.98 129.01L1205.91 129.06L1206.84 129.11L1207.77 129.16L1208.71 129.21L1209.64 129.26L1210.57 129.31L1211.5 129.36L1212.43 129.4L1213.37 129.45L1214.3 129.49L1215.23 129.53L1216.16 129.58L1217.09 129.62L1218.02 129.66L1218.96 129.7L1219.89 129.74L1220.82 129.78L1221.75 129.81L1222.68 129.85L1223.61 129.89L1224.55 129.92L1225.48 129.96L1226.41 129.99L1227.34 130.03L1228.27 130.06L1229.21 130.09L1230.14 130.13L1231.07 130.16L1232 130.19L1232.93 130.22L1233.86 130.25L1234.8 130.28L1235.73 130.31L1236.66 130.34L1237.59 130.37L1238.52 130.4L1239.46 130.43L1240.39 130.45L1241.32 130.48L1242.25 130.51L1243.18 130.54L1244.11 130.56L1245.05 130.59L1245.98 130.62L1246.91 130.64L1247.84 130.67L1248.77 130.7L1249.7 130.72L1250.64 130.75L1251.57 130.77L1252.5 130.8" stroke="#2a9a2a" stroke-width="1.5" fill="none" stroke-linejoin="round"/><path d="M717.5 172.72L719.03 172.71L720.55 172.71L722.08 172.7L723.6 172.69L725.13 172.69L726.65 172.68L728.18 172.68L729.71 172.67L731.23 172.66L732.76 172.66L734.28 172.65L735.81 172.64L737.33 172.64L738.86 172.63L740.39 172.62L741.91 172.62L743.44 172.61L744.96 172.61L746.49 172.6L748.01 172.59L749.54 172.59L751.06 172.58L752.59 172.57L754.12 172.57L755.64 172.56L757.17 172.55L758.69 172.54L760.22 172.54L761.74 172.53L763.27 172.52L764.8 172.52L766.32 172.51L767.85 172.5L769.37 172.5L770.9 172.49L772.42 172.48L773.95 172.47L775.48 172.47L777 172.46L778.53 172.45L780.05 172.44L781.58 172.44L783.1 172.43L784.63 172.42L786.16 172.41L787.68 172.41L789.21 172.4L790.73 172.39L792.26 172.38L793.78 172.37L795.31 172.36L796.83 172.36L798.36 172.35L799.89 172.34L801.41 172.33L802.94 172.32L804.46 172.31L805.99 172.3L807.51 172.3L809.04 172.29L810.57 172.28L812.09 172.27L813.62 172.26L815.14 172.25L816.67 172.24L818.19 172.23L819.72 172.22L821.25 172.21L822.77 172.2L824.3 172.19L825.82 172.18L827.35 172.17L828.87 172.16L830.4 172.15L831.93 172.14L833.45 172.13L834.98 172.12L836.5 172.11L838.03 172.1L839.55 172.08L841.08 172.07L842.6 172.06L844.13 172.05L845.66 172.04L847.18 172.03L848.71 172.01L850.23 172L851.76 171.99L853.28 171.98L854.81 171.96L856.34 171.95L857.86 171.94L859.39 171.92L860.91 171.91L862.44 171.89L863.96 171.88L865.49 171.86L867.02 171.84L868.54 171.83L870.07 171.81L871.59 171.79L873.12 171.77L874.64 171.75L876.17 171.73L877.7 171.71L879.22 171.69L880.75 171.67L882.27 171.65L883.8 171.62L885.32 171.6L886.85 171.58L888.37 171.55L889.9 171.52L891.43 171.49L892.95 171.47L894.48 171.44L896 171.41L897.53 171.38L899.05 171.34L900.58 171.31L902.11 171.28L903.63 171.24L905.16 171.21L906.68 171.17L908.21 171.14L909.73 171.1L911.26 171.06L912.79 171.03L914.31 170.99L915.84 170.95L917.36 170.91L918.89 170.88L920.41 170.84L921.94 170.8L923.47 170.77L924.99 170.73L926.52 170.7L928.04 170.66L929.57 170.63L931.09 170.59L932.62 170.56L934.14 170.53L935.67 170.5L937.2 170.47L938.72 170.44L940.25 170.41L941.77 170.38L943.3 170.36L944.82 170.33L946.35 170.3L947.88 170.26L949.4 170.22L950.93 170.18L952.45 170.12L953.98 170.06L955.5 170L957.03 169.92L958.56 169.83L960.08 169.73L961.61 169.61L963.13 169.49L964.66 169.34L966.18 169.19L967.71 169.01L969.24 168.82L970.76 168.62L972.29 168.4L973.81 168.18L975.34 167.95L976.86 167.72L978.39 167.48L979.91 167.25L981.44 167.03L982.97 166.8L984.49 166.59L986.02 166.37L987.54 166.16L989.07 165.96L990.59 165.76L992.12 165.56L993.65 165.37L995.17 165.17L996.7 164.99L998.22 164.8L999.75 164.62L1001.27 164.43L1002.8 164.25L1004.33 164.08L1005.85 163.9L1007.38 163.72L1008.9 163.55L1010.43 163.38L1011.95 163.2L1013.48 163.03L1015.01 162.86L1016.53 162.69L1018.06 162.52L1019.58 162.34L1021.11 162.17L1022.63 162.01L1024.16 161.88L1025.68 161.81L1027.21 161.82L1028.74 161.94L1030.26 162.18L1031.79 162.54L1033.31 163L1034.84 163.54L1036.36 164.15L1037.89 164.83L1039.42 165.55L1040.94 166.3L1042.47 167.07L1043.99 167.86L1045.52 168.68L1047.04 169.54L1048.57 170.44L1050.1 171.4L1051.62 172.42L1053.15 173.5L1054.67 174.66L1056.2 175.91L1057.72 177.25L1059.25 178.69L1060.78 180.23L1062.3 181.88L1063.83 183.62L1065.35 185.44L1066.88 187.34L1068.4 189.3L1069.93 191.33L1071.45 193.41L1072.98 195.53L1074.51 197.7L1076.03 199.9L1077.56 202.14L1079.08 204.41L1080.61 206.71L1082.13 209.04L1083.66 211.4L1085.19 213.78L1086.71 216.19L1088.24 218.61L1089.76 221.05L1091.29 223.51L1092.81 225.98L1094.34 228.45L1095.87 230.94L1097.39 233.43L1098.92 235.91L1100.44 238.4L1101.97 240.88L1103.49 243.36L1105.02 245.82L1106.55 248.28L1108.07 250.72L1109.6 253.14L1111.12 255.53L1112.65 257.91L1114.17 260.26L1115.7 262.59L1117.22 264.89L1118.75 267.18L1120.28 269.46L1121.8 271.72L1123.33 273.97L1124.85 276.22L1126.38 278.46L1127.9 280.71L1129.43 282.95L1130.96 285.2L1132.48 287.46L1134.01 289.72L1135.53 292L1137.06 294.3L1138.58 296.62L1140.11 298.95L1141.64 301.31L1143.16 303.7L1144.69 306.12L1146.21 308.57L1147.74 311.03L1149.26 313.52L1150.79 316.03L1152.32 318.55L1153.84 321.08L1155.37 323.62L1156.89 326.16L1158.42 328.7L1159.94 331.24L1161.47 333.78L1162.99 336.31L1164.52 338.83L1166.05 341.33L1167.57 343.81L1169.1 346.27L1170.62 348.71L1172.15 351.12L1173.67 353.5" stroke="#ff3030" stroke-width="1.5" fill="none" stroke-linejoin="round"/><path d="M717.5 172.72L719.29 172.72L721.08 172.71L722.87 172.71L724.66 172.7L726.45 172.7L728.24 172.69L730.03 172.69L731.81 172.68L733.6 172.68L735.39 172.68L737.18 172.67L738.97 172.67L740.76 172.66L742.55 172.66L744.34 172.65L746.13 172.65L747.92 172.64L749.71 172.64L751.5 172.63L753.29 172.62L755.08 172.62L756.86 172.61L758.65 172.61L760.44 172.6L762.23 172.59L764.02 172.59L765.81 172.58L767.6 172.57L769.39 172.57L771.18 172.56L772.97 172.55L774.76 172.55L776.55 172.54L778.34 172.53L780.13 172.52L781.91 172.51L783.7 172.51L785.49 172.5L787.28 172.49L789.07 172.48L790.86 172.47L792.65 172.46L794.44 172.45L796.23 172.44L798.02 172.43L799.81 172.42L801.6 172.41L803.39 172.4L805.18 172.38L806.96 172.37L808.75 172.36L810.54 172.35L812.33 172.33L814.12 172.32L815.91 172.31L817.7 172.29L819.49 172.28L821.28 172.26L823.07 172.25L824.86 172.23L826.65 172.22L828.44 172.2L830.23 172.19L832.02 172.17L833.8 172.15L835.59 172.13L837.38 172.12L839.17 172.1L840.96 172.08L842.75 172.06L844.54 172.04L846.33 172.02L848.12 172L849.91 171.98L851.7 171.96L853.49 171.93L855.28 171.91L857.07 171.89L858.85 171.87L860.64 171.85L862.43 171.82L864.22 171.8L866.01 171.78L867.8 171.75L869.59 171.73L871.38 171.71L873.17 171.69L874.96 171.66L876.75 171.64L878.54 171.62L880.33 171.6L882.12 171.57L883.9 171.55L885.69 171.53L887.48 171.51L889.27 171.49L891.06 171.46L892.85 171.44L894.64 171.42L896.43 171.4L898.22 171.38L900.01 171.36L901.8 171.34L903.59 171.32L905.38 171.3L907.17 171.28L908.95 171.26L910.74 171.23L912.53 171.21L914.32 171.18L916.11 171.15L917.9 171.11L919.69 171.08L921.48 171.04L923.27 171L925.06 170.95L926.85 170.9L928.64 170.85L930.43 170.79L932.22 170.73L934.01 170.66L935.79 170.59L937.58 170.51L939.37 170.43L941.16 170.34L942.95 170.25L944.74 170.15L946.53 170.04L948.32 169.93L950.11 169.81L951.9 169.69L953.69 169.57L955.48 169.44L957.27 169.3L959.06 169.16L960.84 169.02L962.63 168.87L964.42 168.72L966.21 168.56L968 168.4L969.79 168.24L971.58 168.07L973.37 167.9L975.16 167.72L976.95 167.54L978.74 167.36L980.53 167.18L982.32 166.99L984.11 166.8L985.89 166.61L987.68 166.41L989.47 166.2L991.26 166L993.05 165.78L994.84 165.56L996.63 165.34L998.42 165.11L1000.21 164.87L1002 164.62L1003.79 164.37L1005.58 164.11L1007.37 163.84L1009.16 163.57L1010.94 163.28L1012.73 162.98L1014.52 162.68L1016.31 162.36L1018.1 162.04L1019.89 161.7L1021.68 161.35L1023.47 160.99L1025.26 160.61L1027.05 160.2L1028.84 159.77L1030.63 159.31L1032.42 158.82L1034.21 158.28L1035.99 157.71L1037.78 157.08L1039.57 156.41L1041.36 155.68L1043.15 154.89L1044.94 154.04L1046.73 153.14L1048.52 152.17L1050.31 151.15L1052.1 150.06L1053.89 148.92L1055.68 147.72L1057.47 146.46L1059.26 145.15L1061.05 143.77L1062.83 142.34L1064.62 140.84L1066.41 139.28L1068.2 137.65L1069.99 135.95L1071.78 134.18L1073.57 132.34L1075.36 130.46L1077.15 128.55L1078.94 126.67L1080.73 124.82L1082.52 123.05L1084.31 121.39L1086.1 119.86L1087.88 118.5L1089.67 117.31L1091.46 116.29L1093.25 115.43L1095.04 114.72L1096.83 114.14L1098.62 113.69L1100.41 113.36L1102.2 113.13L1103.99 113L1105.78 112.96L1107.57 113.03L1109.36 113.2L1111.15 113.47L1112.93 113.84L1114.72 114.29L1116.51 114.8L1118.3 115.37L1120.09 115.97L1121.88 116.61L1123.67 117.26L1125.46 117.91L1127.25 118.56L1129.04 119.18L1130.83 119.76L1132.62 120.31L1134.41 120.81L1136.2 121.27L1137.98 121.69L1139.77 122.08L1141.56 122.44L1143.35 122.77L1145.14 123.08L1146.93 123.37L1148.72 123.63L1150.51 123.89L1152.3 124.12L1154.09 124.35L1155.88 124.57L1157.67 124.79L1159.46 125.01L1161.25 125.21L1163.04 125.42L1164.82 125.62L1166.61 125.82L1168.4 126.01L1170.19 126.2L1171.98 126.39L1173.77 126.57L1175.56 126.74L1177.35 126.91L1179.14 127.08L1180.93 127.25L1182.72 127.4L1184.51 127.56L1186.3 127.71L1188.09 127.85L1189.87 127.99L1191.66 128.13L1193.45 128.26L1195.24 128.39L1197.03 128.51L1198.82 128.63L1200.61 128.74L1202.4 128.85L1204.19 128.96L1205.98 129.06L1207.77 129.16L1209.56 129.25L1211.35 129.34L1213.14 129.43L1214.92 129.51L1216.71 129.59L1218.5 129.67L1220.29 129.75L1222.08 129.82L1223.87 129.89L1225.66 129.96L1227.45 130.02L1229.24 130.09L1231.03 130.15L1232.82 130.21L1234.61 130.27L1236.4 130.33L1238.19 130.38L1239.97 130.44L1241.76 130.49L1243.55 130.54L1245.34 130.6L1247.13 130.65L1248.92 130.7L1250.71 130.75L1252.5 130.8" stroke="#5c5c5c" stroke-width="2.6" fill="none" stroke-linejoin="round"/><path d="M717.5 172.72L718.49 172.72L719.47 172.71L720.46 172.71L721.44 172.7L722.43 172.7L723.42 172.7L724.4 172.69L725.39 172.69L726.37 172.68L727.36 172.68L728.35 172.68L729.33 172.67L730.32 172.67L731.3 172.66L732.29 172.66L733.28 172.65L734.26 172.65L735.25 172.65L736.23 172.64L737.22 172.64L738.21 172.63L739.19 172.63L740.18 172.63L741.16 172.62L742.15 172.62L743.14 172.61L744.12 172.61L745.11 172.6L746.09 172.6L747.08 172.6L748.07 172.59L749.05 172.59L750.04 172.58L751.03 172.58L752.01 172.57L753 172.57L753.98 172.57L754.97 172.56L755.96 172.56L756.94 172.55L757.93 172.55L758.91 172.54L759.9 172.54L760.89 172.53L761.87 172.53L762.86 172.53L763.84 172.52L764.83 172.52L765.82 172.51L766.8 172.51L767.79 172.5L768.77 172.5L769.76 172.49L770.75 172.49L771.73 172.48L772.72 172.48L773.7 172.47L774.69 172.47L775.68 172.47L776.66 172.46L777.65 172.46L778.63 172.45L779.62 172.45L780.61 172.44L781.59 172.44L782.58 172.43L783.56 172.43L784.55 172.42L785.54 172.42L786.52 172.41L787.51 172.41L788.49 172.4L789.48 172.4L790.47 172.39L791.45 172.39L792.44 172.38L793.42 172.37L794.41 172.37L795.4 172.36L796.38 172.36L797.37 172.35L798.35 172.35L799.34 172.34L800.33 172.34L801.31 172.33L802.3 172.33L803.28 172.32L804.27 172.31L805.26 172.31L806.24 172.3L807.23 172.3L808.21 172.29L809.2 172.29L810.19 172.28L811.17 172.27L812.16 172.27L813.14 172.26L814.13 172.26L815.12 172.25L816.1 172.24L817.09 172.24L818.08 172.23L819.06 172.22L820.05 172.22L821.03 172.21L822.02 172.21L823.01 172.2L823.99 172.19L824.98 172.19L825.96 172.18L826.95 172.17L827.94 172.17L828.92 172.16L829.91 172.15L830.89 172.15L831.88 172.14L832.87 172.13L833.85 172.13L834.84 172.12L835.82 172.11L836.81 172.1L837.8 172.1L838.78 172.09L839.77 172.08L840.75 172.08L841.74 172.07L842.73 172.06L843.71 172.05L844.7 172.05L845.68 172.04L846.67 172.03L847.66 172.02L848.64 172.01L849.63 172.01L850.61 172L851.6 171.99L852.59 171.98L853.57 171.97L854.56 171.97L855.54 171.96L856.53 171.95L857.52 171.94L858.5 171.93L859.49 171.92L860.47 171.91L861.46 171.9L862.45 171.89L863.43 171.88L864.42 171.87L865.4 171.86L866.39 171.85L867.38 171.84L868.36 171.83L869.35 171.82L870.33 171.81L871.32 171.8L872.31 171.78L873.29 171.77L874.28 171.76L875.26 171.75L876.25 171.73L877.24 171.72L878.22 171.71L879.21 171.69L880.19 171.68L881.18 171.66L882.17 171.65L883.15 171.63L884.14 171.62L885.13 171.6L886.11 171.59L887.1 171.57L888.08 171.55L889.07 171.54L890.06 171.52L891.04 171.5L892.03 171.48L893.01 171.47L894 171.45L894.99 171.43L895.97 171.41L896.96 171.39L897.94 171.37L898.93 171.35L899.92 171.32L900.9 171.3L901.89 171.28L902.87 171.26L903.86 171.24L904.85 171.21L905.83 171.19L906.82 171.17L907.8 171.14L908.79 171.12L909.78 171.1L910.76 171.07L911.75 171.05L912.73 171.03L913.72 171L914.71 170.98L915.69 170.96L916.68 170.93L917.66 170.91L918.65 170.88L919.64 170.86L920.62 170.84L921.61 170.81L922.59 170.79L923.58 170.77L924.57 170.74L925.55 170.72L926.54 170.7L927.52 170.67L928.51 170.65L929.5 170.63L930.48 170.61L931.47 170.59L932.45 170.57L933.44 170.54L934.43 170.52L935.41 170.5L936.4 170.48L937.38 170.47L938.37 170.45L939.36 170.43L940.34 170.41L941.33 170.39L942.31 170.38L943.3 170.36L944.29 170.34L945.27 170.32L946.26 170.3L947.24 170.28L948.23 170.25L949.22 170.23L950.2 170.2L951.19 170.17L952.18 170.13L953.16 170.1L954.15 170.06L955.13 170.01L956.12 169.97L957.11 169.91L958.09 169.86L959.08 169.8L960.06 169.73L961.05 169.66L962.04 169.58L963.02 169.5L964.01 169.41L964.99 169.31L965.98 169.21L966.97 169.1L967.95 168.98L968.94 168.86L969.92 168.73L970.91 168.59L971.9 168.46L972.88 168.31L973.87 168.17L974.85 168.02L975.84 167.87L976.83 167.72L977.81 167.57L978.8 167.42L979.78 167.27L980.77 167.12L981.76 166.98L982.74 166.84L983.73 166.69L984.71 166.56L985.7 166.42L986.69 166.28L987.67 166.15L988.66 166.01L989.64 165.88L990.63 165.75L991.62 165.63L992.6 165.5L993.59 165.37L994.57 165.25L995.56 165.13L996.55 165L997.53 164.88L998.52 164.76L999.5 164.65L1000.49 164.53L1001.48 164.41L1002.46 164.29L1003.45 164.18L1004.43 164.06L1005.42 163.95L1006.41 163.84L1007.39 163.72L1008.38 163.61L1009.36 163.5L1010.35 163.39L1011.34 163.27L1012.32 163.16" stroke="#d42a1a" stroke-width="1.6" fill="none" stroke-linejoin="round"/><path d="M1119.69 116.39L1120.13 116.53L1120.58 116.68L1121.02 116.82L1121.47 116.97L1121.91 117.13L1122.36 117.28L1122.8 117.44L1123.24 117.59L1123.69 117.75L1124.13 117.91L1124.58 118.07L1125.02 118.23L1125.46 118.39L1125.91 118.55L1126.35 118.71L1126.8 118.87L1127.24 119.02L1127.69 119.18L1128.13 119.33L1128.57 119.48L1129.02 119.63L1129.46 119.78L1129.91 119.93L1130.35 120.07L1130.79 120.21L1131.24 120.35L1131.68 120.48L1132.13 120.61L1132.57 120.74L1133.02 120.87L1133.46 120.99L1133.9 121.11L1134.35 121.22L1134.79 121.34L1135.24 121.45L1135.68 121.56L1136.12 121.67L1136.57 121.77L1137.01 121.87L1137.46 121.97L1137.9 122.07L1138.35 122.16L1138.79 122.25L1139.23 122.35L1139.68 122.43L1140.12 122.52L1140.57 122.6L1141.01 122.69L1141.46 122.77L1141.9 122.85L1142.34 122.92L1142.79 123L1143.23 123.07L1143.68 123.15L1144.12 123.22L1144.56 123.28L1145.01 123.35L1145.45 123.42L1145.9 123.48L1146.34 123.55L1146.79 123.61L1147.23 123.67L1147.67 123.73L1148.12 123.79L1148.56 123.85L1149.01 123.91L1149.45 123.96L1149.89 124.02L1150.34 124.07L1150.78 124.13L1151.23 124.18L1151.67 124.23L1152.12 124.28L1152.56 124.33L1153 124.39L1153.45 124.44L1153.89 124.49L1154.34 124.54L1154.78 124.58L1155.22 124.63L1155.67 124.68L1156.11 124.73L1156.56 124.78L1157 124.83L1157.45 124.88L1157.89 124.93L1158.33 124.97L1158.78 125.02L1159.22 125.07L1159.67 125.12L1160.11 125.17L1160.55 125.21L1161 125.26L1161.44 125.31L1161.89 125.36L1162.33 125.4L1162.78 125.45L1163.22 125.5L1163.66 125.55L1164.11 125.59L1164.55 125.64L1165 125.69L1165.44 125.73L1165.88 125.78L1166.33 125.82L1166.77 125.87L1167.22 125.92L1167.66 125.96L1168.11 126.01L1168.55 126.05L1168.99 126.1L1169.44 126.14L1169.88 126.19L1170.33 126.23L1170.77 126.28L1171.22 126.32L1171.66 126.36L1172.1 126.41L1172.55 126.45L1172.99 126.49L1173.44 126.54L1173.88 126.58L1174.32 126.62L1174.77 126.67L1175.21 126.71L1175.66 126.75L1176.1 126.79L1176.55 126.84L1176.99 126.88L1177.43 126.92L1177.88 126.96L1178.32 127L1178.77 127.04L1179.21 127.08L1179.65 127.12L1180.1 127.16L1180.54 127.2L1180.99 127.24L1181.43 127.28L1181.88 127.32L1182.32 127.36L1182.76 127.4L1183.21 127.44L1183.65 127.48L1184.1 127.52L1184.54 127.55L1184.98 127.59L1185.43 127.63L1185.87 127.67L1186.32 127.7L1186.76 127.74L1187.21 127.78L1187.65 127.81L1188.09 127.85L1188.54 127.89L1188.98 127.92L1189.43 127.96L1189.87 127.99L1190.31 128.03L1190.76 128.06L1191.2 128.09L1191.65 128.13L1192.09 128.16L1192.54 128.19L1192.98 128.23L1193.42 128.26L1193.87 128.29L1194.31 128.32L1194.76 128.36L1195.2 128.39L1195.64 128.42L1196.09 128.45L1196.53 128.48L1196.98 128.51L1197.42 128.54L1197.87 128.57L1198.31 128.6L1198.75 128.63L1199.2 128.66L1199.64 128.68L1200.09 128.71L1200.53 128.74L1200.98 128.77L1201.42 128.8L1201.86 128.82L1202.31 128.85L1202.75 128.88L1203.2 128.9L1203.64 128.93L1204.08 128.96L1204.53 128.98L1204.97 129.01L1205.42 129.03L1205.86 129.06L1206.31 129.08L1206.75 129.11L1207.19 129.13L1207.64 129.16L1208.08 129.18L1208.53 129.2L1208.97 129.23L1209.41 129.25L1209.86 129.27L1210.3 129.3L1210.75 129.32L1211.19 129.34L1211.64 129.36L1212.08 129.38L1212.52 129.41L1212.97 129.43L1213.41 129.45L1213.86 129.47L1214.3 129.49L1214.74 129.51L1215.19 129.53L1215.63 129.55L1216.08 129.57L1216.52 129.59L1216.97 129.61L1217.41 129.63L1217.85 129.65L1218.3 129.67L1218.74 129.69L1219.19 129.71L1219.63 129.73L1220.07 129.75L1220.52 129.76L1220.96 129.78L1221.41 129.8L1221.85 129.82L1222.3 129.84L1222.74 129.85L1223.18 129.87L1223.63 129.89L1224.07 129.91L1224.52 129.92L1224.96 129.94L1225.41 129.96L1225.85 129.97L1226.29 129.99L1226.74 130.01L1227.18 130.02L1227.63 130.04L1228.07 130.05L1228.51 130.07L1228.96 130.08L1229.4 130.1L1229.85 130.12L1230.29 130.13L1230.74 130.15L1231.18 130.16L1231.62 130.18L1232.07 130.19L1232.51 130.21L1232.96 130.22L1233.4 130.24L1233.84 130.25L1234.29 130.26L1234.73 130.28L1235.18 130.29L1235.62 130.31L1236.07 130.32L1236.51 130.33L1236.95 130.35L1237.4 130.36L1237.84 130.38L1238.29 130.39L1238.73 130.4L1239.17 130.42L1239.62 130.43L1240.06 130.44L1240.51 130.46L1240.95 130.47L1241.4 130.48L1241.84 130.5L1242.28 130.51L1242.73 130.52L1243.17 130.54L1243.62 130.55L1244.06 130.56L1244.5 130.57L1244.95 130.59L1245.39 130.6L1245.84 130.61L1246.28 130.62L1246.73 130.64L1247.17 130.65L1247.61 130.66L1248.06 130.68L1248.5 130.69L1248.95 130.7L1249.39 130.71L1249.83 130.73L1250.28 130.74L1250.72 130.75L1251.17 130.76L1251.61 130.78L1252.06 130.79L1252.5 130.8" stroke="#1d8a1d" stroke-width="1.8" fill="none" stroke-linejoin="round"/></g><clipPath id="c_pdi"><rect x="717" y="407" width="537" height="263"/></clipPath><g clip-path="url(#c_pdi)"><line x1="717" y1="571.25" x2="1253" y2="571.25" stroke="#ff40ff" stroke-width="2"/><path d="M716.4 487.89L718.19 487.89L719.99 487.89L721.78 487.89L723.58 487.89L725.37 487.89L727.17 487.89L728.96 487.89L730.76 487.88L732.55 487.88L734.35 487.88L736.14 487.88L737.94 487.88L739.73 487.88L741.53 487.88L743.32 487.87L745.12 487.87L746.91 487.87L748.71 487.87L750.5 487.87L752.3 487.87L754.09 487.86L755.89 487.86L757.68 487.86L759.48 487.86L761.27 487.86L763.07 487.85L764.86 487.85L766.66 487.85L768.45 487.84L770.25 487.84L772.04 487.84L773.84 487.84L775.63 487.83L777.43 487.83L779.22 487.82L781.02 487.82L782.81 487.82L784.61 487.81L786.4 487.81L788.2 487.8L789.99 487.8L791.79 487.79L793.58 487.79L795.38 487.78L797.17 487.78L798.97 487.77L800.76 487.77L802.56 487.76L804.35 487.75L806.15 487.75L807.94 487.74L809.74 487.73L811.53 487.73L813.33 487.72L815.12 487.71L816.92 487.7L818.71 487.69L820.51 487.69L822.3 487.68L824.1 487.67L825.89 487.66L827.69 487.65L829.48 487.64L831.28 487.63L833.07 487.62L834.87 487.61L836.66 487.6L838.46 487.58L840.25 487.57L842.05 487.56L843.84 487.55L845.64 487.54L847.43 487.52L849.23 487.51L851.02 487.5L852.82 487.48L854.61 487.47L856.41 487.45L858.2 487.44L860 487.42L861.79 487.4L863.59 487.39L865.38 487.37L867.18 487.35L868.97 487.33L870.77 487.31L872.56 487.29L874.36 487.27L876.15 487.25L877.95 487.23L879.74 487.2L881.54 487.18L883.33 487.15L885.13 487.13L886.92 487.1L888.72 487.08L890.51 487.05L892.31 487.02L894.1 486.99L895.9 486.96L897.69 486.93L899.49 486.9L901.28 486.86L903.08 486.83L904.87 486.79L906.67 486.76L908.46 486.72L910.26 486.68L912.05 486.64L913.85 486.6L915.64 486.56L917.44 486.52L919.23 486.47L921.03 486.43L922.82 486.38L924.62 486.34L926.41 486.29L928.21 486.24L930 486.19L931.8 486.13L933.59 486.08L935.39 486.02L937.18 485.96L938.98 485.9L940.77 485.83L942.57 485.76L944.36 485.69L946.16 485.62L947.95 485.54L949.75 485.45L951.54 485.36L953.34 485.27L955.13 485.17L956.93 485.06L958.72 484.95L960.52 484.83L962.31 484.71L964.11 484.58L965.9 484.44L967.7 484.29L969.49 484.14L971.29 483.98L973.08 483.81L974.88 483.63L976.67 483.45L978.47 483.25L980.26 483.05L982.06 482.84L983.85 482.62L985.65 482.38L987.44 482.14L989.24 481.89L991.03 481.63L992.83 481.36L994.62 481.07L996.42 480.78L998.21 480.48L1000.01 480.16L1001.8 479.83L1003.6 479.49L1005.39 479.13L1007.19 478.77L1008.98 478.38L1010.78 477.98L1012.57 477.57L1014.37 477.13L1016.16 476.68L1017.96 476.21L1019.75 475.72L1021.55 475.21L1023.34 474.68L1025.14 474.13L1026.93 473.54L1028.73 472.93L1030.52 472.29L1032.32 471.61L1034.11 470.89L1035.91 470.14L1037.7 469.34L1039.5 468.5L1041.29 467.61L1043.09 466.69L1044.88 465.73L1046.68 464.73L1048.47 463.69L1050.27 462.62L1052.06 461.51L1053.86 460.38L1055.65 459.22L1057.45 458.03L1059.24 456.82L1061.04 455.57L1062.83 454.3L1064.63 453L1066.42 451.67L1068.22 450.3L1070.01 448.9L1071.81 447.47L1073.6 446L1075.4 444.5L1077.19 442.96L1078.99 441.41L1080.78 439.86L1082.58 438.35L1084.37 436.88L1086.17 435.5L1087.96 434.21L1089.76 433.04L1091.55 432.01L1093.35 431.11L1095.14 430.35L1096.94 429.71L1098.73 429.21L1100.53 428.83L1102.32 428.57L1104.12 428.44L1105.91 428.43L1107.71 428.53L1109.5 428.73L1111.3 429.01L1113.09 429.38L1114.89 429.8L1116.68 430.27L1118.48 430.78L1120.27 431.32L1122.07 431.86L1123.86 432.4L1125.66 432.92L1127.45 433.42L1129.25 433.88L1131.04 434.31L1132.84 434.7L1134.63 435.07L1136.43 435.41L1138.22 435.73L1140.02 436.02L1141.81 436.3L1143.61 436.57L1145.4 436.82L1147.2 437.06L1148.99 437.29L1150.79 437.52L1152.58 437.75L1154.38 437.97L1156.17 438.19L1157.97 438.41L1159.76 438.62L1161.56 438.83L1163.35 439.04L1165.15 439.25L1166.94 439.46L1168.74 439.66L1170.53 439.86L1172.33 440.06L1174.12 440.26L1175.92 440.46L1177.71 440.65L1179.51 440.85L1181.3 441.04L1183.1 441.23L1184.89 441.42L1186.69 441.6L1188.48 441.79L1190.28 441.97L1192.07 442.15L1193.87 442.33L1195.66 442.5L1197.46 442.67L1199.25 442.84L1201.05 443L1202.84 443.16L1204.64 443.32L1206.43 443.47L1208.23 443.61L1210.02 443.75L1211.82 443.89L1213.61 444.02L1215.41 444.15L1217.2 444.27L1219 444.38L1220.79 444.49L1222.59 444.6L1224.38 444.7L1226.18 444.8L1227.97 444.9L1229.77 444.99L1231.56 445.08L1233.36 445.16L1235.15 445.24L1236.95 445.32L1238.74 445.4L1240.54 445.48L1242.33 445.55L1244.13 445.62L1245.92 445.69L1247.72 445.77L1249.51 445.83L1251.31 445.9L1253.1 445.97" stroke="#5e5e5e" stroke-width="2.8" fill="none" stroke-linejoin="round"/><path d="M716.4 488L718.19 488L719.99 488L721.78 488L723.58 487.99L725.37 487.99L727.17 487.99L728.96 487.99L730.76 487.99L732.55 487.99L734.35 487.98L736.14 487.98L737.94 487.98L739.73 487.98L741.53 487.98L743.32 487.97L745.12 487.97L746.91 487.97L748.71 487.97L750.5 487.97L752.3 487.96L754.09 487.96L755.89 487.96L757.68 487.96L759.48 487.95L761.27 487.95L763.07 487.95L764.86 487.95L766.66 487.94L768.45 487.94L770.25 487.94L772.04 487.93L773.84 487.93L775.63 487.93L777.43 487.92L779.22 487.92L781.02 487.91L782.81 487.91L784.61 487.91L786.4 487.9L788.2 487.9L789.99 487.89L791.79 487.89L793.58 487.88L795.38 487.88L797.17 487.87L798.97 487.87L800.76 487.86L802.56 487.85L804.35 487.85L806.15 487.84L807.94 487.83L809.74 487.83L811.53 487.82L813.33 487.81L815.12 487.81L816.92 487.8L818.71 487.79L820.51 487.78L822.3 487.78L824.1 487.77L825.89 487.76L827.69 487.75L829.48 487.74L831.28 487.73L833.07 487.72L834.87 487.71L836.66 487.7L838.46 487.69L840.25 487.68L842.05 487.67L843.84 487.66L845.64 487.65L847.43 487.63L849.23 487.62L851.02 487.61L852.82 487.6L854.61 487.58L856.41 487.57L858.2 487.56L860 487.54L861.79 487.53L863.59 487.51L865.38 487.49L867.18 487.48L868.97 487.46L870.77 487.44L872.56 487.42L874.36 487.4L876.15 487.38L877.95 487.36L879.74 487.34L881.54 487.31L883.33 487.29L885.13 487.27L886.92 487.24L888.72 487.21L890.51 487.19L892.31 487.16L894.1 487.13L895.9 487.1L897.69 487.07L899.49 487.03L901.28 487L903.08 486.96L904.87 486.93L906.67 486.89L908.46 486.85L910.26 486.81L912.05 486.77L913.85 486.73L915.64 486.69L917.44 486.64L919.23 486.6L921.03 486.55L922.82 486.5L924.62 486.45L926.41 486.4L928.21 486.34L930 486.29L931.8 486.23L933.59 486.17L935.39 486.11L937.18 486.05L938.98 485.99L940.77 485.92L942.57 485.85L944.36 485.78L946.16 485.7L947.95 485.62L949.75 485.54L951.54 485.45L953.34 485.36L955.13 485.27L956.93 485.18L958.72 485.07L960.52 484.97L962.31 484.86L964.11 484.75L965.9 484.63L967.7 484.51L969.49 484.38L971.29 484.25L973.08 484.11L974.88 483.96L976.67 483.81L978.47 483.65L980.26 483.48L982.06 483.31L983.85 483.12L985.65 482.93L987.44 482.72L989.24 482.51L991.03 482.28L992.83 482.04L994.62 481.79L996.42 481.52L998.21 481.24L1000.01 480.95L1001.8 480.65L1003.6 480.33L1005.39 479.99L1007.19 479.65L1008.98 479.29L1010.78 478.92L1012.57 478.54L1014.37 478.15L1016.16 477.75L1017.96 477.34L1019.75 476.92L1021.55 476.5L1023.34 476.06L1025.14 475.62L1026.93 475.16L1028.73 474.69L1030.52 474.19L1032.32 473.68L1034.11 473.13L1035.91 472.56L1037.7 471.96L1039.5 471.33L1041.29 470.66L1043.09 469.94L1044.88 469.17L1046.68 468.35L1048.47 467.46L1050.27 466.51L1052.06 465.48L1053.86 464.38L1055.65 463.22L1057.45 462L1059.24 460.73L1061.04 459.41L1062.83 458.04L1064.63 456.65L1066.42 455.22L1068.22 453.76L1070.01 452.26L1071.81 450.73L1073.6 449.17L1075.4 447.58L1077.19 445.98L1078.99 444.36L1080.78 442.75L1082.58 441.18L1084.37 439.66L1086.17 438.22L1087.96 436.88L1089.76 435.64L1091.55 434.54L1093.35 433.57L1095.14 432.73L1096.94 432.01L1098.73 431.42L1100.53 430.95L1102.32 430.6L1104.12 430.36L1105.91 430.25L1107.71 430.24L1109.5 430.32L1111.3 430.5L1113.09 430.76L1114.89 431.08L1116.68 431.46L1118.48 431.88L1120.27 432.33L1122.07 432.8L1123.86 433.27L1125.66 433.73L1127.45 434.18L1129.25 434.6L1131.04 435L1132.84 435.38L1134.63 435.74L1136.43 436.07L1138.22 436.39L1140.02 436.69L1141.81 436.98L1143.61 437.26L1145.4 437.53L1147.2 437.8L1148.99 438.05L1150.79 438.31L1152.58 438.56L1154.38 438.8L1156.17 439.05L1157.97 439.29L1159.76 439.52L1161.56 439.76L1163.35 439.99L1165.15 440.21L1166.94 440.43L1168.74 440.65L1170.53 440.87L1172.33 441.08L1174.12 441.28L1175.92 441.48L1177.71 441.67L1179.51 441.86L1181.3 442.05L1183.1 442.23L1184.89 442.4L1186.69 442.57L1188.48 442.74L1190.28 442.9L1192.07 443.05L1193.87 443.2L1195.66 443.35L1197.46 443.49L1199.25 443.62L1201.05 443.75L1202.84 443.88L1204.64 444L1206.43 444.12L1208.23 444.24L1210.02 444.35L1211.82 444.46L1213.61 444.56L1215.41 444.66L1217.2 444.75L1219 444.85L1220.79 444.94L1222.59 445.02L1224.38 445.11L1226.18 445.19L1227.97 445.27L1229.77 445.34L1231.56 445.41L1233.36 445.49L1235.15 445.56L1236.95 445.62L1238.74 445.69L1240.54 445.76L1242.33 445.82L1244.13 445.88L1245.92 445.95L1247.72 446.01L1249.51 446.07L1251.31 446.13L1253.1 446.19" stroke="#30e0d8" stroke-width="2" fill="none" stroke-linejoin="round"/><path d="M716.4 488.11L718.19 488.11L719.99 488.1L721.78 488.1L723.58 488.1L725.37 488.1L727.17 488.1L728.96 488.09L730.76 488.09L732.55 488.09L734.35 488.09L736.14 488.08L737.94 488.08L739.73 488.08L741.53 488.08L743.32 488.07L745.12 488.07L746.91 488.07L748.71 488.07L750.5 488.06L752.3 488.06L754.09 488.06L755.89 488.06L757.68 488.05L759.48 488.05L761.27 488.05L763.07 488.04L764.86 488.04L766.66 488.04L768.45 488.03L770.25 488.03L772.04 488.03L773.84 488.02L775.63 488.02L777.43 488.01L779.22 488.01L781.02 488.01L782.81 488L784.61 488L786.4 487.99L788.2 487.99L789.99 487.98L791.79 487.98L793.58 487.97L795.38 487.97L797.17 487.96L798.97 487.96L800.76 487.95L802.56 487.95L804.35 487.94L806.15 487.94L807.94 487.93L809.74 487.92L811.53 487.92L813.33 487.91L815.12 487.9L816.92 487.9L818.71 487.89L820.51 487.88L822.3 487.87L824.1 487.87L825.89 487.86L827.69 487.85L829.48 487.84L831.28 487.83L833.07 487.82L834.87 487.82L836.66 487.81L838.46 487.8L840.25 487.79L842.05 487.78L843.84 487.77L845.64 487.76L847.43 487.75L849.23 487.74L851.02 487.72L852.82 487.71L854.61 487.7L856.41 487.69L858.2 487.68L860 487.66L861.79 487.65L863.59 487.63L865.38 487.62L867.18 487.6L868.97 487.59L870.77 487.57L872.56 487.55L874.36 487.53L876.15 487.51L877.95 487.49L879.74 487.47L881.54 487.45L883.33 487.43L885.13 487.4L886.92 487.38L888.72 487.35L890.51 487.32L892.31 487.29L894.1 487.27L895.9 487.23L897.69 487.2L899.49 487.17L901.28 487.14L903.08 487.1L904.87 487.06L906.67 487.03L908.46 486.99L910.26 486.94L912.05 486.9L913.85 486.86L915.64 486.81L917.44 486.77L919.23 486.72L921.03 486.67L922.82 486.62L924.62 486.56L926.41 486.51L928.21 486.45L930 486.39L931.8 486.33L933.59 486.27L935.39 486.21L937.18 486.14L938.98 486.07L940.77 486L942.57 485.93L944.36 485.86L946.16 485.78L947.95 485.71L949.75 485.63L951.54 485.55L953.34 485.46L955.13 485.38L956.93 485.29L958.72 485.2L960.52 485.11L962.31 485.02L964.11 484.92L965.9 484.82L967.7 484.72L969.49 484.62L971.29 484.52L973.08 484.41L974.88 484.29L976.67 484.18L978.47 484.05L980.26 483.92L982.06 483.78L983.85 483.63L985.65 483.47L987.44 483.3L989.24 483.12L991.03 482.93L992.83 482.72L994.62 482.5L996.42 482.26L998.21 482.01L1000.01 481.75L1001.8 481.47L1003.6 481.17L1005.39 480.86L1007.19 480.53L1008.98 480.2L1010.78 479.86L1012.57 479.51L1014.37 479.16L1016.16 478.81L1017.96 478.47L1019.75 478.12L1021.55 477.78L1023.34 477.44L1025.14 477.11L1026.93 476.78L1028.73 476.44L1030.52 476.1L1032.32 475.74L1034.11 475.38L1035.91 474.99L1037.7 474.59L1039.5 474.16L1041.29 473.7L1043.09 473.19L1044.88 472.62L1046.68 471.97L1048.47 471.24L1050.27 470.4L1052.06 469.45L1053.86 468.39L1055.65 467.23L1057.45 465.97L1059.24 464.64L1061.04 463.24L1062.83 461.79L1064.63 460.3L1066.42 458.77L1068.22 457.21L1070.01 455.62L1071.81 453.99L1073.6 452.34L1075.4 450.67L1077.19 448.99L1078.99 447.31L1080.78 445.64L1082.58 444.01L1084.37 442.44L1086.17 440.94L1087.96 439.54L1089.76 438.25L1091.55 437.08L1093.35 436.03L1095.14 435.12L1096.94 434.32L1098.73 433.64L1100.53 433.07L1102.32 432.62L1104.12 432.29L1105.91 432.06L1107.71 431.94L1109.5 431.92L1111.3 431.99L1113.09 432.14L1114.89 432.37L1116.68 432.65L1118.48 432.98L1120.27 433.35L1122.07 433.74L1123.86 434.14L1125.66 434.54L1127.45 434.94L1129.25 435.33L1131.04 435.7L1132.84 436.06L1134.63 436.4L1136.43 436.73L1138.22 437.05L1140.02 437.36L1141.81 437.66L1143.61 437.96L1145.4 438.25L1147.2 438.53L1148.99 438.81L1150.79 439.09L1152.58 439.36L1154.38 439.63L1156.17 439.9L1157.97 440.17L1159.76 440.43L1161.56 440.68L1163.35 440.93L1165.15 441.17L1166.94 441.41L1168.74 441.64L1170.53 441.87L1172.33 442.09L1174.12 442.3L1175.92 442.5L1177.71 442.7L1179.51 442.88L1181.3 443.06L1183.1 443.23L1184.89 443.39L1186.69 443.54L1188.48 443.68L1190.28 443.82L1192.07 443.95L1193.87 444.07L1195.66 444.19L1197.46 444.3L1199.25 444.41L1201.05 444.51L1202.84 444.6L1204.64 444.69L1206.43 444.78L1208.23 444.86L1210.02 444.94L1211.82 445.02L1213.61 445.1L1215.41 445.17L1217.2 445.24L1219 445.31L1220.79 445.38L1222.59 445.44L1224.38 445.51L1226.18 445.57L1227.97 445.63L1229.77 445.69L1231.56 445.75L1233.36 445.81L1235.15 445.87L1236.95 445.93L1238.74 445.98L1240.54 446.04L1242.33 446.09L1244.13 446.14L1245.92 446.2L1247.72 446.25L1249.51 446.3L1251.31 446.35L1253.1 446.4" stroke="#f08a10" stroke-width="2" fill="none" stroke-linejoin="round"/><path d="M716.4 488.22L718.19 488.22L719.99 488.21L721.78 488.21L723.58 488.21L725.37 488.21L727.17 488.2L728.96 488.2L730.76 488.2L732.55 488.2L734.35 488.19L736.14 488.19L737.94 488.19L739.73 488.18L741.53 488.18L743.32 488.18L745.12 488.17L746.91 488.17L748.71 488.17L750.5 488.17L752.3 488.16L754.09 488.16L755.89 488.16L757.68 488.15L759.48 488.15L761.27 488.15L763.07 488.14L764.86 488.14L766.66 488.13L768.45 488.13L770.25 488.13L772.04 488.12L773.84 488.12L775.63 488.12L777.43 488.11L779.22 488.11L781.02 488.1L782.81 488.1L784.61 488.09L786.4 488.09L788.2 488.08L789.99 488.08L791.79 488.07L793.58 488.07L795.38 488.06L797.17 488.06L798.97 488.05L800.76 488.05L802.56 488.04L804.35 488.04L806.15 488.03L807.94 488.03L809.74 488.02L811.53 488.01L813.33 488.01L815.12 488L816.92 488L818.71 487.99L820.51 487.98L822.3 487.98L824.1 487.97L825.89 487.96L827.69 487.95L829.48 487.95L831.28 487.94L833.07 487.93L834.87 487.92L836.66 487.91L838.46 487.91L840.25 487.9L842.05 487.89L843.84 487.88L845.64 487.87L847.43 487.86L849.23 487.85L851.02 487.84L852.82 487.83L854.61 487.82L856.41 487.81L858.2 487.8L860 487.79L861.79 487.77L863.59 487.76L865.38 487.75L867.18 487.73L868.97 487.72L870.77 487.7L872.56 487.68L874.36 487.67L876.15 487.65L877.95 487.63L879.74 487.61L881.54 487.59L883.33 487.56L885.13 487.54L886.92 487.52L888.72 487.49L890.51 487.46L892.31 487.44L894.1 487.41L895.9 487.38L897.69 487.34L899.49 487.31L901.28 487.28L903.08 487.24L904.87 487.2L906.67 487.16L908.46 487.12L910.26 487.08L912.05 487.04L913.85 486.99L915.64 486.94L917.44 486.89L919.23 486.84L921.03 486.79L922.82 486.74L924.62 486.68L926.41 486.62L928.21 486.56L930 486.5L931.8 486.43L933.59 486.37L935.39 486.3L937.18 486.23L938.98 486.16L940.77 486.09L942.57 486.02L944.36 485.94L946.16 485.87L947.95 485.79L949.75 485.72L951.54 485.64L953.34 485.56L955.13 485.49L956.93 485.41L958.72 485.33L960.52 485.25L962.31 485.18L964.11 485.1L965.9 485.02L967.7 484.95L969.49 484.87L971.29 484.79L973.08 484.72L974.88 484.63L976.67 484.55L978.47 484.46L980.26 484.36L982.06 484.26L983.85 484.15L985.65 484.03L987.44 483.89L989.24 483.75L991.03 483.59L992.83 483.42L994.62 483.23L996.42 483.03L998.21 482.81L1000.01 482.57L1001.8 482.31L1003.6 482.03L1005.39 481.74L1007.19 481.44L1008.98 481.13L1010.78 480.82L1012.57 480.51L1014.37 480.21L1016.16 479.91L1017.96 479.62L1019.75 479.35L1021.55 479.1L1023.34 478.87L1025.14 478.65L1026.93 478.45L1028.73 478.25L1030.52 478.06L1032.32 477.88L1034.11 477.69L1035.91 477.5L1037.7 477.29L1039.5 477.08L1041.29 476.83L1043.09 476.53L1044.88 476.16L1046.68 475.7L1048.47 475.12L1050.27 474.42L1052.06 473.56L1053.86 472.53L1055.65 471.36L1057.45 470.06L1059.24 468.66L1061.04 467.18L1062.83 465.64L1064.63 464.06L1066.42 462.43L1068.22 460.77L1070.01 459.07L1071.81 457.35L1073.6 455.61L1075.4 453.86L1077.19 452.1L1078.99 450.34L1080.78 448.62L1082.58 446.93L1084.37 445.3L1086.17 443.75L1087.96 442.28L1089.76 440.93L1091.55 439.69L1093.35 438.57L1095.14 437.57L1096.94 436.69L1098.73 435.92L1100.53 435.26L1102.32 434.71L1104.12 434.26L1105.91 433.93L1107.71 433.7L1109.5 433.56L1111.3 433.53L1113.09 433.57L1114.89 433.69L1116.68 433.88L1118.48 434.11L1120.27 434.39L1122.07 434.7L1123.86 435.04L1125.66 435.39L1127.45 435.73L1129.25 436.08L1131.04 436.42L1132.84 436.75L1134.63 437.08L1136.43 437.41L1138.22 437.73L1140.02 438.05L1141.81 438.37L1143.61 438.68L1145.4 438.99L1147.2 439.29L1148.99 439.6L1150.79 439.9L1152.58 440.2L1154.38 440.49L1156.17 440.79L1157.97 441.07L1159.76 441.35L1161.56 441.63L1163.35 441.9L1165.15 442.16L1166.94 442.42L1168.74 442.66L1170.53 442.9L1172.33 443.13L1174.12 443.35L1175.92 443.55L1177.71 443.75L1179.51 443.93L1181.3 444.1L1183.1 444.26L1184.89 444.4L1186.69 444.54L1188.48 444.66L1190.28 444.77L1192.07 444.88L1193.87 444.97L1195.66 445.06L1197.46 445.14L1199.25 445.21L1201.05 445.28L1202.84 445.34L1204.64 445.4L1206.43 445.46L1208.23 445.51L1210.02 445.56L1211.82 445.6L1213.61 445.65L1215.41 445.7L1217.2 445.74L1219 445.79L1220.79 445.83L1222.59 445.88L1224.38 445.92L1226.18 445.97L1227.97 446.01L1229.77 446.06L1231.56 446.1L1233.36 446.15L1235.15 446.19L1236.95 446.24L1238.74 446.28L1240.54 446.32L1242.33 446.37L1244.13 446.41L1245.92 446.45L1247.72 446.5L1249.51 446.54L1251.31 446.58L1253.1 446.63" stroke="#1414ff" stroke-width="2.3" fill="none" stroke-linejoin="round"/><path d="M716.4 487.89L717.32 487.89L718.25 487.89L719.17 487.89L720.1 487.89L721.02 487.89L721.94 487.89L722.87 487.89L723.79 487.89L724.71 487.89L725.64 487.89L726.56 487.89L727.49 487.89L728.41 487.89L729.33 487.88L730.26 487.88L731.18 487.88L732.11 487.88L733.03 487.88L733.95 487.88L734.88 487.88L735.8 487.88L736.72 487.88L737.65 487.88L738.57 487.88L739.5 487.88L740.42 487.88L741.34 487.88L742.27 487.88L743.19 487.87L744.12 487.87L745.04 487.87L745.96 487.87L746.89 487.87L747.81 487.87L748.74 487.87L749.66 487.87L750.58 487.87L751.51 487.87L752.43 487.87L753.35 487.87L754.28 487.86L755.2 487.86L756.13 487.86L757.05 487.86L757.97 487.86L758.9 487.86L759.82 487.86L760.75 487.86L761.67 487.85L762.59 487.85L763.52 487.85L764.44 487.85L765.36 487.85L766.29 487.85L767.21 487.85L768.14 487.85L769.06 487.84L769.98 487.84L770.91 487.84L771.83 487.84L772.76 487.84L773.68 487.84L774.6 487.83L775.53 487.83L776.45 487.83L777.37 487.83L778.3 487.83L779.22 487.82L780.15 487.82L781.07 487.82L781.99 487.82L782.92 487.82L783.84 487.81L784.77 487.81L785.69 487.81L786.61 487.81L787.54 487.81L788.46 487.8L789.38 487.8L790.31 487.8L791.23 487.8L792.16 487.79L793.08 487.79L794 487.79L794.93 487.78L795.85 487.78L796.78 487.78L797.7 487.78L798.62 487.77L799.55 487.77L800.47 487.77L801.4 487.76L802.32 487.76L803.24 487.76L804.17 487.75L805.09 487.75L806.01 487.75L806.94 487.74L807.86 487.74L808.79 487.74L809.71 487.73L810.63 487.73L811.56 487.73L812.48 487.72L813.41 487.72L814.33 487.71L815.25 487.71L816.18 487.71L817.1 487.7L818.02 487.7L818.95 487.69L819.87 487.69L820.8 487.68L821.72 487.68L822.64 487.67L823.57 487.67L824.49 487.67L825.42 487.66L826.34 487.66L827.26 487.65L828.19 487.65L829.11 487.64L830.03 487.64L830.96 487.63L831.88 487.62L832.81 487.62L833.73 487.61L834.65 487.61L835.58 487.6L836.5 487.6L837.43 487.59L838.35 487.59L839.27 487.58L840.2 487.57L841.12 487.57L842.04 487.56L842.97 487.55L843.89 487.55L844.82 487.54L845.74 487.54L846.66 487.53L847.59 487.52L848.51 487.51L849.44 487.51L850.36 487.5L851.28 487.49L852.21 487.49L853.13 487.48L854.05 487.47L854.98 487.46L855.9 487.46L856.83 487.45L857.75 487.44L858.67 487.43L859.6 487.42L860.52 487.41L861.45 487.41L862.37 487.4L863.29 487.39L864.22 487.38L865.14 487.37L866.07 487.36L866.99 487.35L867.91 487.34L868.84 487.33L869.76 487.32L870.68 487.31L871.61 487.3L872.53 487.29L873.46 487.28L874.38 487.27L875.3 487.26L876.23 487.25L877.15 487.24L878.08 487.22L879 487.21L879.92 487.2L880.85 487.19L881.77 487.18L882.69 487.16L883.62 487.15L884.54 487.14L885.47 487.12L886.39 487.11L887.31 487.1L888.24 487.08L889.16 487.07L890.09 487.06L891.01 487.04L891.93 487.03L892.86 487.01L893.78 487L894.7 486.98L895.63 486.96L896.55 486.95L897.48 486.93L898.4 486.92L899.32 486.9L900.25 486.88L901.17 486.87L902.1 486.85L903.02 486.83L903.94 486.81L904.87 486.79L905.79 486.78L906.71 486.76L907.64 486.74L908.56 486.72L909.49 486.7L910.41 486.68L911.33 486.66L912.26 486.64L913.18 486.62L914.11 486.6L915.03 486.58L915.95 486.55L916.88 486.53L917.8 486.51L918.73 486.49L919.65 486.46L920.57 486.44L921.5 486.42L922.42 486.39L923.34 486.37L924.27 486.35L925.19 486.32L926.12 486.3L927.04 486.27L927.96 486.24L928.89 486.22L929.81 486.19L930.74 486.16L931.66 486.14L932.58 486.11L933.51 486.08L934.43 486.05L935.35 486.02L936.28 485.99L937.2 485.96L938.13 485.93L939.05 485.9L939.97 485.86L940.9 485.83L941.82 485.79L942.75 485.76L943.67 485.72L944.59 485.68L945.52 485.64L946.44 485.6L947.36 485.56L948.29 485.52L949.21 485.48L950.14 485.43L951.06 485.39L951.98 485.34L952.91 485.29L953.83 485.24L954.76 485.19L955.68 485.13L956.6 485.08L957.53 485.02L958.45 484.97L959.37 484.91L960.3 484.85L961.22 484.78L962.15 484.72L963.07 484.65L963.99 484.58L964.92 484.51L965.84 484.44L966.77 484.37L967.69 484.29L968.61 484.22L969.54 484.14L970.46 484.05L971.39 483.97L972.31 483.88L973.23 483.8L974.16 483.71L975.08 483.61L976 483.52L976.93 483.42L977.85 483.32L978.78 483.22L979.7 483.12L980.62 483.01L981.55 482.9L982.47 482.79L983.4 482.67L984.32 482.56L985.24 482.44L986.17 482.32L987.09 482.19L988.01 482.06L988.94 481.93L989.86 481.8L990.79 481.67L991.71 481.53L992.63 481.39" stroke="#5e5e5e" stroke-width="2.4" fill="none" stroke-linejoin="round" opacity="0.7"/><path d="M716.4 636.25L718.19 636.25L719.99 636.25L721.78 636.25L723.58 636.25L725.37 636.25L727.17 636.25L728.96 636.25L730.76 636.25L732.55 636.25L734.35 636.25L736.14 636.25L737.94 636.25L739.73 636.25L741.53 636.25L743.32 636.25L745.12 636.25L746.91 636.25L748.71 636.25L750.5 636.25L752.3 636.25L754.09 636.25L755.89 636.25L757.68 636.25L759.48 636.25L761.27 636.25L763.07 636.25L764.86 636.25L766.66 636.25L768.45 636.25L770.25 636.25L772.04 636.25L773.84 636.25L775.63 636.25L777.43 636.25L779.22 636.25L781.02 636.25L782.81 636.25L784.61 636.25L786.4 636.25L788.2 636.25L789.99 636.25L791.79 636.25L793.58 636.25L795.38 636.25L797.17 636.25L798.97 636.25L800.76 636.25L802.56 636.25L804.35 636.25L806.15 636.25L807.94 636.25L809.74 636.25L811.53 636.25L813.33 636.25L815.12 636.25L816.92 636.25L818.71 636.25L820.51 636.25L822.3 636.25L824.1 636.25L825.89 636.25L827.69 636.25L829.48 636.25L831.28 636.25L833.07 636.25L834.87 636.25L836.66 636.25L838.46 636.25L840.25 636.25L842.05 636.25L843.84 636.25L845.64 636.25L847.43 636.25L849.23 636.25L851.02 636.25L852.82 636.25L854.61 636.25L856.41 636.25L858.2 636.25L860 636.25L861.79 636.25L863.59 636.25L865.38 636.25L867.18 636.25L868.97 636.25L870.77 636.25L872.56 636.25L874.36 636.25L876.15 636.25L877.95 636.25L879.74 636.25L881.54 636.25L883.33 636.25L885.13 636.25L886.92 636.25L888.72 636.25L890.51 636.25L892.31 636.25L894.1 636.25L895.9 636.25L897.69 636.25L899.49 636.25L901.28 636.25L903.08 636.25L904.87 636.25L906.67 636.25L908.46 636.25L910.26 636.25L912.05 636.25L913.85 636.25L915.64 636.25L917.44 636.25L919.23 636.25L921.03 636.25L922.82 636.25L924.62 636.25L926.41 636.25L928.21 636.25L930 636.25L931.8 636.25L933.59 636.25L935.39 636.25L937.18 636.25L938.98 636.25L940.77 636.25L942.57 636.25L944.36 636.25L946.16 636.25L947.95 636.25L949.75 636.25L951.54 636.25L953.34 636.25L955.13 636.25L956.93 636.25L958.72 636.25L960.52 636.25L962.31 636.25L964.11 636.25L965.9 636.25L967.7 636.25L969.49 636.25L971.29 636.25L973.08 636.25L974.88 636.25L976.67 636.24L978.47 636.24L980.26 636.24L982.06 636.24L983.85 636.23L985.65 636.23L987.44 636.22L989.24 636.22L991.03 636.21L992.83 636.2L994.62 636.19L996.42 636.17L998.21 636.15L1000.01 636.13L1001.8 636.11L1003.6 636.08L1005.39 636.04L1007.19 636L1008.98 635.96L1010.78 635.9L1012.57 635.84L1014.37 635.77L1016.16 635.7L1017.96 635.61L1019.75 635.52L1021.55 635.41L1023.34 635.3L1025.14 635.17L1026.93 635.04L1028.73 634.9L1030.52 634.76L1032.32 634.6L1034.11 634.44L1035.91 634.28L1037.7 634.11L1039.5 633.95L1041.29 633.78L1043.09 633.62L1044.88 633.47L1046.68 633.32L1048.47 633.18L1050.27 633.06L1052.06 632.94L1053.86 632.85L1055.65 632.77L1057.45 632.71L1059.24 632.67L1061.04 632.65L1062.83 632.65L1064.63 632.67L1066.42 632.71L1068.22 632.76L1070.01 632.83L1071.81 632.91L1073.6 633L1075.4 633.11L1077.19 633.21L1078.99 633.33L1080.78 633.44L1082.58 633.56L1084.37 633.68L1086.17 633.8L1087.96 633.91L1089.76 634.02L1091.55 634.13L1093.35 634.23L1095.14 634.33L1096.94 634.43L1098.73 634.52L1100.53 634.6L1102.32 634.68L1104.12 634.76L1105.91 634.83L1107.71 634.9L1109.5 634.96L1111.3 635.02L1113.09 635.08L1114.89 635.13L1116.68 635.19L1118.48 635.23L1120.27 635.28L1122.07 635.32L1123.86 635.36L1125.66 635.4L1127.45 635.43L1129.25 635.47L1131.04 635.5L1132.84 635.53L1134.63 635.56L1136.43 635.58L1138.22 635.61L1140.02 635.63L1141.81 635.66L1143.61 635.68L1145.4 635.7L1147.2 635.72L1148.99 635.74L1150.79 635.75L1152.58 635.77L1154.38 635.79L1156.17 635.8L1157.97 635.82L1159.76 635.83L1161.56 635.84L1163.35 635.86L1165.15 635.87L1166.94 635.88L1168.74 635.89L1170.53 635.9L1172.33 635.91L1174.12 635.92L1175.92 635.93L1177.71 635.94L1179.51 635.95L1181.3 635.96L1183.1 635.97L1184.89 635.97L1186.69 635.98L1188.48 635.99L1190.28 635.99L1192.07 636L1193.87 636.01L1195.66 636.01L1197.46 636.02L1199.25 636.02L1201.05 636.03L1202.84 636.04L1204.64 636.04L1206.43 636.05L1208.23 636.05L1210.02 636.05L1211.82 636.06L1213.61 636.06L1215.41 636.07L1217.2 636.07L1219 636.07L1220.79 636.08L1222.59 636.08L1224.38 636.09L1226.18 636.09L1227.97 636.09L1229.77 636.1L1231.56 636.1L1233.36 636.1L1235.15 636.1L1236.95 636.11L1238.74 636.11L1240.54 636.11L1242.33 636.12L1244.13 636.12L1245.92 636.12L1247.72 636.12L1249.51 636.13L1251.31 636.13L1253.1 636.13" stroke="#ffb4b4" stroke-width="1.3" fill="none" stroke-linejoin="round"/><path d="M716.4 636.25L718.19 636.25L719.99 636.25L721.78 636.25L723.58 636.25L725.37 636.25L727.17 636.25L728.96 636.25L730.76 636.25L732.55 636.25L734.35 636.25L736.14 636.25L737.94 636.25L739.73 636.25L741.53 636.25L743.32 636.25L745.12 636.25L746.91 636.25L748.71 636.25L750.5 636.25L752.3 636.25L754.09 636.25L755.89 636.25L757.68 636.25L759.48 636.25L761.27 636.25L763.07 636.25L764.86 636.25L766.66 636.25L768.45 636.25L770.25 636.25L772.04 636.25L773.84 636.25L775.63 636.25L777.43 636.25L779.22 636.25L781.02 636.25L782.81 636.25L784.61 636.25L786.4 636.25L788.2 636.25L789.99 636.25L791.79 636.25L793.58 636.25L795.38 636.25L797.17 636.25L798.97 636.25L800.76 636.25L802.56 636.25L804.35 636.25L806.15 636.25L807.94 636.25L809.74 636.25L811.53 636.25L813.33 636.25L815.12 636.25L816.92 636.25L818.71 636.25L820.51 636.25L822.3 636.25L824.1 636.25L825.89 636.25L827.69 636.25L829.48 636.25L831.28 636.25L833.07 636.25L834.87 636.25L836.66 636.25L838.46 636.25L840.25 636.25L842.05 636.25L843.84 636.25L845.64 636.25L847.43 636.25L849.23 636.25L851.02 636.25L852.82 636.25L854.61 636.25L856.41 636.25L858.2 636.25L860 636.25L861.79 636.25L863.59 636.25L865.38 636.25L867.18 636.25L868.97 636.25L870.77 636.25L872.56 636.25L874.36 636.25L876.15 636.25L877.95 636.25L879.74 636.25L881.54 636.25L883.33 636.25L885.13 636.25L886.92 636.25L888.72 636.25L890.51 636.25L892.31 636.25L894.1 636.25L895.9 636.25L897.69 636.25L899.49 636.25L901.28 636.25L903.08 636.25L904.87 636.25L906.67 636.25L908.46 636.25L910.26 636.25L912.05 636.25L913.85 636.25L915.64 636.25L917.44 636.25L919.23 636.25L921.03 636.25L922.82 636.25L924.62 636.25L926.41 636.25L928.21 636.25L930 636.25L931.8 636.25L933.59 636.25L935.39 636.25L937.18 636.25L938.98 636.25L940.77 636.25L942.57 636.25L944.36 636.25L946.16 636.25L947.95 636.25L949.75 636.25L951.54 636.25L953.34 636.25L955.13 636.25L956.93 636.25L958.72 636.25L960.52 636.25L962.31 636.25L964.11 636.25L965.9 636.25L967.7 636.25L969.49 636.25L971.29 636.25L973.08 636.24L974.88 636.24L976.67 636.24L978.47 636.24L980.26 636.23L982.06 636.23L983.85 636.22L985.65 636.22L987.44 636.21L989.24 636.2L991.03 636.18L992.83 636.16L994.62 636.14L996.42 636.12L998.21 636.09L1000.01 636.05L1001.8 636.01L1003.6 635.95L1005.39 635.89L1007.19 635.82L1008.98 635.74L1010.78 635.65L1012.57 635.55L1014.37 635.43L1016.16 635.29L1017.96 635.15L1019.75 634.98L1021.55 634.8L1023.34 634.6L1025.14 634.39L1026.93 634.17L1028.73 633.92L1030.52 633.67L1032.32 633.4L1034.11 633.13L1035.91 632.85L1037.7 632.56L1039.5 632.28L1041.29 631.99L1043.09 631.71L1044.88 631.44L1046.68 631.19L1048.47 630.95L1050.27 630.73L1052.06 630.54L1053.86 630.37L1055.65 630.24L1057.45 630.13L1059.24 630.07L1061.04 630.03L1062.83 630.03L1064.63 630.07L1066.42 630.13L1068.22 630.22L1070.01 630.34L1071.81 630.48L1073.6 630.64L1075.4 630.82L1077.19 631.01L1078.99 631.2L1080.78 631.4L1082.58 631.61L1084.37 631.81L1086.17 632.01L1087.96 632.21L1089.76 632.4L1091.55 632.59L1093.35 632.77L1095.14 632.94L1096.94 633.1L1098.73 633.26L1100.53 633.4L1102.32 633.54L1104.12 633.68L1105.91 633.8L1107.71 633.92L1109.5 634.03L1111.3 634.13L1113.09 634.23L1114.89 634.32L1116.68 634.41L1118.48 634.49L1120.27 634.57L1122.07 634.64L1123.86 634.71L1125.66 634.78L1127.45 634.84L1129.25 634.9L1131.04 634.95L1132.84 635L1134.63 635.05L1136.43 635.1L1138.22 635.14L1140.02 635.19L1141.81 635.22L1143.61 635.26L1145.4 635.3L1147.2 635.33L1148.99 635.36L1150.79 635.39L1152.58 635.42L1154.38 635.45L1156.17 635.48L1157.97 635.5L1159.76 635.53L1161.56 635.55L1163.35 635.57L1165.15 635.59L1166.94 635.61L1168.74 635.63L1170.53 635.65L1172.33 635.67L1174.12 635.68L1175.92 635.7L1177.71 635.72L1179.51 635.73L1181.3 635.74L1183.1 635.76L1184.89 635.77L1186.69 635.78L1188.48 635.8L1190.28 635.81L1192.07 635.82L1193.87 635.83L1195.66 635.84L1197.46 635.85L1199.25 635.86L1201.05 635.87L1202.84 635.88L1204.64 635.89L1206.43 635.9L1208.23 635.9L1210.02 635.91L1211.82 635.92L1213.61 635.93L1215.41 635.93L1217.2 635.94L1219 635.95L1220.79 635.95L1222.59 635.96L1224.38 635.97L1226.18 635.97L1227.97 635.98L1229.77 635.98L1231.56 635.99L1233.36 635.99L1235.15 636L1236.95 636L1238.74 636.01L1240.54 636.01L1242.33 636.02L1244.13 636.02L1245.92 636.03L1247.72 636.03L1249.51 636.03L1251.31 636.04L1253.1 636.04" stroke="#ff8a8a" stroke-width="1.3" fill="none" stroke-linejoin="round"/><path d="M716.4 636.25L718.19 636.25L719.99 636.25L721.78 636.25L723.58 636.25L725.37 636.25L727.17 636.25L728.96 636.25L730.76 636.25L732.55 636.25L734.35 636.25L736.14 636.25L737.94 636.25L739.73 636.25L741.53 636.25L743.32 636.25L745.12 636.25L746.91 636.25L748.71 636.25L750.5 636.25L752.3 636.25L754.09 636.25L755.89 636.25L757.68 636.25L759.48 636.25L761.27 636.25L763.07 636.25L764.86 636.25L766.66 636.25L768.45 636.25L770.25 636.25L772.04 636.25L773.84 636.25L775.63 636.25L777.43 636.25L779.22 636.25L781.02 636.25L782.81 636.25L784.61 636.25L786.4 636.25L788.2 636.25L789.99 636.25L791.79 636.25L793.58 636.25L795.38 636.25L797.17 636.25L798.97 636.25L800.76 636.25L802.56 636.25L804.35 636.25L806.15 636.25L807.94 636.25L809.74 636.25L811.53 636.25L813.33 636.25L815.12 636.25L816.92 636.25L818.71 636.25L820.51 636.25L822.3 636.25L824.1 636.25L825.89 636.25L827.69 636.25L829.48 636.25L831.28 636.25L833.07 636.25L834.87 636.25L836.66 636.25L838.46 636.25L840.25 636.25L842.05 636.25L843.84 636.25L845.64 636.25L847.43 636.25L849.23 636.25L851.02 636.25L852.82 636.25L854.61 636.25L856.41 636.25L858.2 636.25L860 636.25L861.79 636.25L863.59 636.25L865.38 636.25L867.18 636.25L868.97 636.25L870.77 636.25L872.56 636.25L874.36 636.25L876.15 636.25L877.95 636.25L879.74 636.25L881.54 636.25L883.33 636.25L885.13 636.25L886.92 636.25L888.72 636.25L890.51 636.25L892.31 636.25L894.1 636.25L895.9 636.25L897.69 636.25L899.49 636.25L901.28 636.25L903.08 636.25L904.87 636.25L906.67 636.25L908.46 636.25L910.26 636.25L912.05 636.25L913.85 636.25L915.64 636.25L917.44 636.25L919.23 636.25L921.03 636.25L922.82 636.25L924.62 636.25L926.41 636.25L928.21 636.25L930 636.25L931.8 636.25L933.59 636.25L935.39 636.25L937.18 636.25L938.98 636.25L940.77 636.25L942.57 636.25L944.36 636.25L946.16 636.25L947.95 636.25L949.75 636.25L951.54 636.25L953.34 636.25L955.13 636.25L956.93 636.25L958.72 636.25L960.52 636.25L962.31 636.25L964.11 636.25L965.9 636.25L967.7 636.25L969.49 636.24L971.29 636.24L973.08 636.24L974.88 636.24L976.67 636.23L978.47 636.23L980.26 636.22L982.06 636.21L983.85 636.2L985.65 636.19L987.44 636.17L989.24 636.15L991.03 636.13L992.83 636.1L994.62 636.06L996.42 636.01L998.21 635.96L1000.01 635.89L1001.8 635.81L1003.6 635.72L1005.39 635.62L1007.19 635.49L1008.98 635.35L1010.78 635.18L1012.57 635L1014.37 634.79L1016.16 634.55L1017.96 634.28L1019.75 633.99L1021.55 633.67L1023.34 633.32L1025.14 632.95L1026.93 632.54L1028.73 632.11L1030.52 631.66L1032.32 631.19L1034.11 630.7L1035.91 630.2L1037.7 629.69L1039.5 629.18L1041.29 628.67L1043.09 628.18L1044.88 627.7L1046.68 627.25L1048.47 626.82L1050.27 626.44L1052.06 626.09L1053.86 625.8L1055.65 625.56L1057.45 625.37L1059.24 625.25L1061.04 625.19L1062.83 625.19L1064.63 625.25L1066.42 625.36L1068.22 625.53L1070.01 625.74L1071.81 625.99L1073.6 626.27L1075.4 626.59L1077.19 626.92L1078.99 627.27L1080.78 627.63L1082.58 627.99L1084.37 628.36L1086.17 628.71L1087.96 629.07L1089.76 629.41L1091.55 629.74L1093.35 630.05L1095.14 630.36L1096.94 630.65L1098.73 630.93L1100.53 631.19L1102.32 631.44L1104.12 631.67L1105.91 631.89L1107.71 632.1L1109.5 632.3L1111.3 632.48L1113.09 632.66L1114.89 632.82L1116.68 632.98L1118.48 633.13L1120.27 633.26L1122.07 633.39L1123.86 633.52L1125.66 633.63L1127.45 633.74L1129.25 633.84L1131.04 633.94L1132.84 634.03L1134.63 634.12L1136.43 634.2L1138.22 634.28L1140.02 634.36L1141.81 634.43L1143.61 634.49L1145.4 634.56L1147.2 634.62L1148.99 634.67L1150.79 634.73L1152.58 634.78L1154.38 634.83L1156.17 634.88L1157.97 634.92L1159.76 634.96L1161.56 635L1163.35 635.04L1165.15 635.08L1166.94 635.12L1168.74 635.15L1170.53 635.18L1172.33 635.21L1174.12 635.24L1175.92 635.27L1177.71 635.3L1179.51 635.33L1181.3 635.35L1183.1 635.38L1184.89 635.4L1186.69 635.42L1188.48 635.44L1190.28 635.46L1192.07 635.48L1193.87 635.5L1195.66 635.52L1197.46 635.54L1199.25 635.56L1201.05 635.57L1202.84 635.59L1204.64 635.61L1206.43 635.62L1208.23 635.63L1210.02 635.65L1211.82 635.66L1213.61 635.68L1215.41 635.69L1217.2 635.7L1219 635.71L1220.79 635.72L1222.59 635.73L1224.38 635.75L1226.18 635.76L1227.97 635.77L1229.77 635.78L1231.56 635.79L1233.36 635.79L1235.15 635.8L1236.95 635.81L1238.74 635.82L1240.54 635.83L1242.33 635.84L1244.13 635.85L1245.92 635.85L1247.72 635.86L1249.51 635.87L1251.31 635.87L1253.1 635.88" stroke="#ff0000" stroke-width="2.6" fill="none" stroke-linejoin="round"/></g><clipPath id="c_dir"><rect x="717" y="722" width="537" height="265"/></clipPath><g clip-path="url(#c_dir)"><path d="M717.5 803.67L719.29 803.67L721.08 803.67L722.87 803.67L724.66 803.67L726.45 803.67L728.24 803.67L730.03 803.67L731.81 803.67L733.6 803.66L735.39 803.66L737.18 803.66L738.97 803.66L740.76 803.66L742.55 803.66L744.34 803.65L746.13 803.65L747.92 803.65L749.71 803.65L751.5 803.64L753.29 803.64L755.08 803.64L756.86 803.63L758.65 803.63L760.44 803.63L762.23 803.62L764.02 803.62L765.81 803.62L767.6 803.61L769.39 803.61L771.18 803.6L772.97 803.6L774.76 803.59L776.55 803.59L778.34 803.59L780.13 803.58L781.91 803.58L783.7 803.57L785.49 803.57L787.28 803.56L789.07 803.55L790.86 803.55L792.65 803.54L794.44 803.54L796.23 803.53L798.02 803.52L799.81 803.52L801.6 803.51L803.39 803.51L805.18 803.5L806.96 803.49L808.75 803.49L810.54 803.48L812.33 803.47L814.12 803.46L815.91 803.46L817.7 803.45L819.49 803.44L821.28 803.44L823.07 803.43L824.86 803.42L826.65 803.41L828.44 803.4L830.23 803.4L832.02 803.39L833.8 803.38L835.59 803.37L837.38 803.36L839.17 803.36L840.96 803.35L842.75 803.34L844.54 803.33L846.33 803.32L848.12 803.3L849.91 803.29L851.7 803.28L853.49 803.26L855.28 803.24L857.07 803.23L858.85 803.21L860.64 803.19L862.43 803.16L864.22 803.14L866.01 803.12L867.8 803.09L869.59 803.07L871.38 803.04L873.17 803.01L874.96 802.98L876.75 802.95L878.54 802.92L880.33 802.89L882.12 802.85L883.9 802.82L885.69 802.78L887.48 802.74L889.27 802.7L891.06 802.66L892.85 802.62L894.64 802.58L896.43 802.54L898.22 802.49L900.01 802.45L901.8 802.4L903.59 802.35L905.38 802.3L907.17 802.25L908.95 802.2L910.74 802.15L912.53 802.1L914.32 802.04L916.11 801.99L917.9 801.93L919.69 801.87L921.48 801.81L923.27 801.75L925.06 801.69L926.85 801.63L928.64 801.57L930.43 801.5L932.22 801.44L934.01 801.37L935.79 801.3L937.58 801.23L939.37 801.16L941.16 801.09L942.95 801L944.74 800.91L946.53 800.81L948.32 800.7L950.11 800.58L951.9 800.45L953.69 800.31L955.48 800.17L957.27 800.01L959.06 799.85L960.84 799.69L962.63 799.51L964.42 799.33L966.21 799.14L968 798.94L969.79 798.74L971.58 798.53L973.37 798.31L975.16 798.08L976.95 797.85L978.74 797.61L980.53 797.38L982.32 797.14L984.11 796.89L985.89 796.64L987.68 796.37L989.47 796.08L991.26 795.77L993.05 795.44L994.84 795.08L996.63 794.7L998.42 794.28L1000.21 793.84L1002 793.37L1003.79 792.88L1005.58 792.37L1007.37 791.85L1009.16 791.31L1010.94 790.77L1012.73 790.22L1014.52 789.67L1016.31 789.11L1018.1 788.56L1019.89 788.01L1021.68 787.46L1023.47 786.91L1025.26 786.34L1027.05 785.77L1028.84 785.18L1030.63 784.57L1032.42 783.94L1034.21 783.3L1035.99 782.63L1037.78 781.93L1039.57 781.22L1041.36 780.47L1043.15 779.71L1044.94 778.92L1046.73 778.1L1048.52 777.25L1050.31 776.37L1052.1 775.45L1053.89 774.5L1055.68 773.51L1057.47 772.47L1059.26 771.4L1061.05 770.29L1062.83 769.13L1064.62 767.92L1066.41 766.64L1068.2 765.24L1069.99 763.72L1071.78 762.04L1073.57 760.22L1075.36 758.32L1077.15 756.42L1078.94 754.59L1080.73 752.9L1082.52 751.39L1084.31 750.05L1086.1 748.87L1087.88 747.83L1089.67 746.92L1091.46 746.12L1093.25 745.43L1095.04 744.85L1096.83 744.36L1098.62 743.97L1100.41 743.66L1102.2 743.45L1103.99 743.34L1105.78 743.33L1107.57 743.43L1109.36 743.64L1111.15 743.94L1112.93 744.3L1114.72 744.71L1116.51 745.14L1118.3 745.58L1120.09 746.01L1121.88 746.45L1123.67 746.88L1125.46 747.32L1127.25 747.74L1129.04 748.17L1130.83 748.61L1132.62 749.05L1134.41 749.5L1136.2 749.96L1137.98 750.44L1139.77 750.92L1141.56 751.39L1143.35 751.86L1145.14 752.31L1146.93 752.74L1148.72 753.15L1150.51 753.53L1152.3 753.87L1154.09 754.17L1155.88 754.44L1157.67 754.69L1159.46 754.91L1161.25 755.12L1163.04 755.32L1164.82 755.52L1166.61 755.71L1168.4 755.9L1170.19 756.08L1171.98 756.25L1173.77 756.42L1175.56 756.58L1177.35 756.73L1179.14 756.88L1180.93 757.02L1182.72 757.16L1184.51 757.29L1186.3 757.42L1188.09 757.55L1189.87 757.67L1191.66 757.79L1193.45 757.91L1195.24 758.03L1197.03 758.14L1198.82 758.25L1200.61 758.36L1202.4 758.48L1204.19 758.58L1205.98 758.69L1207.77 758.8L1209.56 758.9L1211.35 759.01L1213.14 759.11L1214.92 759.21L1216.71 759.31L1218.5 759.41L1220.29 759.5L1222.08 759.6L1223.87 759.69L1225.66 759.78L1227.45 759.86L1229.24 759.95L1231.03 760.03L1232.82 760.11L1234.61 760.18L1236.4 760.26L1238.19 760.33L1239.97 760.39L1241.76 760.46L1243.55 760.52L1245.34 760.57L1247.13 760.63L1248.92 760.67L1250.71 760.72L1252.5 760.77" stroke="#a400f2" stroke-width="2.2" fill="none" stroke-linejoin="round"/><path d="M717.5 803.69L719.29 803.69L721.08 803.69L722.87 803.69L724.66 803.69L726.45 803.69L728.24 803.69L730.03 803.68L731.81 803.68L733.6 803.68L735.39 803.68L737.18 803.68L738.97 803.68L740.76 803.68L742.55 803.67L744.34 803.67L746.13 803.67L747.92 803.67L749.71 803.66L751.5 803.66L753.29 803.66L755.08 803.66L756.86 803.65L758.65 803.65L760.44 803.65L762.23 803.64L764.02 803.64L765.81 803.63L767.6 803.63L769.39 803.63L771.18 803.62L772.97 803.62L774.76 803.61L776.55 803.61L778.34 803.6L780.13 803.6L781.91 803.59L783.7 803.59L785.49 803.58L787.28 803.58L789.07 803.57L790.86 803.57L792.65 803.56L794.44 803.56L796.23 803.55L798.02 803.54L799.81 803.54L801.6 803.53L803.39 803.52L805.18 803.52L806.96 803.51L808.75 803.5L810.54 803.5L812.33 803.49L814.12 803.48L815.91 803.48L817.7 803.47L819.49 803.46L821.28 803.45L823.07 803.45L824.86 803.44L826.65 803.43L828.44 803.42L830.23 803.41L832.02 803.41L833.8 803.4L835.59 803.39L837.38 803.38L839.17 803.37L840.96 803.36L842.75 803.36L844.54 803.35L846.33 803.33L848.12 803.32L849.91 803.31L851.7 803.29L853.49 803.28L855.28 803.26L857.07 803.24L858.85 803.22L860.64 803.2L862.43 803.18L864.22 803.16L866.01 803.13L867.8 803.11L869.59 803.08L871.38 803.05L873.17 803.03L874.96 803L876.75 802.96L878.54 802.93L880.33 802.9L882.12 802.86L883.9 802.83L885.69 802.79L887.48 802.75L889.27 802.71L891.06 802.67L892.85 802.63L894.64 802.59L896.43 802.55L898.22 802.5L900.01 802.46L901.8 802.41L903.59 802.36L905.38 802.31L907.17 802.26L908.95 802.21L910.74 802.16L912.53 802.1L914.32 802.05L916.11 801.99L917.9 801.94L919.69 801.88L921.48 801.82L923.27 801.76L925.06 801.7L926.85 801.64L928.64 801.57L930.43 801.51L932.22 801.44L934.01 801.38L935.79 801.31L937.58 801.24L939.37 801.17L941.16 801.1L942.95 801.01L944.74 800.92L946.53 800.82L948.32 800.71L950.11 800.59L951.9 800.47L953.69 800.33L955.48 800.19L957.27 800.04L959.06 799.88L960.84 799.72L962.63 799.54L964.42 799.37L966.21 799.18L968 798.99L969.79 798.79L971.58 798.58L973.37 798.37L975.16 798.15L976.95 797.92L978.74 797.7L980.53 797.47L982.32 797.24L984.11 797L985.89 796.76L987.68 796.5L989.47 796.23L991.26 795.93L993.05 795.62L994.84 795.27L996.63 794.91L998.42 794.52L1000.21 794.1L1002 793.65L1003.79 793.19L1005.58 792.71L1007.37 792.21L1009.16 791.7L1010.94 791.18L1012.73 790.66L1014.52 790.14L1016.31 789.62L1018.1 789.1L1019.89 788.59L1021.68 788.08L1023.47 787.56L1025.26 787.05L1027.05 786.52L1028.84 785.99L1030.63 785.45L1032.42 784.88L1034.21 784.3L1035.99 783.7L1037.78 783.07L1039.57 782.42L1041.36 781.74L1043.15 781.04L1044.94 780.32L1046.73 779.57L1048.52 778.79L1050.31 777.97L1052.1 777.11L1053.89 776.21L1055.68 775.25L1057.47 774.25L1059.26 773.21L1061.05 772.11L1062.83 770.97L1064.62 769.77L1066.41 768.48L1068.2 767.09L1069.99 765.55L1071.78 763.86L1073.57 762.01L1075.36 760.08L1077.15 758.14L1078.94 756.26L1080.73 754.52L1082.52 752.95L1084.31 751.55L1086.1 750.3L1087.88 749.18L1089.67 748.19L1091.46 747.3L1093.25 746.52L1095.04 745.84L1096.83 745.27L1098.62 744.79L1100.41 744.41L1102.2 744.14L1103.99 743.96L1105.78 743.9L1107.57 743.95L1109.36 744.12L1111.15 744.38L1112.93 744.71L1114.72 745.09L1116.51 745.49L1118.3 745.91L1120.09 746.33L1121.88 746.75L1123.67 747.17L1125.46 747.59L1127.25 748.01L1129.04 748.43L1130.83 748.86L1132.62 749.29L1134.41 749.73L1136.2 750.19L1137.98 750.65L1139.77 751.11L1141.56 751.57L1143.35 752.03L1145.14 752.46L1146.93 752.88L1148.72 753.27L1150.51 753.64L1152.3 753.97L1154.09 754.27L1155.88 754.54L1157.67 754.78L1159.46 755L1161.25 755.2L1163.04 755.4L1164.82 755.6L1166.61 755.79L1168.4 755.98L1170.19 756.16L1171.98 756.33L1173.77 756.49L1175.56 756.65L1177.35 756.8L1179.14 756.95L1180.93 757.09L1182.72 757.23L1184.51 757.37L1186.3 757.5L1188.09 757.62L1189.87 757.75L1191.66 757.87L1193.45 757.99L1195.24 758.1L1197.03 758.21L1198.82 758.33L1200.61 758.44L1202.4 758.55L1204.19 758.66L1205.98 758.76L1207.77 758.87L1209.56 758.98L1211.35 759.08L1213.14 759.18L1214.92 759.28L1216.71 759.38L1218.5 759.48L1220.29 759.57L1222.08 759.67L1223.87 759.76L1225.66 759.85L1227.45 759.93L1229.24 760.01L1231.03 760.1L1232.82 760.17L1234.61 760.25L1236.4 760.32L1238.19 760.4L1239.97 760.46L1241.76 760.53L1243.55 760.59L1245.34 760.64L1247.13 760.69L1248.92 760.74L1250.71 760.79L1252.5 760.84" stroke="#6500f2" stroke-width="1.2" fill="none" stroke-linejoin="round"/><path d="M717.5 803.71L719.29 803.71L721.08 803.71L722.87 803.71L724.66 803.71L726.45 803.7L728.24 803.7L730.03 803.7L731.81 803.7L733.6 803.7L735.39 803.7L737.18 803.7L738.97 803.7L740.76 803.69L742.55 803.69L744.34 803.69L746.13 803.69L747.92 803.68L749.71 803.68L751.5 803.68L753.29 803.68L755.08 803.67L756.86 803.67L758.65 803.67L760.44 803.66L762.23 803.66L764.02 803.66L765.81 803.65L767.6 803.65L769.39 803.64L771.18 803.64L772.97 803.64L774.76 803.63L776.55 803.63L778.34 803.62L780.13 803.62L781.91 803.61L783.7 803.61L785.49 803.6L787.28 803.6L789.07 803.59L790.86 803.59L792.65 803.58L794.44 803.57L796.23 803.57L798.02 803.56L799.81 803.56L801.6 803.55L803.39 803.54L805.18 803.54L806.96 803.53L808.75 803.52L810.54 803.52L812.33 803.51L814.12 803.5L815.91 803.49L817.7 803.49L819.49 803.48L821.28 803.47L823.07 803.46L824.86 803.46L826.65 803.45L828.44 803.44L830.23 803.43L832.02 803.42L833.8 803.42L835.59 803.41L837.38 803.4L839.17 803.39L840.96 803.38L842.75 803.37L844.54 803.36L846.33 803.35L848.12 803.34L849.91 803.33L851.7 803.31L853.49 803.3L855.28 803.28L857.07 803.26L858.85 803.24L860.64 803.22L862.43 803.2L864.22 803.17L866.01 803.15L867.8 803.12L869.59 803.1L871.38 803.07L873.17 803.04L874.96 803.01L876.75 802.98L878.54 802.95L880.33 802.91L882.12 802.88L883.9 802.84L885.69 802.8L887.48 802.77L889.27 802.73L891.06 802.69L892.85 802.64L894.64 802.6L896.43 802.56L898.22 802.51L900.01 802.47L901.8 802.42L903.59 802.37L905.38 802.32L907.17 802.27L908.95 802.22L910.74 802.17L912.53 802.11L914.32 802.06L916.11 802L917.9 801.95L919.69 801.89L921.48 801.83L923.27 801.77L925.06 801.71L926.85 801.65L928.64 801.58L930.43 801.52L932.22 801.45L934.01 801.39L935.79 801.32L937.58 801.25L939.37 801.18L941.16 801.11L942.95 801.03L944.74 800.94L946.53 800.84L948.32 800.73L950.11 800.61L951.9 800.48L953.69 800.35L955.48 800.21L957.27 800.06L959.06 799.91L960.84 799.75L962.63 799.58L964.42 799.4L966.21 799.22L968 799.03L969.79 798.84L971.58 798.64L973.37 798.43L975.16 798.22L976.95 798L978.74 797.78L980.53 797.56L982.32 797.34L984.11 797.11L985.89 796.88L987.68 796.63L989.47 796.37L991.26 796.09L993.05 795.79L994.84 795.47L996.63 795.12L998.42 794.75L1000.21 794.36L1002 793.94L1003.79 793.5L1005.58 793.04L1007.37 792.57L1009.16 792.09L1010.94 791.6L1012.73 791.11L1014.52 790.61L1016.31 790.12L1018.1 789.64L1019.89 789.16L1021.68 788.69L1023.47 788.22L1025.26 787.75L1027.05 787.28L1028.84 786.81L1030.63 786.32L1032.42 785.83L1034.21 785.31L1035.99 784.77L1037.78 784.21L1039.57 783.62L1041.36 783.01L1043.15 782.38L1044.94 781.72L1046.73 781.04L1048.52 780.32L1050.31 779.57L1052.1 778.77L1053.89 777.91L1055.68 777L1057.47 776.03L1059.26 775.01L1061.05 773.94L1062.83 772.81L1064.62 771.62L1066.41 770.33L1068.2 768.93L1069.99 767.39L1071.78 765.68L1073.57 763.8L1075.36 761.84L1077.15 759.86L1078.94 757.93L1080.73 756.13L1082.52 754.51L1084.31 753.04L1086.1 751.72L1087.88 750.53L1089.67 749.45L1091.46 748.48L1093.25 747.61L1095.04 746.84L1096.83 746.17L1098.62 745.61L1100.41 745.16L1102.2 744.82L1103.99 744.59L1105.78 744.47L1107.57 744.48L1109.36 744.6L1111.15 744.82L1112.93 745.12L1114.72 745.47L1116.51 745.85L1118.3 746.24L1120.09 746.64L1121.88 747.04L1123.67 747.45L1125.46 747.86L1127.25 748.27L1129.04 748.69L1130.83 749.1L1132.62 749.53L1134.41 749.96L1136.2 750.41L1137.98 750.86L1139.77 751.31L1141.56 751.75L1143.35 752.19L1145.14 752.61L1146.93 753.02L1148.72 753.4L1150.51 753.75L1152.3 754.08L1154.09 754.37L1155.88 754.63L1157.67 754.86L1159.46 755.08L1161.25 755.29L1163.04 755.49L1164.82 755.68L1166.61 755.87L1168.4 756.05L1170.19 756.23L1171.98 756.4L1173.77 756.57L1175.56 756.72L1177.35 756.88L1179.14 757.02L1180.93 757.17L1182.72 757.31L1184.51 757.44L1186.3 757.57L1188.09 757.7L1189.87 757.82L1191.66 757.94L1193.45 758.06L1195.24 758.17L1197.03 758.29L1198.82 758.4L1200.61 758.51L1202.4 758.62L1204.19 758.73L1205.98 758.84L1207.77 758.94L1209.56 759.05L1211.35 759.15L1213.14 759.25L1214.92 759.35L1216.71 759.45L1218.5 759.55L1220.29 759.64L1222.08 759.74L1223.87 759.83L1225.66 759.91L1227.45 760L1229.24 760.08L1231.03 760.17L1232.82 760.24L1234.61 760.32L1236.4 760.39L1238.19 760.46L1239.97 760.53L1241.76 760.6L1243.55 760.66L1245.34 760.71L1247.13 760.76L1248.92 760.81L1250.71 760.86L1252.5 760.91" stroke="#2600f2" stroke-width="1.2" fill="none" stroke-linejoin="round"/><path d="M717.5 803.72L719.29 803.72L721.08 803.72L722.87 803.72L724.66 803.72L726.45 803.72L728.24 803.72L730.03 803.72L731.81 803.72L733.6 803.72L735.39 803.72L737.18 803.72L738.97 803.71L740.76 803.71L742.55 803.71L744.34 803.71L746.13 803.71L747.92 803.7L749.71 803.7L751.5 803.7L753.29 803.69L755.08 803.69L756.86 803.69L758.65 803.69L760.44 803.68L762.23 803.68L764.02 803.67L765.81 803.67L767.6 803.67L769.39 803.66L771.18 803.66L772.97 803.65L774.76 803.65L776.55 803.65L778.34 803.64L780.13 803.64L781.91 803.63L783.7 803.63L785.49 803.62L787.28 803.61L789.07 803.61L790.86 803.6L792.65 803.6L794.44 803.59L796.23 803.59L798.02 803.58L799.81 803.57L801.6 803.57L803.39 803.56L805.18 803.55L806.96 803.55L808.75 803.54L810.54 803.53L812.33 803.53L814.12 803.52L815.91 803.51L817.7 803.51L819.49 803.5L821.28 803.49L823.07 803.48L824.86 803.48L826.65 803.47L828.44 803.46L830.23 803.45L832.02 803.44L833.8 803.43L835.59 803.43L837.38 803.42L839.17 803.41L840.96 803.4L842.75 803.39L844.54 803.38L846.33 803.37L848.12 803.36L849.91 803.34L851.7 803.33L853.49 803.31L855.28 803.3L857.07 803.28L858.85 803.26L860.64 803.24L862.43 803.21L864.22 803.19L866.01 803.17L867.8 803.14L869.59 803.11L871.38 803.08L873.17 803.06L874.96 803.02L876.75 802.99L878.54 802.96L880.33 802.93L882.12 802.89L883.9 802.85L885.69 802.82L887.48 802.78L889.27 802.74L891.06 802.7L892.85 802.65L894.64 802.61L896.43 802.57L898.22 802.52L900.01 802.48L901.8 802.43L903.59 802.38L905.38 802.33L907.17 802.28L908.95 802.23L910.74 802.18L912.53 802.12L914.32 802.07L916.11 802.01L917.9 801.95L919.69 801.9L921.48 801.84L923.27 801.78L925.06 801.72L926.85 801.65L928.64 801.59L930.43 801.53L932.22 801.46L934.01 801.4L935.79 801.33L937.58 801.27L939.37 801.19L941.16 801.12L942.95 801.04L944.74 800.95L946.53 800.85L948.32 800.74L950.11 800.63L951.9 800.5L953.69 800.37L955.48 800.23L957.27 800.09L959.06 799.93L960.84 799.77L962.63 799.61L964.42 799.44L966.21 799.26L968 799.08L969.79 798.89L971.58 798.69L973.37 798.49L975.16 798.29L976.95 798.08L978.74 797.87L980.53 797.65L982.32 797.44L984.11 797.23L985.89 797L987.68 796.77L989.47 796.52L991.26 796.25L993.05 795.97L994.84 795.66L996.63 795.34L998.42 794.99L1000.21 794.61L1002 794.22L1003.79 793.8L1005.58 793.37L1007.37 792.93L1009.16 792.47L1010.94 792.01L1012.73 791.55L1014.52 791.09L1016.31 790.63L1018.1 790.18L1019.89 789.73L1021.68 789.3L1023.47 788.87L1025.26 788.45L1027.05 788.04L1028.84 787.62L1030.63 787.2L1032.42 786.77L1034.21 786.32L1035.99 785.85L1037.78 785.35L1039.57 784.83L1041.36 784.28L1043.15 783.71L1044.94 783.12L1046.73 782.51L1048.52 781.86L1050.31 781.17L1052.1 780.43L1053.89 779.62L1055.68 778.75L1057.47 777.81L1059.26 776.82L1061.05 775.76L1062.83 774.65L1064.62 773.46L1066.41 772.18L1068.2 770.78L1069.99 769.23L1071.78 767.49L1073.57 765.59L1075.36 763.59L1077.15 761.57L1078.94 759.6L1080.73 757.75L1082.52 756.06L1084.31 754.54L1086.1 753.14L1087.88 751.88L1089.67 750.72L1091.46 749.65L1093.25 748.69L1095.04 747.83L1096.83 747.08L1098.62 746.44L1100.41 745.91L1102.2 745.5L1103.99 745.21L1105.78 745.04L1107.57 745L1109.36 745.08L1111.15 745.26L1112.93 745.53L1114.72 745.85L1116.51 746.21L1118.3 746.58L1120.09 746.95L1121.88 747.34L1123.67 747.74L1125.46 748.13L1127.25 748.54L1129.04 748.94L1130.83 749.35L1132.62 749.77L1134.41 750.19L1136.2 750.63L1137.98 751.06L1139.77 751.5L1141.56 751.93L1143.35 752.35L1145.14 752.76L1146.93 753.15L1148.72 753.52L1150.51 753.86L1152.3 754.18L1154.09 754.46L1155.88 754.72L1157.67 754.95L1159.46 755.17L1161.25 755.37L1163.04 755.57L1164.82 755.76L1166.61 755.95L1168.4 756.13L1170.19 756.31L1171.98 756.48L1173.77 756.64L1175.56 756.8L1177.35 756.95L1179.14 757.1L1180.93 757.24L1182.72 757.38L1184.51 757.51L1186.3 757.64L1188.09 757.77L1189.87 757.89L1191.66 758.01L1193.45 758.13L1195.24 758.25L1197.03 758.36L1198.82 758.47L1200.61 758.58L1202.4 758.69L1204.19 758.8L1205.98 758.91L1207.77 759.01L1209.56 759.12L1211.35 759.22L1213.14 759.32L1214.92 759.42L1216.71 759.52L1218.5 759.62L1220.29 759.71L1222.08 759.81L1223.87 759.9L1225.66 759.98L1227.45 760.07L1229.24 760.15L1231.03 760.23L1232.82 760.31L1234.61 760.39L1236.4 760.46L1238.19 760.53L1239.97 760.6L1241.76 760.66L1243.55 760.72L1245.34 760.78L1247.13 760.83L1248.92 760.88L1250.71 760.93L1252.5 760.98" stroke="#0018f2" stroke-width="1.2" fill="none" stroke-linejoin="round"/><path d="M717.5 803.74L719.29 803.74L721.08 803.74L722.87 803.74L724.66 803.74L726.45 803.74L728.24 803.74L730.03 803.74L731.81 803.74L733.6 803.74L735.39 803.74L737.18 803.73L738.97 803.73L740.76 803.73L742.55 803.73L744.34 803.73L746.13 803.72L747.92 803.72L749.71 803.72L751.5 803.72L753.29 803.71L755.08 803.71L756.86 803.71L758.65 803.7L760.44 803.7L762.23 803.7L764.02 803.69L765.81 803.69L767.6 803.69L769.39 803.68L771.18 803.68L772.97 803.67L774.76 803.67L776.55 803.66L778.34 803.66L780.13 803.65L781.91 803.65L783.7 803.64L785.49 803.64L787.28 803.63L789.07 803.63L790.86 803.62L792.65 803.62L794.44 803.61L796.23 803.6L798.02 803.6L799.81 803.59L801.6 803.59L803.39 803.58L805.18 803.57L806.96 803.57L808.75 803.56L810.54 803.55L812.33 803.55L814.12 803.54L815.91 803.53L817.7 803.52L819.49 803.52L821.28 803.51L823.07 803.5L824.86 803.49L826.65 803.49L828.44 803.48L830.23 803.47L832.02 803.46L833.8 803.45L835.59 803.44L837.38 803.44L839.17 803.43L840.96 803.42L842.75 803.41L844.54 803.4L846.33 803.39L848.12 803.38L849.91 803.36L851.7 803.35L853.49 803.33L855.28 803.31L857.07 803.3L858.85 803.28L860.64 803.25L862.43 803.23L864.22 803.21L866.01 803.18L867.8 803.16L869.59 803.13L871.38 803.1L873.17 803.07L874.96 803.04L876.75 803.01L878.54 802.97L880.33 802.94L882.12 802.9L883.9 802.87L885.69 802.83L887.48 802.79L889.27 802.75L891.06 802.71L892.85 802.67L894.64 802.62L896.43 802.58L898.22 802.53L900.01 802.49L901.8 802.44L903.59 802.39L905.38 802.34L907.17 802.29L908.95 802.24L910.74 802.18L912.53 802.13L914.32 802.07L916.11 802.02L917.9 801.96L919.69 801.9L921.48 801.85L923.27 801.79L925.06 801.73L926.85 801.66L928.64 801.6L930.43 801.54L932.22 801.47L934.01 801.41L935.79 801.34L937.58 801.28L939.37 801.21L941.16 801.13L942.95 801.05L944.74 800.96L946.53 800.86L948.32 800.76L950.11 800.64L951.9 800.52L953.69 800.39L955.48 800.25L957.27 800.11L959.06 799.96L960.84 799.8L962.63 799.64L964.42 799.47L966.21 799.3L968 799.12L969.79 798.94L971.58 798.75L973.37 798.55L975.16 798.36L976.95 798.15L978.74 797.95L980.53 797.75L982.32 797.54L984.11 797.34L985.89 797.12L987.68 796.9L989.47 796.67L991.26 796.42L993.05 796.15L994.84 795.86L996.63 795.55L998.42 795.22L1000.21 794.87L1002 794.5L1003.79 794.11L1005.58 793.7L1007.37 793.29L1009.16 792.86L1010.94 792.43L1012.73 791.99L1014.52 791.56L1016.31 791.13L1018.1 790.71L1019.89 790.31L1021.68 789.91L1023.47 789.53L1025.26 789.15L1027.05 788.79L1028.84 788.44L1030.63 788.08L1032.42 787.71L1034.21 787.33L1035.99 786.92L1037.78 786.49L1039.57 786.03L1041.36 785.55L1043.15 785.05L1044.94 784.53L1046.73 783.98L1048.52 783.4L1050.31 782.77L1052.1 782.09L1053.89 781.33L1055.68 780.5L1057.47 779.59L1059.26 778.62L1061.05 777.58L1062.83 776.48L1064.62 775.31L1066.41 774.03L1068.2 772.63L1069.99 771.06L1071.78 769.31L1073.57 767.38L1075.36 765.35L1077.15 763.29L1078.94 761.27L1080.73 759.37L1082.52 757.62L1084.31 756.03L1086.1 754.57L1087.88 753.23L1089.67 751.98L1091.46 750.83L1093.25 749.78L1095.04 748.83L1096.83 747.98L1098.62 747.26L1100.41 746.66L1102.2 746.18L1103.99 745.83L1105.78 745.61L1107.57 745.52L1109.36 745.56L1111.15 745.7L1112.93 745.94L1114.72 746.23L1116.51 746.56L1118.3 746.91L1120.09 747.27L1121.88 747.64L1123.67 748.02L1125.46 748.41L1127.25 748.8L1129.04 749.2L1130.83 749.6L1132.62 750.01L1134.41 750.43L1136.2 750.85L1137.98 751.27L1139.77 751.69L1141.56 752.11L1143.35 752.52L1145.14 752.91L1146.93 753.29L1148.72 753.64L1150.51 753.98L1152.3 754.28L1154.09 754.56L1155.88 754.81L1157.67 755.04L1159.46 755.25L1161.25 755.45L1163.04 755.65L1164.82 755.84L1166.61 756.03L1168.4 756.21L1170.19 756.38L1171.98 756.55L1173.77 756.71L1175.56 756.87L1177.35 757.02L1179.14 757.17L1180.93 757.31L1182.72 757.45L1184.51 757.59L1186.3 757.72L1188.09 757.84L1189.87 757.97L1191.66 758.09L1193.45 758.21L1195.24 758.32L1197.03 758.43L1198.82 758.55L1200.61 758.66L1202.4 758.77L1204.19 758.87L1205.98 758.98L1207.77 759.09L1209.56 759.19L1211.35 759.29L1213.14 759.39L1214.92 759.49L1216.71 759.59L1218.5 759.69L1220.29 759.78L1222.08 759.88L1223.87 759.97L1225.66 760.05L1227.45 760.14L1229.24 760.22L1231.03 760.3L1232.82 760.38L1234.61 760.46L1236.4 760.53L1238.19 760.6L1239.97 760.67L1241.76 760.73L1243.55 760.79L1245.34 760.85L1247.13 760.9L1248.92 760.95L1250.71 761L1252.5 761.05" stroke="#0057f2" stroke-width="1.2" fill="none" stroke-linejoin="round"/><path d="M717.5 803.76L719.29 803.76L721.08 803.76L722.87 803.76L724.66 803.76L726.45 803.76L728.24 803.76L730.03 803.76L731.81 803.76L733.6 803.76L735.39 803.75L737.18 803.75L738.97 803.75L740.76 803.75L742.55 803.75L744.34 803.74L746.13 803.74L747.92 803.74L749.71 803.74L751.5 803.73L753.29 803.73L755.08 803.73L756.86 803.73L758.65 803.72L760.44 803.72L762.23 803.72L764.02 803.71L765.81 803.71L767.6 803.7L769.39 803.7L771.18 803.7L772.97 803.69L774.76 803.69L776.55 803.68L778.34 803.68L780.13 803.67L781.91 803.67L783.7 803.66L785.49 803.66L787.28 803.65L789.07 803.65L790.86 803.64L792.65 803.63L794.44 803.63L796.23 803.62L798.02 803.62L799.81 803.61L801.6 803.6L803.39 803.6L805.18 803.59L806.96 803.58L808.75 803.58L810.54 803.57L812.33 803.56L814.12 803.56L815.91 803.55L817.7 803.54L819.49 803.53L821.28 803.53L823.07 803.52L824.86 803.51L826.65 803.5L828.44 803.5L830.23 803.49L832.02 803.48L833.8 803.47L835.59 803.46L837.38 803.46L839.17 803.45L840.96 803.44L842.75 803.43L844.54 803.42L846.33 803.41L848.12 803.39L849.91 803.38L851.7 803.37L853.49 803.35L855.28 803.33L857.07 803.31L858.85 803.29L860.64 803.27L862.43 803.25L864.22 803.22L866.01 803.2L867.8 803.17L869.59 803.14L871.38 803.11L873.17 803.08L874.96 803.05L876.75 803.02L878.54 802.99L880.33 802.95L882.12 802.92L883.9 802.88L885.69 802.84L887.48 802.8L889.27 802.76L891.06 802.72L892.85 802.68L894.64 802.63L896.43 802.59L898.22 802.54L900.01 802.49L901.8 802.45L903.59 802.4L905.38 802.35L907.17 802.3L908.95 802.24L910.74 802.19L912.53 802.14L914.32 802.08L916.11 802.03L917.9 801.97L919.69 801.91L921.48 801.85L923.27 801.79L925.06 801.73L926.85 801.67L928.64 801.61L930.43 801.55L932.22 801.48L934.01 801.42L935.79 801.35L937.58 801.29L939.37 801.22L941.16 801.14L942.95 801.06L944.74 800.98L946.53 800.88L948.32 800.77L950.11 800.66L951.9 800.54L953.69 800.41L955.48 800.27L957.27 800.13L959.06 799.99L960.84 799.83L962.63 799.67L964.42 799.51L966.21 799.34L968 799.17L969.79 798.99L971.58 798.81L973.37 798.62L975.16 798.42L976.95 798.23L978.74 798.03L980.53 797.84L982.32 797.64L984.11 797.45L985.89 797.25L987.68 797.04L989.47 796.81L991.26 796.58L993.05 796.32L994.84 796.05L996.63 795.76L998.42 795.45L1000.21 795.13L1002 794.78L1003.79 794.41L1005.58 794.04L1007.37 793.65L1009.16 793.25L1010.94 792.84L1012.73 792.44L1014.52 792.03L1016.31 791.64L1018.1 791.25L1019.89 790.88L1021.68 790.52L1023.47 790.18L1025.26 789.86L1027.05 789.55L1028.84 789.25L1030.63 788.96L1032.42 788.66L1034.21 788.34L1035.99 788L1037.78 787.63L1039.57 787.23L1041.36 786.82L1043.15 786.38L1044.94 785.93L1046.73 785.45L1048.52 784.94L1050.31 784.37L1052.1 783.74L1053.89 783.04L1055.68 782.24L1057.47 781.37L1059.26 780.43L1061.05 779.41L1062.83 778.32L1064.62 777.15L1066.41 775.88L1068.2 774.47L1069.99 772.9L1071.78 771.13L1073.57 769.17L1075.36 767.11L1077.15 765L1078.94 762.94L1080.73 760.98L1082.52 759.18L1084.31 757.52L1086.1 755.99L1087.88 754.57L1089.67 753.25L1091.46 752.01L1093.25 750.86L1095.04 749.82L1096.83 748.89L1098.62 748.08L1100.41 747.4L1102.2 746.86L1103.99 746.45L1105.78 746.17L1107.57 746.04L1109.36 746.04L1111.15 746.15L1112.93 746.35L1114.72 746.61L1116.51 746.92L1118.3 747.24L1120.09 747.58L1121.88 747.94L1123.67 748.3L1125.46 748.68L1127.25 749.06L1129.04 749.45L1130.83 749.85L1132.62 750.25L1134.41 750.66L1136.2 751.07L1137.98 751.48L1139.77 751.89L1141.56 752.29L1143.35 752.68L1145.14 753.06L1146.93 753.42L1148.72 753.77L1150.51 754.09L1152.3 754.39L1154.09 754.66L1155.88 754.9L1157.67 755.13L1159.46 755.34L1161.25 755.54L1163.04 755.73L1164.82 755.92L1166.61 756.1L1168.4 756.28L1170.19 756.46L1171.98 756.63L1173.77 756.79L1175.56 756.95L1177.35 757.1L1179.14 757.24L1180.93 757.39L1182.72 757.53L1184.51 757.66L1186.3 757.79L1188.09 757.92L1189.87 758.04L1191.66 758.16L1193.45 758.28L1195.24 758.39L1197.03 758.51L1198.82 758.62L1200.61 758.73L1202.4 758.84L1204.19 758.95L1205.98 759.05L1207.77 759.16L1209.56 759.26L1211.35 759.36L1213.14 759.47L1214.92 759.57L1216.71 759.66L1218.5 759.76L1220.29 759.85L1222.08 759.95L1223.87 760.04L1225.66 760.12L1227.45 760.21L1229.24 760.29L1231.03 760.37L1232.82 760.45L1234.61 760.53L1236.4 760.6L1238.19 760.67L1239.97 760.74L1241.76 760.8L1243.55 760.86L1245.34 760.92L1247.13 760.97L1248.92 761.02L1250.71 761.07L1252.5 761.12" stroke="#0096f2" stroke-width="1.2" fill="none" stroke-linejoin="round"/><path d="M717.5 803.78L719.29 803.78L721.08 803.78L722.87 803.78L724.66 803.78L726.45 803.78L728.24 803.78L730.03 803.78L731.81 803.78L733.6 803.77L735.39 803.77L737.18 803.77L738.97 803.77L740.76 803.77L742.55 803.77L744.34 803.76L746.13 803.76L747.92 803.76L749.71 803.76L751.5 803.75L753.29 803.75L755.08 803.75L756.86 803.74L758.65 803.74L760.44 803.74L762.23 803.73L764.02 803.73L765.81 803.73L767.6 803.72L769.39 803.72L771.18 803.71L772.97 803.71L774.76 803.7L776.55 803.7L778.34 803.7L780.13 803.69L781.91 803.69L783.7 803.68L785.49 803.68L787.28 803.67L789.07 803.66L790.86 803.66L792.65 803.65L794.44 803.65L796.23 803.64L798.02 803.64L799.81 803.63L801.6 803.62L803.39 803.62L805.18 803.61L806.96 803.6L808.75 803.6L810.54 803.59L812.33 803.58L814.12 803.58L815.91 803.57L817.7 803.56L819.49 803.55L821.28 803.55L823.07 803.54L824.86 803.53L826.65 803.52L828.44 803.51L830.23 803.51L832.02 803.5L833.8 803.49L835.59 803.48L837.38 803.47L839.17 803.47L840.96 803.46L842.75 803.45L844.54 803.44L846.33 803.43L848.12 803.41L849.91 803.4L851.7 803.38L853.49 803.37L855.28 803.35L857.07 803.33L858.85 803.31L860.64 803.29L862.43 803.26L864.22 803.24L866.01 803.21L867.8 803.19L869.59 803.16L871.38 803.13L873.17 803.1L874.96 803.07L876.75 803.03L878.54 803L880.33 802.97L882.12 802.93L883.9 802.89L885.69 802.85L887.48 802.81L889.27 802.77L891.06 802.73L892.85 802.69L894.64 802.64L896.43 802.6L898.22 802.55L900.01 802.5L901.8 802.46L903.59 802.41L905.38 802.36L907.17 802.31L908.95 802.25L910.74 802.2L912.53 802.15L914.32 802.09L916.11 802.04L917.9 801.98L919.69 801.92L921.48 801.86L923.27 801.8L925.06 801.74L926.85 801.68L928.64 801.62L930.43 801.56L932.22 801.49L934.01 801.43L935.79 801.36L937.58 801.3L939.37 801.23L941.16 801.15L942.95 801.08L944.74 800.99L946.53 800.89L948.32 800.79L950.11 800.68L951.9 800.56L953.69 800.43L955.48 800.3L957.27 800.16L959.06 800.01L960.84 799.86L962.63 799.71L964.42 799.55L966.21 799.38L968 799.21L969.79 799.04L971.58 798.86L973.37 798.68L975.16 798.49L976.95 798.31L978.74 798.12L980.53 797.93L982.32 797.75L984.11 797.56L985.89 797.37L987.68 797.17L989.47 796.96L991.26 796.74L993.05 796.5L994.84 796.25L996.63 795.98L998.42 795.69L1000.21 795.38L1002 795.06L1003.79 794.72L1005.58 794.37L1007.37 794.01L1009.16 793.63L1010.94 793.26L1012.73 792.88L1014.52 792.51L1016.31 792.14L1018.1 791.79L1019.89 791.45L1021.68 791.13L1023.47 790.84L1025.26 790.56L1027.05 790.3L1028.84 790.07L1030.63 789.83L1032.42 789.6L1034.21 789.35L1035.99 789.07L1037.78 788.77L1039.57 788.44L1041.36 788.09L1043.15 787.72L1044.94 787.33L1046.73 786.92L1048.52 786.48L1050.31 785.98L1052.1 785.4L1053.89 784.74L1055.68 783.99L1057.47 783.15L1059.26 782.23L1061.05 781.23L1062.83 780.16L1064.62 779L1066.41 777.73L1068.2 776.32L1069.99 774.73L1071.78 772.94L1073.57 770.96L1075.36 768.86L1077.15 766.72L1078.94 764.61L1080.73 762.6L1082.52 760.74L1084.31 759.02L1086.1 757.42L1087.88 755.92L1089.67 754.51L1091.46 753.19L1093.25 751.95L1095.04 750.81L1096.83 749.79L1098.62 748.9L1100.41 748.15L1102.2 747.54L1103.99 747.07L1105.78 746.74L1107.57 746.56L1109.36 746.51L1111.15 746.59L1112.93 746.75L1114.72 746.99L1116.51 747.27L1118.3 747.57L1120.09 747.9L1121.88 748.23L1123.67 748.59L1125.46 748.95L1127.25 749.33L1129.04 749.71L1130.83 750.1L1132.62 750.49L1134.41 750.89L1136.2 751.29L1137.98 751.69L1139.77 752.08L1141.56 752.47L1143.35 752.85L1145.14 753.21L1146.93 753.56L1148.72 753.89L1150.51 754.2L1152.3 754.49L1154.09 754.75L1155.88 754.99L1157.67 755.22L1159.46 755.42L1161.25 755.62L1163.04 755.81L1164.82 756L1166.61 756.18L1168.4 756.36L1170.19 756.53L1171.98 756.7L1173.77 756.86L1175.56 757.02L1177.35 757.17L1179.14 757.32L1180.93 757.46L1182.72 757.6L1184.51 757.73L1186.3 757.86L1188.09 757.99L1189.87 758.12L1191.66 758.24L1193.45 758.35L1195.24 758.47L1197.03 758.58L1198.82 758.69L1200.61 758.8L1202.4 758.91L1204.19 759.02L1205.98 759.12L1207.77 759.23L1209.56 759.33L1211.35 759.44L1213.14 759.54L1214.92 759.64L1216.71 759.73L1218.5 759.83L1220.29 759.92L1222.08 760.02L1223.87 760.1L1225.66 760.19L1227.45 760.28L1229.24 760.36L1231.03 760.44L1232.82 760.52L1234.61 760.6L1236.4 760.67L1238.19 760.74L1239.97 760.81L1241.76 760.87L1243.55 760.93L1245.34 760.99L1247.13 761.04L1248.92 761.09L1250.71 761.14L1252.5 761.19" stroke="#00d5f2" stroke-width="1.2" fill="none" stroke-linejoin="round"/><path d="M717.5 803.8L719.29 803.8L721.08 803.8L722.87 803.8L724.66 803.8L726.45 803.8L728.24 803.8L730.03 803.79L731.81 803.79L733.6 803.79L735.39 803.79L737.18 803.79L738.97 803.79L740.76 803.79L742.55 803.78L744.34 803.78L746.13 803.78L747.92 803.78L749.71 803.77L751.5 803.77L753.29 803.77L755.08 803.77L756.86 803.76L758.65 803.76L760.44 803.76L762.23 803.75L764.02 803.75L765.81 803.74L767.6 803.74L769.39 803.74L771.18 803.73L772.97 803.73L774.76 803.72L776.55 803.72L778.34 803.71L780.13 803.71L781.91 803.7L783.7 803.7L785.49 803.69L787.28 803.69L789.07 803.68L790.86 803.68L792.65 803.67L794.44 803.67L796.23 803.66L798.02 803.65L799.81 803.65L801.6 803.64L803.39 803.63L805.18 803.63L806.96 803.62L808.75 803.61L810.54 803.61L812.33 803.6L814.12 803.59L815.91 803.59L817.7 803.58L819.49 803.57L821.28 803.56L823.07 803.56L824.86 803.55L826.65 803.54L828.44 803.53L830.23 803.52L832.02 803.52L833.8 803.51L835.59 803.5L837.38 803.49L839.17 803.48L840.96 803.48L842.75 803.47L844.54 803.46L846.33 803.44L848.12 803.43L849.91 803.42L851.7 803.4L853.49 803.38L855.28 803.37L857.07 803.35L858.85 803.33L860.64 803.3L862.43 803.28L864.22 803.26L866.01 803.23L867.8 803.2L869.59 803.17L871.38 803.14L873.17 803.11L874.96 803.08L876.75 803.05L878.54 803.01L880.33 802.98L882.12 802.94L883.9 802.9L885.69 802.86L887.48 802.82L889.27 802.78L891.06 802.74L892.85 802.7L894.64 802.65L896.43 802.61L898.22 802.56L900.01 802.51L901.8 802.47L903.59 802.42L905.38 802.37L907.17 802.31L908.95 802.26L910.74 802.21L912.53 802.15L914.32 802.1L916.11 802.04L917.9 801.99L919.69 801.93L921.48 801.87L923.27 801.81L925.06 801.75L926.85 801.69L928.64 801.63L930.43 801.56L932.22 801.5L934.01 801.44L935.79 801.37L937.58 801.31L939.37 801.24L941.16 801.17L942.95 801.09L944.74 801L946.53 800.91L948.32 800.8L950.11 800.69L951.9 800.57L953.69 800.45L955.48 800.32L957.27 800.18L959.06 800.04L960.84 799.89L962.63 799.74L964.42 799.58L966.21 799.42L968 799.26L969.79 799.09L971.58 798.92L973.37 798.74L975.16 798.56L976.95 798.38L978.74 798.2L980.53 798.03L982.32 797.85L984.11 797.67L985.89 797.49L987.68 797.3L989.47 797.11L991.26 796.9L993.05 796.68L994.84 796.44L996.63 796.19L998.42 795.92L1000.21 795.64L1002 795.34L1003.79 795.03L1005.58 794.7L1007.37 794.37L1009.16 794.02L1010.94 793.67L1012.73 793.32L1014.52 792.98L1016.31 792.65L1018.1 792.33L1019.89 792.03L1021.68 791.75L1023.47 791.49L1025.26 791.26L1027.05 791.06L1028.84 790.88L1030.63 790.71L1032.42 790.54L1034.21 790.36L1035.99 790.14L1037.78 789.9L1039.57 789.64L1041.36 789.36L1043.15 789.05L1044.94 788.74L1046.73 788.4L1048.52 788.02L1050.31 787.58L1052.1 787.06L1053.89 786.45L1055.68 785.74L1057.47 784.93L1059.26 784.03L1061.05 783.05L1062.83 781.99L1064.62 780.85L1066.41 779.58L1068.2 778.16L1069.99 776.57L1071.78 774.76L1073.57 772.76L1075.36 770.62L1077.15 768.44L1078.94 766.27L1080.73 764.21L1082.52 762.3L1084.31 760.51L1086.1 758.84L1087.88 757.27L1089.67 755.78L1091.46 754.36L1093.25 753.03L1095.04 751.81L1096.83 750.7L1098.62 749.73L1100.41 748.9L1102.2 748.22L1103.99 747.69L1105.78 747.31L1107.57 747.08L1109.36 746.99L1111.15 747.03L1112.93 747.16L1114.72 747.37L1116.51 747.63L1118.3 747.91L1120.09 748.21L1121.88 748.53L1123.67 748.87L1125.46 749.22L1127.25 749.59L1129.04 749.96L1130.83 750.35L1132.62 750.73L1134.41 751.12L1136.2 751.51L1137.98 751.9L1139.77 752.28L1141.56 752.65L1143.35 753.01L1145.14 753.36L1146.93 753.7L1148.72 754.02L1150.51 754.32L1152.3 754.6L1154.09 754.85L1155.88 755.09L1157.67 755.3L1159.46 755.51L1161.25 755.7L1163.04 755.89L1164.82 756.08L1166.61 756.26L1168.4 756.44L1170.19 756.61L1171.98 756.78L1173.77 756.94L1175.56 757.09L1177.35 757.24L1179.14 757.39L1180.93 757.53L1182.72 757.67L1184.51 757.81L1186.3 757.94L1188.09 758.06L1189.87 758.19L1191.66 758.31L1193.45 758.43L1195.24 758.54L1197.03 758.65L1198.82 758.76L1200.61 758.87L1202.4 758.98L1204.19 759.09L1205.98 759.2L1207.77 759.3L1209.56 759.4L1211.35 759.51L1213.14 759.61L1214.92 759.71L1216.71 759.8L1218.5 759.9L1220.29 759.99L1222.08 760.08L1223.87 760.17L1225.66 760.26L1227.45 760.35L1229.24 760.43L1231.03 760.51L1232.82 760.59L1234.61 760.66L1236.4 760.74L1238.19 760.81L1239.97 760.88L1241.76 760.94L1243.55 761L1245.34 761.06L1247.13 761.11L1248.92 761.16L1250.71 761.21L1252.5 761.26" stroke="#00f2d0" stroke-width="1.2" fill="none" stroke-linejoin="round"/><path d="M717.5 803.82L719.29 803.82L721.08 803.82L722.87 803.82L724.66 803.82L726.45 803.81L728.24 803.81L730.03 803.81L731.81 803.81L733.6 803.81L735.39 803.81L737.18 803.81L738.97 803.81L740.76 803.8L742.55 803.8L744.34 803.8L746.13 803.8L747.92 803.79L749.71 803.79L751.5 803.79L753.29 803.79L755.08 803.78L756.86 803.78L758.65 803.78L760.44 803.77L762.23 803.77L764.02 803.77L765.81 803.76L767.6 803.76L769.39 803.75L771.18 803.75L772.97 803.75L774.76 803.74L776.55 803.74L778.34 803.73L780.13 803.73L781.91 803.72L783.7 803.72L785.49 803.71L787.28 803.71L789.07 803.7L790.86 803.7L792.65 803.69L794.44 803.68L796.23 803.68L798.02 803.67L799.81 803.67L801.6 803.66L803.39 803.65L805.18 803.65L806.96 803.64L808.75 803.63L810.54 803.63L812.33 803.62L814.12 803.61L815.91 803.6L817.7 803.6L819.49 803.59L821.28 803.58L823.07 803.57L824.86 803.57L826.65 803.56L828.44 803.55L830.23 803.54L832.02 803.53L833.8 803.53L835.59 803.52L837.38 803.51L839.17 803.5L840.96 803.49L842.75 803.48L844.54 803.47L846.33 803.46L848.12 803.45L849.91 803.43L851.7 803.42L853.49 803.4L855.28 803.38L857.07 803.36L858.85 803.34L860.64 803.32L862.43 803.3L864.22 803.27L866.01 803.25L867.8 803.22L869.59 803.19L871.38 803.16L873.17 803.13L874.96 803.1L876.75 803.06L878.54 803.03L880.33 802.99L882.12 802.95L883.9 802.92L885.69 802.88L887.48 802.84L889.27 802.79L891.06 802.75L892.85 802.71L894.64 802.66L896.43 802.62L898.22 802.57L900.01 802.52L901.8 802.47L903.59 802.43L905.38 802.37L907.17 802.32L908.95 802.27L910.74 802.22L912.53 802.16L914.32 802.11L916.11 802.05L917.9 801.99L919.69 801.94L921.48 801.88L923.27 801.82L925.06 801.76L926.85 801.7L928.64 801.64L930.43 801.57L932.22 801.51L934.01 801.45L935.79 801.38L937.58 801.32L939.37 801.25L941.16 801.18L942.95 801.1L944.74 801.01L946.53 800.92L948.32 800.82L950.11 800.71L951.9 800.59L953.69 800.47L955.48 800.34L957.27 800.2L959.06 800.06L960.84 799.92L962.63 799.77L964.42 799.62L966.21 799.46L968 799.3L969.79 799.14L971.58 798.97L973.37 798.8L975.16 798.63L976.95 798.46L978.74 798.29L980.53 798.12L982.32 797.95L984.11 797.78L985.89 797.61L987.68 797.44L989.47 797.25L991.26 797.06L993.05 796.85L994.84 796.64L996.63 796.4L998.42 796.16L1000.21 795.9L1002 795.62L1003.79 795.33L1005.58 795.03L1007.37 794.72L1009.16 794.41L1010.94 794.09L1012.73 793.77L1014.52 793.45L1016.31 793.15L1018.1 792.86L1019.89 792.6L1021.68 792.36L1023.47 792.14L1025.26 791.96L1027.05 791.82L1028.84 791.7L1030.63 791.59L1032.42 791.48L1034.21 791.36L1035.99 791.22L1037.78 791.04L1039.57 790.84L1041.36 790.62L1043.15 790.39L1044.94 790.14L1046.73 789.87L1048.52 789.55L1050.31 789.18L1052.1 788.72L1053.89 788.16L1055.68 787.49L1057.47 786.71L1059.26 785.84L1061.05 784.88L1062.83 783.83L1064.62 782.69L1066.41 781.43L1068.2 780.01L1069.99 778.4L1071.78 776.58L1073.57 774.55L1075.36 772.38L1077.15 770.15L1078.94 767.94L1080.73 765.83L1082.52 763.85L1084.31 762L1086.1 760.26L1087.88 758.62L1089.67 757.04L1091.46 755.54L1093.25 754.12L1095.04 752.8L1096.83 751.6L1098.62 750.55L1100.41 749.65L1102.2 748.9L1103.99 748.31L1105.78 747.88L1107.57 747.6L1109.36 747.47L1111.15 747.47L1112.93 747.57L1114.72 747.75L1116.51 747.98L1118.3 748.24L1120.09 748.52L1121.88 748.83L1123.67 749.15L1125.46 749.5L1127.25 749.85L1129.04 750.22L1130.83 750.6L1132.62 750.98L1134.41 751.36L1136.2 751.73L1137.98 752.1L1139.77 752.47L1141.56 752.83L1143.35 753.18L1145.14 753.51L1146.93 753.83L1148.72 754.14L1150.51 754.43L1152.3 754.7L1154.09 754.95L1155.88 755.18L1157.67 755.39L1159.46 755.59L1161.25 755.79L1163.04 755.97L1164.82 756.16L1166.61 756.34L1168.4 756.51L1170.19 756.68L1171.98 756.85L1173.77 757.01L1175.56 757.17L1177.35 757.32L1179.14 757.46L1180.93 757.61L1182.72 757.74L1184.51 757.88L1186.3 758.01L1188.09 758.14L1189.87 758.26L1191.66 758.38L1193.45 758.5L1195.24 758.61L1197.03 758.73L1198.82 758.84L1200.61 758.95L1202.4 759.06L1204.19 759.16L1205.98 759.27L1207.77 759.37L1209.56 759.48L1211.35 759.58L1213.14 759.68L1214.92 759.78L1216.71 759.87L1218.5 759.97L1220.29 760.06L1222.08 760.15L1223.87 760.24L1225.66 760.33L1227.45 760.42L1229.24 760.5L1231.03 760.58L1232.82 760.66L1234.61 760.73L1236.4 760.81L1238.19 760.88L1239.97 760.94L1241.76 761.01L1243.55 761.07L1245.34 761.12L1247.13 761.18L1248.92 761.23L1250.71 761.28L1252.5 761.33" stroke="#00f291" stroke-width="1.2" fill="none" stroke-linejoin="round"/><path d="M717.5 803.83L719.29 803.83L721.08 803.83L722.87 803.83L724.66 803.83L726.45 803.83L728.24 803.83L730.03 803.83L731.81 803.83L733.6 803.83L735.39 803.83L737.18 803.83L738.97 803.82L740.76 803.82L742.55 803.82L744.34 803.82L746.13 803.82L747.92 803.81L749.71 803.81L751.5 803.81L753.29 803.8L755.08 803.8L756.86 803.8L758.65 803.8L760.44 803.79L762.23 803.79L764.02 803.78L765.81 803.78L767.6 803.78L769.39 803.77L771.18 803.77L772.97 803.76L774.76 803.76L776.55 803.76L778.34 803.75L780.13 803.75L781.91 803.74L783.7 803.74L785.49 803.73L787.28 803.72L789.07 803.72L790.86 803.71L792.65 803.71L794.44 803.7L796.23 803.7L798.02 803.69L799.81 803.68L801.6 803.68L803.39 803.67L805.18 803.66L806.96 803.66L808.75 803.65L810.54 803.64L812.33 803.64L814.12 803.63L815.91 803.62L817.7 803.62L819.49 803.61L821.28 803.6L823.07 803.59L824.86 803.59L826.65 803.58L828.44 803.57L830.23 803.56L832.02 803.55L833.8 803.54L835.59 803.54L837.38 803.53L839.17 803.52L840.96 803.51L842.75 803.5L844.54 803.49L846.33 803.48L848.12 803.47L849.91 803.45L851.7 803.44L853.49 803.42L855.28 803.4L857.07 803.38L858.85 803.36L860.64 803.34L862.43 803.31L864.22 803.29L866.01 803.26L867.8 803.23L869.59 803.2L871.38 803.17L873.17 803.14L874.96 803.11L876.75 803.08L878.54 803.04L880.33 803L882.12 802.97L883.9 802.93L885.69 802.89L887.48 802.85L889.27 802.81L891.06 802.76L892.85 802.72L894.64 802.67L896.43 802.63L898.22 802.58L900.01 802.53L901.8 802.48L903.59 802.43L905.38 802.38L907.17 802.33L908.95 802.28L910.74 802.23L912.53 802.17L914.32 802.12L916.11 802.06L917.9 802L919.69 801.95L921.48 801.89L923.27 801.83L925.06 801.77L926.85 801.71L928.64 801.64L930.43 801.58L932.22 801.52L934.01 801.46L935.79 801.39L937.58 801.33L939.37 801.26L941.16 801.19L942.95 801.11L944.74 801.03L946.53 800.93L948.32 800.83L950.11 800.72L951.9 800.61L953.69 800.49L955.48 800.36L957.27 800.23L959.06 800.09L960.84 799.95L962.63 799.8L964.42 799.66L966.21 799.5L968 799.35L969.79 799.19L971.58 799.03L973.37 798.87L975.16 798.7L976.95 798.54L978.74 798.37L980.53 798.21L982.32 798.05L984.11 797.89L985.89 797.73L987.68 797.57L989.47 797.4L991.26 797.22L993.05 797.03L994.84 796.83L996.63 796.62L998.42 796.39L1000.21 796.15L1002 795.9L1003.79 795.64L1005.58 795.37L1007.37 795.08L1009.16 794.79L1010.94 794.5L1012.73 794.21L1014.52 793.93L1016.31 793.65L1018.1 793.4L1019.89 793.17L1021.68 792.97L1023.47 792.8L1025.26 792.67L1027.05 792.57L1028.84 792.51L1030.63 792.47L1032.42 792.43L1034.21 792.37L1035.99 792.29L1037.78 792.18L1039.57 792.05L1041.36 791.89L1043.15 791.72L1044.94 791.54L1046.73 791.34L1048.52 791.09L1050.31 790.78L1052.1 790.38L1053.89 789.87L1055.68 789.23L1057.47 788.49L1059.26 787.64L1061.05 786.7L1062.83 785.67L1064.62 784.54L1066.41 783.28L1068.2 781.86L1069.99 780.24L1071.78 778.4L1073.57 776.34L1075.36 774.13L1077.15 771.87L1078.94 769.61L1080.73 767.44L1082.52 765.41L1084.31 763.5L1086.1 761.69L1087.88 759.97L1089.67 758.31L1091.46 756.72L1093.25 755.2L1095.04 753.79L1096.83 752.51L1098.62 751.37L1100.41 750.39L1102.2 749.58L1103.99 748.93L1105.78 748.45L1107.57 748.12L1109.36 747.95L1111.15 747.91L1112.93 747.98L1114.72 748.13L1116.51 748.34L1118.3 748.57L1120.09 748.84L1121.88 749.13L1123.67 749.44L1125.46 749.77L1127.25 750.12L1129.04 750.48L1130.83 750.84L1132.62 751.22L1134.41 751.59L1136.2 751.95L1137.98 752.31L1139.77 752.66L1141.56 753.01L1143.35 753.34L1145.14 753.66L1146.93 753.97L1148.72 754.26L1150.51 754.54L1152.3 754.8L1154.09 755.05L1155.88 755.27L1157.67 755.48L1159.46 755.68L1161.25 755.87L1163.04 756.05L1164.82 756.24L1166.61 756.42L1168.4 756.59L1170.19 756.76L1171.98 756.92L1173.77 757.08L1175.56 757.24L1177.35 757.39L1179.14 757.54L1180.93 757.68L1182.72 757.82L1184.51 757.95L1186.3 758.08L1188.09 758.21L1189.87 758.34L1191.66 758.46L1193.45 758.57L1195.24 758.69L1197.03 758.8L1198.82 758.91L1200.61 759.02L1202.4 759.13L1204.19 759.24L1205.98 759.34L1207.77 759.44L1209.56 759.55L1211.35 759.65L1213.14 759.75L1214.92 759.85L1216.71 759.95L1218.5 760.04L1220.29 760.13L1222.08 760.22L1223.87 760.31L1225.66 760.4L1227.45 760.49L1229.24 760.57L1231.03 760.65L1232.82 760.73L1234.61 760.8L1236.4 760.87L1238.19 760.95L1239.97 761.01L1241.76 761.08L1243.55 761.14L1245.34 761.19L1247.13 761.25L1248.92 761.3L1250.71 761.35L1252.5 761.4" stroke="#00f252" stroke-width="1.2" fill="none" stroke-linejoin="round"/><path d="M717.5 803.85L719.29 803.85L721.08 803.85L722.87 803.85L724.66 803.85L726.45 803.85L728.24 803.85L730.03 803.85L731.81 803.85L733.6 803.85L735.39 803.85L737.18 803.84L738.97 803.84L740.76 803.84L742.55 803.84L744.34 803.84L746.13 803.83L747.92 803.83L749.71 803.83L751.5 803.83L753.29 803.82L755.08 803.82L756.86 803.82L758.65 803.81L760.44 803.81L762.23 803.81L764.02 803.8L765.81 803.8L767.6 803.8L769.39 803.79L771.18 803.79L772.97 803.78L774.76 803.78L776.55 803.77L778.34 803.77L780.13 803.76L781.91 803.76L783.7 803.75L785.49 803.75L787.28 803.74L789.07 803.74L790.86 803.73L792.65 803.73L794.44 803.72L796.23 803.71L798.02 803.71L799.81 803.7L801.6 803.7L803.39 803.69L805.18 803.68L806.96 803.68L808.75 803.67L810.54 803.66L812.33 803.66L814.12 803.65L815.91 803.64L817.7 803.63L819.49 803.63L821.28 803.62L823.07 803.61L824.86 803.6L826.65 803.6L828.44 803.59L830.23 803.58L832.02 803.57L833.8 803.56L835.59 803.55L837.38 803.55L839.17 803.54L840.96 803.53L842.75 803.52L844.54 803.51L846.33 803.5L848.12 803.49L849.91 803.47L851.7 803.46L853.49 803.44L855.28 803.42L857.07 803.4L858.85 803.38L860.64 803.35L862.43 803.33L864.22 803.3L866.01 803.28L867.8 803.25L869.59 803.22L871.38 803.19L873.17 803.16L874.96 803.12L876.75 803.09L878.54 803.05L880.33 803.02L882.12 802.98L883.9 802.94L885.69 802.9L887.48 802.86L889.27 802.82L891.06 802.77L892.85 802.73L894.64 802.68L896.43 802.64L898.22 802.59L900.01 802.54L901.8 802.49L903.59 802.44L905.38 802.39L907.17 802.34L908.95 802.29L910.74 802.23L912.53 802.18L914.32 802.12L916.11 802.07L917.9 802.01L919.69 801.95L921.48 801.89L923.27 801.84L925.06 801.78L926.85 801.71L928.64 801.65L930.43 801.59L932.22 801.53L934.01 801.47L935.79 801.4L937.58 801.34L939.37 801.27L941.16 801.2L942.95 801.12L944.74 801.04L946.53 800.95L948.32 800.85L950.11 800.74L951.9 800.63L953.69 800.51L955.48 800.38L957.27 800.25L959.06 800.12L960.84 799.98L962.63 799.84L964.42 799.69L966.21 799.54L968 799.39L969.79 799.24L971.58 799.08L973.37 798.93L975.16 798.77L976.95 798.61L978.74 798.46L980.53 798.3L982.32 798.15L984.11 798.01L985.89 797.86L987.68 797.7L989.47 797.55L991.26 797.38L993.05 797.21L994.84 797.02L996.63 796.83L998.42 796.63L1000.21 796.41L1002 796.18L1003.79 795.95L1005.58 795.7L1007.37 795.44L1009.16 795.18L1010.94 794.92L1012.73 794.65L1014.52 794.4L1016.31 794.16L1018.1 793.94L1019.89 793.74L1021.68 793.58L1023.47 793.45L1025.26 793.37L1027.05 793.33L1028.84 793.33L1030.63 793.35L1032.42 793.37L1034.21 793.38L1035.99 793.37L1037.78 793.32L1039.57 793.25L1041.36 793.16L1043.15 793.06L1044.94 792.94L1046.73 792.81L1048.52 792.63L1050.31 792.38L1052.1 792.04L1053.89 791.57L1055.68 790.98L1057.47 790.27L1059.26 789.45L1061.05 788.52L1062.83 787.51L1064.62 786.38L1066.41 785.13L1068.2 783.7L1069.99 782.07L1071.78 780.21L1073.57 778.13L1075.36 775.89L1077.15 773.58L1078.94 771.28L1080.73 769.06L1082.52 766.97L1084.31 764.99L1086.1 763.11L1087.88 761.31L1089.67 759.58L1091.46 757.89L1093.25 756.29L1095.04 754.79L1096.83 753.41L1098.62 752.19L1100.41 751.14L1102.2 750.26L1103.99 749.55L1105.78 749.01L1107.57 748.64L1109.36 748.43L1111.15 748.36L1112.93 748.39L1114.72 748.51L1116.51 748.69L1118.3 748.91L1120.09 749.15L1121.88 749.43L1123.67 749.72L1125.46 750.04L1127.25 750.38L1129.04 750.73L1130.83 751.09L1132.62 751.46L1134.41 751.82L1136.2 752.17L1137.98 752.52L1139.77 752.86L1141.56 753.19L1143.35 753.5L1145.14 753.81L1146.93 754.11L1148.72 754.39L1150.51 754.66L1152.3 754.91L1154.09 755.14L1155.88 755.36L1157.67 755.57L1159.46 755.76L1161.25 755.95L1163.04 756.14L1164.82 756.32L1166.61 756.49L1168.4 756.67L1170.19 756.84L1171.98 757L1173.77 757.16L1175.56 757.31L1177.35 757.46L1179.14 757.61L1180.93 757.75L1182.72 757.89L1184.51 758.03L1186.3 758.16L1188.09 758.29L1189.87 758.41L1191.66 758.53L1193.45 758.65L1195.24 758.76L1197.03 758.87L1198.82 758.98L1200.61 759.09L1202.4 759.2L1204.19 759.31L1205.98 759.41L1207.77 759.52L1209.56 759.62L1211.35 759.72L1213.14 759.82L1214.92 759.92L1216.71 760.02L1218.5 760.11L1220.29 760.2L1222.08 760.29L1223.87 760.38L1225.66 760.47L1227.45 760.55L1229.24 760.64L1231.03 760.72L1232.82 760.79L1234.61 760.87L1236.4 760.94L1238.19 761.01L1239.97 761.08L1241.76 761.15L1243.55 761.21L1245.34 761.26L1247.13 761.32L1248.92 761.37L1250.71 761.42L1252.5 761.47" stroke="#00f213" stroke-width="1.2" fill="none" stroke-linejoin="round"/><path d="M717.5 803.87L719.29 803.87L721.08 803.87L722.87 803.87L724.66 803.87L726.45 803.87L728.24 803.87L730.03 803.87L731.81 803.87L733.6 803.87L735.39 803.86L737.18 803.86L738.97 803.86L740.76 803.86L742.55 803.86L744.34 803.85L746.13 803.85L747.92 803.85L749.71 803.85L751.5 803.84L753.29 803.84L755.08 803.84L756.86 803.84L758.65 803.83L760.44 803.83L762.23 803.83L764.02 803.82L765.81 803.82L767.6 803.81L769.39 803.81L771.18 803.81L772.97 803.8L774.76 803.8L776.55 803.79L778.34 803.79L780.13 803.78L781.91 803.78L783.7 803.77L785.49 803.77L787.28 803.76L789.07 803.76L790.86 803.75L792.65 803.74L794.44 803.74L796.23 803.73L798.02 803.73L799.81 803.72L801.6 803.71L803.39 803.71L805.18 803.7L806.96 803.69L808.75 803.69L810.54 803.68L812.33 803.67L814.12 803.67L815.91 803.66L817.7 803.65L819.49 803.64L821.28 803.64L823.07 803.63L824.86 803.62L826.65 803.61L828.44 803.61L830.23 803.6L832.02 803.59L833.8 803.58L835.59 803.57L837.38 803.57L839.17 803.56L840.96 803.55L842.75 803.54L844.54 803.53L846.33 803.52L848.12 803.5L849.91 803.49L851.7 803.47L853.49 803.46L855.28 803.44L857.07 803.42L858.85 803.39L860.64 803.37L862.43 803.35L864.22 803.32L866.01 803.29L867.8 803.26L869.59 803.24L871.38 803.2L873.17 803.17L874.96 803.14L876.75 803.1L878.54 803.07L880.33 803.03L882.12 802.99L883.9 802.95L885.69 802.91L887.48 802.87L889.27 802.83L891.06 802.79L892.85 802.74L894.64 802.69L896.43 802.65L898.22 802.6L900.01 802.55L901.8 802.5L903.59 802.45L905.38 802.4L907.17 802.35L908.95 802.3L910.74 802.24L912.53 802.19L914.32 802.13L916.11 802.08L917.9 802.02L919.69 801.96L921.48 801.9L923.27 801.84L925.06 801.78L926.85 801.72L928.64 801.66L930.43 801.6L932.22 801.54L934.01 801.48L935.79 801.41L937.58 801.35L939.37 801.28L941.16 801.21L942.95 801.14L944.74 801.05L946.53 800.96L948.32 800.86L950.11 800.76L951.9 800.64L953.69 800.53L955.48 800.4L957.27 800.27L959.06 800.14L960.84 800.01L962.63 799.87L964.42 799.73L966.21 799.58L968 799.44L969.79 799.29L971.58 799.14L973.37 798.99L975.16 798.84L976.95 798.69L978.74 798.54L980.53 798.4L982.32 798.26L984.11 798.12L985.89 797.98L987.68 797.84L989.47 797.69L991.26 797.54L993.05 797.38L994.84 797.22L996.63 797.04L998.42 796.86L1000.21 796.67L1002 796.46L1003.79 796.25L1005.58 796.03L1007.37 795.8L1009.16 795.57L1010.94 795.33L1012.73 795.1L1014.52 794.87L1016.31 794.66L1018.1 794.48L1019.89 794.32L1021.68 794.19L1023.47 794.11L1025.26 794.07L1027.05 794.08L1028.84 794.14L1030.63 794.22L1032.42 794.31L1034.21 794.39L1035.99 794.44L1037.78 794.46L1039.57 794.45L1041.36 794.43L1043.15 794.39L1044.94 794.35L1046.73 794.28L1048.52 794.17L1050.31 793.98L1052.1 793.7L1053.89 793.28L1055.68 792.73L1057.47 792.05L1059.26 791.25L1061.05 790.35L1062.83 789.34L1064.62 788.23L1066.41 786.98L1068.2 785.55L1069.99 783.91L1071.78 782.03L1073.57 779.92L1075.36 777.65L1077.15 775.3L1078.94 772.95L1080.73 770.68L1082.52 768.53L1084.31 766.49L1086.1 764.54L1087.88 762.66L1089.67 760.84L1091.46 759.07L1093.25 757.38L1095.04 755.78L1096.83 754.32L1098.62 753.01L1100.41 751.89L1102.2 750.94L1103.99 750.18L1105.78 749.58L1107.57 749.16L1109.36 748.91L1111.15 748.8L1112.93 748.8L1114.72 748.89L1116.51 749.05L1118.3 749.24L1120.09 749.47L1121.88 749.72L1123.67 750.01L1125.46 750.31L1127.25 750.64L1129.04 750.99L1130.83 751.34L1132.62 751.7L1134.41 752.05L1136.2 752.4L1137.98 752.73L1139.77 753.05L1141.56 753.36L1143.35 753.67L1145.14 753.96L1146.93 754.24L1148.72 754.51L1150.51 754.77L1152.3 755.01L1154.09 755.24L1155.88 755.45L1157.67 755.65L1159.46 755.85L1161.25 756.03L1163.04 756.22L1164.82 756.4L1166.61 756.57L1168.4 756.74L1170.19 756.91L1171.98 757.07L1173.77 757.23L1175.56 757.39L1177.35 757.54L1179.14 757.68L1180.93 757.83L1182.72 757.96L1184.51 758.1L1186.3 758.23L1188.09 758.36L1189.87 758.48L1191.66 758.6L1193.45 758.72L1195.24 758.83L1197.03 758.95L1198.82 759.06L1200.61 759.17L1202.4 759.27L1204.19 759.38L1205.98 759.48L1207.77 759.59L1209.56 759.69L1211.35 759.79L1213.14 759.89L1214.92 759.99L1216.71 760.09L1218.5 760.18L1220.29 760.27L1222.08 760.36L1223.87 760.45L1225.66 760.54L1227.45 760.62L1229.24 760.71L1231.03 760.79L1232.82 760.86L1234.61 760.94L1236.4 761.01L1238.19 761.08L1239.97 761.15L1241.76 761.21L1243.55 761.27L1245.34 761.33L1247.13 761.39L1248.92 761.44L1250.71 761.49L1252.5 761.54" stroke="#2bf200" stroke-width="1.2" fill="none" stroke-linejoin="round"/><path d="M717.5 803.89L719.29 803.89L721.08 803.89L722.87 803.89L724.66 803.89L726.45 803.89L728.24 803.89L730.03 803.89L731.81 803.89L733.6 803.88L735.39 803.88L737.18 803.88L738.97 803.88L740.76 803.88L742.55 803.88L744.34 803.87L746.13 803.87L747.92 803.87L749.71 803.87L751.5 803.86L753.29 803.86L755.08 803.86L756.86 803.85L758.65 803.85L760.44 803.85L762.23 803.84L764.02 803.84L765.81 803.84L767.6 803.83L769.39 803.83L771.18 803.82L772.97 803.82L774.76 803.81L776.55 803.81L778.34 803.81L780.13 803.8L781.91 803.8L783.7 803.79L785.49 803.79L787.28 803.78L789.07 803.77L790.86 803.77L792.65 803.76L794.44 803.76L796.23 803.75L798.02 803.75L799.81 803.74L801.6 803.73L803.39 803.73L805.18 803.72L806.96 803.71L808.75 803.71L810.54 803.7L812.33 803.69L814.12 803.69L815.91 803.68L817.7 803.67L819.49 803.66L821.28 803.66L823.07 803.65L824.86 803.64L826.65 803.63L828.44 803.62L830.23 803.62L832.02 803.61L833.8 803.6L835.59 803.59L837.38 803.58L839.17 803.58L840.96 803.57L842.75 803.56L844.54 803.55L846.33 803.53L848.12 803.52L849.91 803.51L851.7 803.49L853.49 803.47L855.28 803.45L857.07 803.43L858.85 803.41L860.64 803.39L862.43 803.36L864.22 803.34L866.01 803.31L867.8 803.28L869.59 803.25L871.38 803.22L873.17 803.19L874.96 803.15L876.75 803.12L878.54 803.08L880.33 803.04L882.12 803.01L883.9 802.97L885.69 802.92L887.48 802.88L889.27 802.84L891.06 802.8L892.85 802.75L894.64 802.71L896.43 802.66L898.22 802.61L900.01 802.56L901.8 802.51L903.59 802.46L905.38 802.41L907.17 802.36L908.95 802.3L910.74 802.25L912.53 802.2L914.32 802.14L916.11 802.08L917.9 802.03L919.69 801.97L921.48 801.91L923.27 801.85L925.06 801.79L926.85 801.73L928.64 801.67L930.43 801.61L932.22 801.55L934.01 801.49L935.79 801.42L937.58 801.36L939.37 801.29L941.16 801.22L942.95 801.15L944.74 801.07L946.53 800.98L948.32 800.88L950.11 800.77L951.9 800.66L953.69 800.54L955.48 800.42L957.27 800.3L959.06 800.17L960.84 800.04L962.63 799.9L964.42 799.76L966.21 799.62L968 799.48L969.79 799.34L971.58 799.2L973.37 799.05L975.16 798.91L976.95 798.77L978.74 798.63L980.53 798.49L982.32 798.36L984.11 798.23L985.89 798.1L987.68 797.97L989.47 797.84L991.26 797.7L993.05 797.56L994.84 797.41L996.63 797.26L998.42 797.09L1000.21 796.92L1002 796.74L1003.79 796.56L1005.58 796.36L1007.37 796.16L1009.16 795.95L1010.94 795.74L1012.73 795.54L1014.52 795.35L1016.31 795.17L1018.1 795.01L1019.89 794.89L1021.68 794.8L1023.47 794.76L1025.26 794.77L1027.05 794.84L1028.84 794.96L1030.63 795.1L1032.42 795.25L1034.21 795.4L1035.99 795.51L1037.78 795.6L1039.57 795.66L1041.36 795.7L1043.15 795.73L1044.94 795.75L1046.73 795.75L1048.52 795.71L1050.31 795.59L1052.1 795.36L1053.89 794.99L1055.68 794.48L1057.47 793.83L1059.26 793.06L1061.05 792.17L1062.83 791.18L1064.62 790.08L1066.41 788.83L1068.2 787.39L1069.99 785.75L1071.78 783.85L1073.57 781.71L1075.36 779.41L1077.15 777.01L1078.94 774.62L1080.73 772.29L1082.52 770.08L1084.31 767.98L1086.1 765.96L1087.88 764.01L1089.67 762.11L1091.46 760.25L1093.25 758.46L1095.04 756.78L1096.83 755.22L1098.62 753.84L1100.41 752.64L1102.2 751.62L1103.99 750.8L1105.78 750.15L1107.57 749.68L1109.36 749.39L1111.15 749.24L1112.93 749.21L1114.72 749.27L1116.51 749.4L1118.3 749.57L1120.09 749.78L1121.88 750.02L1123.67 750.29L1125.46 750.59L1127.25 750.91L1129.04 751.24L1130.83 751.59L1132.62 751.94L1134.41 752.28L1136.2 752.62L1137.98 752.94L1139.77 753.25L1141.56 753.54L1143.35 753.83L1145.14 754.11L1146.93 754.38L1148.72 754.64L1150.51 754.88L1152.3 755.12L1154.09 755.34L1155.88 755.54L1157.67 755.74L1159.46 755.93L1161.25 756.12L1163.04 756.3L1164.82 756.48L1166.61 756.65L1168.4 756.82L1170.19 756.99L1171.98 757.15L1173.77 757.31L1175.56 757.46L1177.35 757.61L1179.14 757.76L1180.93 757.9L1182.72 758.04L1184.51 758.17L1186.3 758.3L1188.09 758.43L1189.87 758.56L1191.66 758.68L1193.45 758.79L1195.24 758.91L1197.03 759.02L1198.82 759.13L1200.61 759.24L1202.4 759.35L1204.19 759.45L1205.98 759.56L1207.77 759.66L1209.56 759.76L1211.35 759.86L1213.14 759.96L1214.92 760.06L1216.71 760.16L1218.5 760.25L1220.29 760.34L1222.08 760.43L1223.87 760.52L1225.66 760.61L1227.45 760.69L1229.24 760.78L1231.03 760.86L1232.82 760.93L1234.61 761.01L1236.4 761.08L1238.19 761.15L1239.97 761.22L1241.76 761.28L1243.55 761.34L1245.34 761.4L1247.13 761.45L1248.92 761.51L1250.71 761.56L1252.5 761.61" stroke="#6af200" stroke-width="1.2" fill="none" stroke-linejoin="round"/><path d="M717.5 803.91L719.29 803.91L721.08 803.91L722.87 803.91L724.66 803.91L726.45 803.91L728.24 803.91L730.03 803.9L731.81 803.9L733.6 803.9L735.39 803.9L737.18 803.9L738.97 803.9L740.76 803.9L742.55 803.89L744.34 803.89L746.13 803.89L747.92 803.89L749.71 803.88L751.5 803.88L753.29 803.88L755.08 803.88L756.86 803.87L758.65 803.87L760.44 803.87L762.23 803.86L764.02 803.86L765.81 803.85L767.6 803.85L769.39 803.85L771.18 803.84L772.97 803.84L774.76 803.83L776.55 803.83L778.34 803.82L780.13 803.82L781.91 803.81L783.7 803.81L785.49 803.8L787.28 803.8L789.07 803.79L790.86 803.79L792.65 803.78L794.44 803.78L796.23 803.77L798.02 803.76L799.81 803.76L801.6 803.75L803.39 803.74L805.18 803.74L806.96 803.73L808.75 803.72L810.54 803.72L812.33 803.71L814.12 803.7L815.91 803.7L817.7 803.69L819.49 803.68L821.28 803.67L823.07 803.67L824.86 803.66L826.65 803.65L828.44 803.64L830.23 803.63L832.02 803.63L833.8 803.62L835.59 803.61L837.38 803.6L839.17 803.59L840.96 803.59L842.75 803.58L844.54 803.57L846.33 803.55L848.12 803.54L849.91 803.53L851.7 803.51L853.49 803.49L855.28 803.47L857.07 803.45L858.85 803.43L860.64 803.4L862.43 803.38L864.22 803.35L866.01 803.33L867.8 803.3L869.59 803.27L871.38 803.23L873.17 803.2L874.96 803.17L876.75 803.13L878.54 803.09L880.33 803.06L882.12 803.02L883.9 802.98L885.69 802.94L887.48 802.89L889.27 802.85L891.06 802.81L892.85 802.76L894.64 802.72L896.43 802.67L898.22 802.62L900.01 802.57L901.8 802.52L903.59 802.47L905.38 802.42L907.17 802.37L908.95 802.31L910.74 802.26L912.53 802.2L914.32 802.15L916.11 802.09L917.9 802.04L919.69 801.98L921.48 801.92L923.27 801.86L925.06 801.8L926.85 801.74L928.64 801.68L930.43 801.62L932.22 801.56L934.01 801.49L935.79 801.43L937.58 801.37L939.37 801.3L941.16 801.24L942.95 801.16L944.74 801.08L946.53 800.99L948.32 800.89L950.11 800.79L951.9 800.68L953.69 800.56L955.48 800.44L957.27 800.32L959.06 800.2L960.84 800.07L962.63 799.93L964.42 799.8L966.21 799.67L968 799.53L969.79 799.39L971.58 799.25L973.37 799.11L975.16 798.98L976.95 798.84L978.74 798.71L980.53 798.58L982.32 798.46L984.11 798.34L985.89 798.22L987.68 798.11L989.47 797.99L991.26 797.86L993.05 797.74L994.84 797.61L996.63 797.47L998.42 797.33L1000.21 797.18L1002 797.03L1003.79 796.86L1005.58 796.7L1007.37 796.52L1009.16 796.34L1010.94 796.16L1012.73 795.98L1014.52 795.82L1016.31 795.67L1018.1 795.55L1019.89 795.46L1021.68 795.42L1023.47 795.42L1025.26 795.48L1027.05 795.6L1028.84 795.77L1030.63 795.98L1032.42 796.2L1034.21 796.41L1035.99 796.59L1037.78 796.74L1039.57 796.86L1041.36 796.97L1043.15 797.06L1044.94 797.15L1046.73 797.22L1048.52 797.25L1050.31 797.19L1052.1 797.01L1053.89 796.7L1055.68 796.22L1057.47 795.61L1059.26 794.86L1061.05 793.99L1062.83 793.02L1064.62 791.92L1066.41 790.67L1068.2 789.24L1069.99 787.58L1071.78 785.66L1073.57 783.5L1075.36 781.16L1077.15 778.73L1078.94 776.29L1080.73 773.91L1082.52 771.64L1084.31 769.47L1086.1 767.39L1087.88 765.36L1089.67 763.37L1091.46 761.43L1093.25 759.55L1095.04 757.77L1096.83 756.13L1098.62 754.66L1100.41 753.38L1102.2 752.31L1103.99 751.42L1105.78 750.72L1107.57 750.2L1109.36 749.87L1111.15 749.68L1112.93 749.62L1114.72 749.65L1116.51 749.76L1118.3 749.91L1120.09 750.09L1121.88 750.32L1123.67 750.57L1125.46 750.86L1127.25 751.17L1129.04 751.5L1130.83 751.84L1132.62 752.18L1134.41 752.52L1136.2 752.84L1137.98 753.15L1139.77 753.44L1141.56 753.72L1143.35 754L1145.14 754.26L1146.93 754.51L1148.72 754.76L1150.51 755L1152.3 755.22L1154.09 755.43L1155.88 755.64L1157.67 755.83L1159.46 756.02L1161.25 756.2L1163.04 756.38L1164.82 756.56L1166.61 756.73L1168.4 756.9L1170.19 757.06L1171.98 757.22L1173.77 757.38L1175.56 757.53L1177.35 757.68L1179.14 757.83L1180.93 757.97L1182.72 758.11L1184.51 758.25L1186.3 758.38L1188.09 758.51L1189.87 758.63L1191.66 758.75L1193.45 758.87L1195.24 758.98L1197.03 759.09L1198.82 759.2L1200.61 759.31L1202.4 759.42L1204.19 759.52L1205.98 759.63L1207.77 759.73L1209.56 759.83L1211.35 759.93L1213.14 760.03L1214.92 760.13L1216.71 760.23L1218.5 760.32L1220.29 760.41L1222.08 760.5L1223.87 760.59L1225.66 760.68L1227.45 760.76L1229.24 760.84L1231.03 760.92L1232.82 761L1234.61 761.08L1236.4 761.15L1238.19 761.22L1239.97 761.29L1241.76 761.35L1243.55 761.41L1245.34 761.47L1247.13 761.52L1248.92 761.58L1250.71 761.63L1252.5 761.68" stroke="#a9f200" stroke-width="1.2" fill="none" stroke-linejoin="round"/><path d="M717.5 803.93L719.29 803.93L721.08 803.93L722.87 803.93L724.66 803.93L726.45 803.92L728.24 803.92L730.03 803.92L731.81 803.92L733.6 803.92L735.39 803.92L737.18 803.92L738.97 803.92L740.76 803.91L742.55 803.91L744.34 803.91L746.13 803.91L747.92 803.9L749.71 803.9L751.5 803.9L753.29 803.9L755.08 803.89L756.86 803.89L758.65 803.89L760.44 803.88L762.23 803.88L764.02 803.88L765.81 803.87L767.6 803.87L769.39 803.86L771.18 803.86L772.97 803.86L774.76 803.85L776.55 803.85L778.34 803.84L780.13 803.84L781.91 803.83L783.7 803.83L785.49 803.82L787.28 803.82L789.07 803.81L790.86 803.81L792.65 803.8L794.44 803.79L796.23 803.79L798.02 803.78L799.81 803.78L801.6 803.77L803.39 803.76L805.18 803.76L806.96 803.75L808.75 803.74L810.54 803.74L812.33 803.73L814.12 803.72L815.91 803.71L817.7 803.71L819.49 803.7L821.28 803.69L823.07 803.68L824.86 803.68L826.65 803.67L828.44 803.66L830.23 803.65L832.02 803.64L833.8 803.64L835.59 803.63L837.38 803.62L839.17 803.61L840.96 803.6L842.75 803.59L844.54 803.58L846.33 803.57L848.12 803.56L849.91 803.54L851.7 803.53L853.49 803.51L855.28 803.49L857.07 803.47L858.85 803.45L860.64 803.42L862.43 803.4L864.22 803.37L866.01 803.34L867.8 803.31L869.59 803.28L871.38 803.25L873.17 803.22L874.96 803.18L876.75 803.15L878.54 803.11L880.33 803.07L882.12 803.03L883.9 802.99L885.69 802.95L887.48 802.91L889.27 802.86L891.06 802.82L892.85 802.77L894.64 802.73L896.43 802.68L898.22 802.63L900.01 802.58L901.8 802.53L903.59 802.48L905.38 802.43L907.17 802.37L908.95 802.32L910.74 802.27L912.53 802.21L914.32 802.16L916.11 802.1L917.9 802.04L919.69 801.99L921.48 801.93L923.27 801.87L925.06 801.81L926.85 801.75L928.64 801.69L930.43 801.63L932.22 801.57L934.01 801.5L935.79 801.44L937.58 801.38L939.37 801.32L941.16 801.25L942.95 801.17L944.74 801.09L946.53 801L948.32 800.91L950.11 800.8L951.9 800.7L953.69 800.58L955.48 800.47L957.27 800.35L959.06 800.22L960.84 800.1L962.63 799.97L964.42 799.84L966.21 799.71L968 799.57L969.79 799.44L971.58 799.31L973.37 799.18L975.16 799.05L976.95 798.92L978.74 798.79L980.53 798.68L982.32 798.56L984.11 798.45L985.89 798.35L987.68 798.24L989.47 798.13L991.26 798.03L993.05 797.92L994.84 797.8L996.63 797.68L998.42 797.56L1000.21 797.44L1002 797.31L1003.79 797.17L1005.58 797.03L1007.37 796.88L1009.16 796.73L1010.94 796.57L1012.73 796.43L1014.52 796.29L1016.31 796.18L1018.1 796.09L1019.89 796.04L1021.68 796.03L1023.47 796.07L1025.26 796.18L1027.05 796.35L1028.84 796.59L1030.63 796.86L1032.42 797.14L1034.21 797.42L1035.99 797.66L1037.78 797.88L1039.57 798.07L1041.36 798.24L1043.15 798.4L1044.94 798.56L1046.73 798.7L1048.52 798.78L1050.31 798.79L1052.1 798.67L1053.89 798.4L1055.68 797.97L1057.47 797.39L1059.26 796.67L1061.05 795.82L1062.83 794.85L1064.62 793.77L1066.41 792.52L1068.2 791.08L1069.99 789.42L1071.78 787.48L1073.57 785.29L1075.36 782.92L1077.15 780.45L1078.94 777.95L1080.73 775.52L1082.52 773.2L1084.31 770.97L1086.1 768.81L1087.88 766.71L1089.67 764.64L1091.46 762.6L1093.25 760.63L1095.04 758.76L1096.83 757.03L1098.62 755.48L1100.41 754.13L1102.2 752.99L1103.99 752.04L1105.78 751.29L1107.57 750.73L1109.36 750.35L1111.15 750.12L1112.93 750.03L1114.72 750.03L1116.51 750.11L1118.3 750.24L1120.09 750.41L1121.88 750.62L1123.67 750.86L1125.46 751.13L1127.25 751.43L1129.04 751.76L1130.83 752.09L1132.62 752.42L1134.41 752.75L1136.2 753.06L1137.98 753.35L1139.77 753.63L1141.56 753.9L1143.35 754.16L1145.14 754.41L1146.93 754.65L1148.72 754.88L1150.51 755.11L1152.3 755.32L1154.09 755.53L1155.88 755.73L1157.67 755.92L1159.46 756.1L1161.25 756.28L1163.04 756.46L1164.82 756.64L1166.61 756.81L1168.4 756.97L1170.19 757.14L1171.98 757.3L1173.77 757.45L1175.56 757.61L1177.35 757.76L1179.14 757.9L1180.93 758.04L1182.72 758.18L1184.51 758.32L1186.3 758.45L1188.09 758.58L1189.87 758.7L1191.66 758.82L1193.45 758.94L1195.24 759.05L1197.03 759.17L1198.82 759.28L1200.61 759.38L1202.4 759.49L1204.19 759.6L1205.98 759.7L1207.77 759.8L1209.56 759.91L1211.35 760.01L1213.14 760.1L1214.92 760.2L1216.71 760.3L1218.5 760.39L1220.29 760.48L1222.08 760.57L1223.87 760.66L1225.66 760.75L1227.45 760.83L1229.24 760.91L1231.03 760.99L1232.82 761.07L1234.61 761.15L1236.4 761.22L1238.19 761.29L1239.97 761.36L1241.76 761.42L1243.55 761.48L1245.34 761.54L1247.13 761.59L1248.92 761.64L1250.71 761.7L1252.5 761.75" stroke="#e8f200" stroke-width="1.2" fill="none" stroke-linejoin="round"/><path d="M717.5 803.95L719.29 803.94L721.08 803.94L722.87 803.94L724.66 803.94L726.45 803.94L728.24 803.94L730.03 803.94L731.81 803.94L733.6 803.94L735.39 803.94L737.18 803.94L738.97 803.93L740.76 803.93L742.55 803.93L744.34 803.93L746.13 803.93L747.92 803.92L749.71 803.92L751.5 803.92L753.29 803.92L755.08 803.91L756.86 803.91L758.65 803.91L760.44 803.9L762.23 803.9L764.02 803.89L765.81 803.89L767.6 803.89L769.39 803.88L771.18 803.88L772.97 803.87L774.76 803.87L776.55 803.87L778.34 803.86L780.13 803.86L781.91 803.85L783.7 803.85L785.49 803.84L787.28 803.84L789.07 803.83L790.86 803.82L792.65 803.82L794.44 803.81L796.23 803.81L798.02 803.8L799.81 803.79L801.6 803.79L803.39 803.78L805.18 803.77L806.96 803.77L808.75 803.76L810.54 803.75L812.33 803.75L814.12 803.74L815.91 803.73L817.7 803.73L819.49 803.72L821.28 803.71L823.07 803.7L824.86 803.7L826.65 803.69L828.44 803.68L830.23 803.67L832.02 803.66L833.8 803.65L835.59 803.65L837.38 803.64L839.17 803.63L840.96 803.62L842.75 803.61L844.54 803.6L846.33 803.59L848.12 803.58L849.91 803.56L851.7 803.54L853.49 803.53L855.28 803.51L857.07 803.49L858.85 803.46L860.64 803.44L862.43 803.41L864.22 803.39L866.01 803.36L867.8 803.33L869.59 803.3L871.38 803.26L873.17 803.23L874.96 803.2L876.75 803.16L878.54 803.12L880.33 803.08L882.12 803.04L883.9 803L885.69 802.96L887.48 802.92L889.27 802.87L891.06 802.83L892.85 802.78L894.64 802.74L896.43 802.69L898.22 802.64L900.01 802.59L901.8 802.54L903.59 802.49L905.38 802.44L907.17 802.38L908.95 802.33L910.74 802.28L912.53 802.22L914.32 802.16L916.11 802.11L917.9 802.05L919.69 801.99L921.48 801.94L923.27 801.88L925.06 801.82L926.85 801.76L928.64 801.7L930.43 801.64L932.22 801.58L934.01 801.51L935.79 801.45L937.58 801.39L939.37 801.33L941.16 801.26L942.95 801.19L944.74 801.1L946.53 801.02L948.32 800.92L950.11 800.82L951.9 800.71L953.69 800.6L955.48 800.49L957.27 800.37L959.06 800.25L960.84 800.12L962.63 800L964.42 799.87L966.21 799.75L968 799.62L969.79 799.49L971.58 799.36L973.37 799.24L975.16 799.12L976.95 799L978.74 798.88L980.53 798.77L982.32 798.66L984.11 798.56L985.89 798.47L987.68 798.37L989.47 798.28L991.26 798.19L993.05 798.09L994.84 798L996.63 797.9L998.42 797.8L1000.21 797.69L1002 797.59L1003.79 797.48L1005.58 797.36L1007.37 797.24L1009.16 797.11L1010.94 796.99L1012.73 796.87L1014.52 796.77L1016.31 796.68L1018.1 796.63L1019.89 796.61L1021.68 796.64L1023.47 796.73L1025.26 796.88L1027.05 797.11L1028.84 797.4L1030.63 797.73L1032.42 798.08L1034.21 798.42L1035.99 798.74L1037.78 799.02L1039.57 799.27L1041.36 799.51L1043.15 799.73L1044.94 799.96L1046.73 800.17L1048.52 800.32L1050.31 800.39L1052.1 800.33L1053.89 800.11L1055.68 799.72L1057.47 799.17L1059.26 798.47L1061.05 797.64L1062.83 796.69L1064.62 795.61L1066.41 794.37L1068.2 792.93L1069.99 791.25L1071.78 789.3L1073.57 787.08L1075.36 784.68L1077.15 782.16L1078.94 779.62L1080.73 777.14L1082.52 774.76L1084.31 772.46L1086.1 770.23L1087.88 768.05L1089.67 765.9L1091.46 763.78L1093.25 761.72L1095.04 759.76L1096.83 757.94L1098.62 756.3L1100.41 754.88L1102.2 753.67L1103.99 752.66L1105.78 751.86L1107.57 751.25L1109.36 750.82L1111.15 750.56L1112.93 750.44L1114.72 750.41L1116.51 750.47L1118.3 750.57L1120.09 750.72L1121.88 750.91L1123.67 751.14L1125.46 751.41L1127.25 751.7L1129.04 752.01L1130.83 752.34L1132.62 752.66L1134.41 752.98L1136.2 753.28L1137.98 753.56L1139.77 753.83L1141.56 754.08L1143.35 754.32L1145.14 754.56L1146.93 754.79L1148.72 755.01L1150.51 755.22L1152.3 755.43L1154.09 755.63L1155.88 755.82L1157.67 756.01L1159.46 756.19L1161.25 756.37L1163.04 756.54L1164.82 756.71L1166.61 756.88L1168.4 757.05L1170.19 757.21L1171.98 757.37L1173.77 757.53L1175.56 757.68L1177.35 757.83L1179.14 757.98L1180.93 758.12L1182.72 758.26L1184.51 758.39L1186.3 758.52L1188.09 758.65L1189.87 758.78L1191.66 758.9L1193.45 759.01L1195.24 759.13L1197.03 759.24L1198.82 759.35L1200.61 759.46L1202.4 759.56L1204.19 759.67L1205.98 759.77L1207.77 759.88L1209.56 759.98L1211.35 760.08L1213.14 760.18L1214.92 760.27L1216.71 760.37L1218.5 760.46L1220.29 760.55L1222.08 760.64L1223.87 760.73L1225.66 760.82L1227.45 760.9L1229.24 760.98L1231.03 761.06L1232.82 761.14L1234.61 761.21L1236.4 761.29L1238.19 761.36L1239.97 761.42L1241.76 761.49L1243.55 761.55L1245.34 761.61L1247.13 761.66L1248.92 761.71L1250.71 761.76L1252.5 761.81" stroke="#f2bc00" stroke-width="1.2" fill="none" stroke-linejoin="round"/><path d="M717.5 803.96L719.29 803.96L721.08 803.96L722.87 803.96L724.66 803.96L726.45 803.96L728.24 803.96L730.03 803.96L731.81 803.96L733.6 803.96L735.39 803.96L737.18 803.95L738.97 803.95L740.76 803.95L742.55 803.95L744.34 803.95L746.13 803.94L747.92 803.94L749.71 803.94L751.5 803.94L753.29 803.93L755.08 803.93L756.86 803.93L758.65 803.92L760.44 803.92L762.23 803.92L764.02 803.91L765.81 803.91L767.6 803.91L769.39 803.9L771.18 803.9L772.97 803.89L774.76 803.89L776.55 803.88L778.34 803.88L780.13 803.87L781.91 803.87L783.7 803.86L785.49 803.86L787.28 803.85L789.07 803.85L790.86 803.84L792.65 803.84L794.44 803.83L796.23 803.82L798.02 803.82L799.81 803.81L801.6 803.81L803.39 803.8L805.18 803.79L806.96 803.79L808.75 803.78L810.54 803.77L812.33 803.77L814.12 803.76L815.91 803.75L817.7 803.74L819.49 803.74L821.28 803.73L823.07 803.72L824.86 803.71L826.65 803.71L828.44 803.7L830.23 803.69L832.02 803.68L833.8 803.67L835.59 803.66L837.38 803.66L839.17 803.65L840.96 803.64L842.75 803.63L844.54 803.62L846.33 803.61L848.12 803.59L849.91 803.58L851.7 803.56L853.49 803.54L855.28 803.52L857.07 803.5L858.85 803.48L860.64 803.46L862.43 803.43L864.22 803.4L866.01 803.37L867.8 803.34L869.59 803.31L871.38 803.28L873.17 803.24L874.96 803.21L876.75 803.17L878.54 803.14L880.33 803.1L882.12 803.06L883.9 803.02L885.69 802.97L887.48 802.93L889.27 802.89L891.06 802.84L892.85 802.79L894.64 802.75L896.43 802.7L898.22 802.65L900.01 802.6L901.8 802.55L903.59 802.5L905.38 802.45L907.17 802.39L908.95 802.34L910.74 802.28L912.53 802.23L914.32 802.17L916.11 802.12L917.9 802.06L919.69 802L921.48 801.94L923.27 801.89L925.06 801.83L926.85 801.77L928.64 801.71L930.43 801.65L932.22 801.58L934.01 801.52L935.79 801.46L937.58 801.4L939.37 801.34L941.16 801.27L942.95 801.2L944.74 801.12L946.53 801.03L948.32 800.94L950.11 800.84L951.9 800.73L953.69 800.62L955.48 800.51L957.27 800.39L959.06 800.27L960.84 800.15L962.63 800.03L964.42 799.91L966.21 799.79L968 799.66L969.79 799.54L971.58 799.42L973.37 799.3L975.16 799.18L976.95 799.07L978.74 798.96L980.53 798.86L982.32 798.77L984.11 798.68L985.89 798.59L987.68 798.51L989.47 798.43L991.26 798.35L993.05 798.27L994.84 798.19L996.63 798.11L998.42 798.03L1000.21 797.95L1002 797.87L1003.79 797.78L1005.58 797.69L1007.37 797.6L1009.16 797.5L1010.94 797.4L1012.73 797.31L1014.52 797.24L1016.31 797.19L1018.1 797.17L1019.89 797.18L1021.68 797.25L1023.47 797.38L1025.26 797.58L1027.05 797.87L1028.84 798.22L1030.63 798.61L1032.42 799.03L1034.21 799.43L1035.99 799.81L1037.78 800.15L1039.57 800.47L1041.36 800.77L1043.15 801.07L1044.94 801.36L1046.73 801.64L1048.52 801.86L1050.31 801.99L1052.1 801.99L1053.89 801.82L1055.68 801.47L1057.47 800.95L1059.26 800.27L1061.05 799.46L1062.83 798.53L1064.62 797.46L1066.41 796.22L1068.2 794.78L1069.99 793.09L1071.78 791.12L1073.57 788.87L1075.36 786.43L1077.15 783.88L1078.94 781.29L1080.73 778.75L1082.52 776.31L1084.31 773.95L1086.1 771.66L1087.88 769.4L1089.67 767.17L1091.46 764.96L1093.25 762.8L1095.04 760.75L1096.83 758.84L1098.62 757.13L1100.41 755.63L1102.2 754.35L1103.99 753.28L1105.78 752.42L1107.57 751.77L1109.36 751.3L1111.15 751.01L1112.93 750.85L1114.72 750.79L1116.51 750.82L1118.3 750.91L1120.09 751.04L1121.88 751.21L1123.67 751.43L1125.46 751.68L1127.25 751.96L1129.04 752.27L1130.83 752.59L1132.62 752.9L1134.41 753.21L1136.2 753.5L1137.98 753.77L1139.77 754.02L1141.56 754.26L1143.35 754.49L1145.14 754.71L1146.93 754.92L1148.72 755.13L1150.51 755.33L1152.3 755.53L1154.09 755.72L1155.88 755.91L1157.67 756.09L1159.46 756.27L1161.25 756.45L1163.04 756.62L1164.82 756.79L1166.61 756.96L1168.4 757.13L1170.19 757.29L1171.98 757.45L1173.77 757.6L1175.56 757.75L1177.35 757.9L1179.14 758.05L1180.93 758.19L1182.72 758.33L1184.51 758.47L1186.3 758.6L1188.09 758.73L1189.87 758.85L1191.66 758.97L1193.45 759.09L1195.24 759.2L1197.03 759.31L1198.82 759.42L1200.61 759.53L1202.4 759.64L1204.19 759.74L1205.98 759.84L1207.77 759.95L1209.56 760.05L1211.35 760.15L1213.14 760.25L1214.92 760.34L1216.71 760.44L1218.5 760.53L1220.29 760.62L1222.08 760.71L1223.87 760.8L1225.66 760.89L1227.45 760.97L1229.24 761.05L1231.03 761.13L1232.82 761.21L1234.61 761.28L1236.4 761.36L1238.19 761.43L1239.97 761.49L1241.76 761.56L1243.55 761.62L1245.34 761.68L1247.13 761.73L1248.92 761.78L1250.71 761.83L1252.5 761.88" stroke="#ff8400" stroke-width="1.2" fill="none" stroke-linejoin="round"/><path d="M717.5 803.98L719.29 803.98L721.08 803.98L722.87 803.98L724.66 803.98L726.45 803.98L728.24 803.98L730.03 803.98L731.81 803.98L733.6 803.98L735.39 803.97L737.18 803.97L738.97 803.97L740.76 803.97L742.55 803.97L744.34 803.96L746.13 803.96L747.92 803.96L749.71 803.96L751.5 803.95L753.29 803.95L755.08 803.95L756.86 803.95L758.65 803.94L760.44 803.94L762.23 803.94L764.02 803.93L765.81 803.93L767.6 803.92L769.39 803.92L771.18 803.92L772.97 803.91L774.76 803.91L776.55 803.9L778.34 803.9L780.13 803.89L781.91 803.89L783.7 803.88L785.49 803.88L787.28 803.87L789.07 803.87L790.86 803.86L792.65 803.86L794.44 803.85L796.23 803.84L798.02 803.84L799.81 803.83L801.6 803.82L803.39 803.82L805.18 803.81L806.96 803.8L808.75 803.8L810.54 803.79L812.33 803.78L814.12 803.78L815.91 803.77L817.7 803.76L819.49 803.76L821.28 803.75L823.07 803.74L824.86 803.73L826.65 803.72L828.44 803.72L830.23 803.71L832.02 803.7L833.8 803.69L835.59 803.68L837.38 803.68L839.17 803.67L840.96 803.66L842.75 803.65L844.54 803.64L846.33 803.63L848.12 803.61L849.91 803.6L851.7 803.58L853.49 803.56L855.28 803.54L857.07 803.52L858.85 803.5L860.64 803.47L862.43 803.45L864.22 803.42L866.01 803.39L867.8 803.36L869.59 803.33L871.38 803.29L873.17 803.26L874.96 803.22L876.75 803.19L878.54 803.15L880.33 803.11L882.12 803.07L883.9 803.03L885.69 802.99L887.48 802.94L889.27 802.9L891.06 802.85L892.85 802.8L894.64 802.76L896.43 802.71L898.22 802.66L900.01 802.61L901.8 802.56L903.59 802.51L905.38 802.45L907.17 802.4L908.95 802.35L910.74 802.29L912.53 802.24L914.32 802.18L916.11 802.12L917.9 802.07L919.69 802.01L921.48 801.95L923.27 801.89L925.06 801.83L926.85 801.77L928.64 801.71L930.43 801.65L932.22 801.59L934.01 801.53L935.79 801.47L937.58 801.41L939.37 801.35L941.16 801.28L942.95 801.21L944.74 801.13L946.53 801.04L948.32 800.95L950.11 800.85L951.9 800.75L953.69 800.64L955.48 800.53L957.27 800.42L959.06 800.3L960.84 800.18L962.63 800.06L964.42 799.95L966.21 799.83L968 799.71L969.79 799.59L971.58 799.48L973.37 799.36L975.16 799.25L976.95 799.15L978.74 799.05L980.53 798.95L982.32 798.87L984.11 798.79L985.89 798.71L987.68 798.64L989.47 798.57L991.26 798.51L993.05 798.45L994.84 798.38L996.63 798.33L998.42 798.27L1000.21 798.21L1002 798.15L1003.79 798.09L1005.58 798.03L1007.37 797.96L1009.16 797.89L1010.94 797.82L1012.73 797.76L1014.52 797.71L1016.31 797.69L1018.1 797.7L1019.89 797.76L1021.68 797.86L1023.47 798.04L1025.26 798.28L1027.05 798.62L1028.84 799.03L1030.63 799.49L1032.42 799.97L1034.21 800.44L1035.99 800.88L1037.78 801.29L1039.57 801.68L1041.36 802.04L1043.15 802.4L1044.94 802.76L1046.73 803.11L1048.52 803.4L1050.31 803.59L1052.1 803.65L1053.89 803.53L1055.68 803.21L1057.47 802.73L1059.26 802.08L1061.05 801.29L1062.83 800.37L1064.62 799.31L1066.41 798.07L1068.2 796.62L1069.99 794.92L1071.78 792.93L1073.57 790.66L1075.36 788.19L1077.15 785.59L1078.94 782.96L1080.73 780.37L1082.52 777.87L1084.31 775.45L1086.1 773.08L1087.88 770.75L1089.67 768.43L1091.46 766.13L1093.25 763.89L1095.04 761.75L1096.83 759.75L1098.62 757.95L1100.41 756.38L1102.2 755.03L1103.99 753.9L1105.78 752.99L1107.57 752.29L1109.36 751.78L1111.15 751.45L1112.93 751.25L1114.72 751.17L1116.51 751.18L1118.3 751.24L1120.09 751.35L1121.88 751.51L1123.67 751.71L1125.46 751.95L1127.25 752.23L1129.04 752.52L1130.83 752.83L1132.62 753.15L1134.41 753.44L1136.2 753.72L1137.98 753.98L1139.77 754.22L1141.56 754.44L1143.35 754.65L1145.14 754.86L1146.93 755.06L1148.72 755.26L1150.51 755.45L1152.3 755.64L1154.09 755.82L1155.88 756L1157.67 756.18L1159.46 756.36L1161.25 756.53L1163.04 756.71L1164.82 756.87L1166.61 757.04L1168.4 757.2L1170.19 757.36L1171.98 757.52L1173.77 757.68L1175.56 757.83L1177.35 757.98L1179.14 758.12L1180.93 758.26L1182.72 758.4L1184.51 758.54L1186.3 758.67L1188.09 758.8L1189.87 758.92L1191.66 759.04L1193.45 759.16L1195.24 759.28L1197.03 759.39L1198.82 759.5L1200.61 759.6L1202.4 759.71L1204.19 759.81L1205.98 759.92L1207.77 760.02L1209.56 760.12L1211.35 760.22L1213.14 760.32L1214.92 760.41L1216.71 760.51L1218.5 760.6L1220.29 760.69L1222.08 760.78L1223.87 760.87L1225.66 760.96L1227.45 761.04L1229.24 761.12L1231.03 761.2L1232.82 761.28L1234.61 761.35L1236.4 761.42L1238.19 761.49L1239.97 761.56L1241.76 761.63L1243.55 761.69L1245.34 761.75L1247.13 761.8L1248.92 761.85L1250.71 761.9L1252.5 761.95" stroke="#ff4200" stroke-width="1.2" fill="none" stroke-linejoin="round"/><path d="M717.5 804L719.29 804L721.08 804L722.87 804L724.66 804L726.45 804L728.24 804L730.03 804L731.81 804L733.6 803.99L735.39 803.99L737.18 803.99L738.97 803.99L740.76 803.99L742.55 803.99L744.34 803.98L746.13 803.98L747.92 803.98L749.71 803.98L751.5 803.97L753.29 803.97L755.08 803.97L756.86 803.96L758.65 803.96L760.44 803.96L762.23 803.95L764.02 803.95L765.81 803.95L767.6 803.94L769.39 803.94L771.18 803.93L772.97 803.93L774.76 803.93L776.55 803.92L778.34 803.92L780.13 803.91L781.91 803.91L783.7 803.9L785.49 803.9L787.28 803.89L789.07 803.88L790.86 803.88L792.65 803.87L794.44 803.87L796.23 803.86L798.02 803.86L799.81 803.85L801.6 803.84L803.39 803.84L805.18 803.83L806.96 803.82L808.75 803.82L810.54 803.81L812.33 803.8L814.12 803.8L815.91 803.79L817.7 803.78L819.49 803.77L821.28 803.77L823.07 803.76L824.86 803.75L826.65 803.74L828.44 803.73L830.23 803.73L832.02 803.72L833.8 803.71L835.59 803.7L837.38 803.69L839.17 803.69L840.96 803.68L842.75 803.67L844.54 803.66L846.33 803.64L848.12 803.63L849.91 803.62L851.7 803.6L853.49 803.58L855.28 803.56L857.07 803.54L858.85 803.51L860.64 803.49L862.43 803.46L864.22 803.43L866.01 803.4L867.8 803.37L869.59 803.34L871.38 803.31L873.17 803.27L874.96 803.24L876.75 803.2L878.54 803.16L880.33 803.12L882.12 803.08L883.9 803.04L885.69 803L887.48 802.95L889.27 802.91L891.06 802.86L892.85 802.82L894.64 802.77L896.43 802.72L898.22 802.67L900.01 802.62L901.8 802.57L903.59 802.52L905.38 802.46L907.17 802.41L908.95 802.36L910.74 802.3L912.53 802.25L914.32 802.19L916.11 802.13L917.9 802.08L919.69 802.02L921.48 801.96L923.27 801.9L925.06 801.84L926.85 801.78L928.64 801.72L930.43 801.66L932.22 801.6L934.01 801.54L935.79 801.48L937.58 801.42L939.37 801.36L941.16 801.29L942.95 801.22L944.74 801.14L946.53 801.06L948.32 800.97L950.11 800.87L951.9 800.77L953.69 800.66L955.48 800.55L957.27 800.44L959.06 800.33L960.84 800.21L962.63 800.1L964.42 799.98L966.21 799.87L968 799.75L969.79 799.64L971.58 799.53L973.37 799.43L975.16 799.32L976.95 799.22L978.74 799.13L980.53 799.05L982.32 798.97L984.11 798.9L985.89 798.83L987.68 798.77L989.47 798.72L991.26 798.67L993.05 798.62L994.84 798.58L996.63 798.54L998.42 798.5L1000.21 798.46L1002 798.43L1003.79 798.4L1005.58 798.36L1007.37 798.32L1009.16 798.27L1010.94 798.23L1012.73 798.2L1014.52 798.19L1016.31 798.2L1018.1 798.24L1019.89 798.33L1021.68 798.47L1023.47 798.69L1025.26 798.99L1027.05 799.38L1028.84 799.85L1030.63 800.37L1032.42 800.91L1034.21 801.45L1035.99 801.96L1037.78 802.43L1039.57 802.88L1041.36 803.31L1043.15 803.74L1044.94 804.17L1046.73 804.58L1048.52 804.94L1050.31 805.19L1052.1 805.31L1053.89 805.23L1055.68 804.96L1057.47 804.51L1059.26 803.88L1061.05 803.11L1062.83 802.2L1064.62 801.15L1066.41 799.92L1068.2 798.47L1069.99 796.76L1071.78 794.75L1073.57 792.45L1075.36 789.95L1077.15 787.31L1078.94 784.63L1080.73 781.99L1082.52 779.43L1084.31 776.94L1086.1 774.51L1087.88 772.1L1089.67 769.7L1091.46 767.31L1093.25 764.97L1095.04 762.74L1096.83 760.66L1098.62 758.77L1100.41 757.12L1102.2 755.71L1103.99 754.52L1105.78 753.56L1107.57 752.81L1109.36 752.26L1111.15 751.89L1112.93 751.66L1114.72 751.55L1116.51 751.53L1118.3 751.57L1120.09 751.66L1121.88 751.81L1123.67 751.99L1125.46 752.22L1127.25 752.49L1129.04 752.78L1130.83 753.08L1132.62 753.39L1134.41 753.68L1136.2 753.94L1137.98 754.19L1139.77 754.41L1141.56 754.62L1143.35 754.82L1145.14 755.01L1146.93 755.2L1148.72 755.38L1150.51 755.56L1152.3 755.74L1154.09 755.92L1155.88 756.09L1157.67 756.27L1159.46 756.44L1161.25 756.62L1163.04 756.79L1164.82 756.95L1166.61 757.12L1168.4 757.28L1170.19 757.44L1171.98 757.6L1173.77 757.75L1175.56 757.9L1177.35 758.05L1179.14 758.2L1180.93 758.34L1182.72 758.48L1184.51 758.61L1186.3 758.74L1188.09 758.87L1189.87 759L1191.66 759.12L1193.45 759.23L1195.24 759.35L1197.03 759.46L1198.82 759.57L1200.61 759.68L1202.4 759.78L1204.19 759.89L1205.98 759.99L1207.77 760.09L1209.56 760.19L1211.35 760.29L1213.14 760.39L1214.92 760.48L1216.71 760.58L1218.5 760.67L1220.29 760.76L1222.08 760.85L1223.87 760.94L1225.66 761.03L1227.45 761.11L1229.24 761.19L1231.03 761.27L1232.82 761.35L1234.61 761.42L1236.4 761.49L1238.19 761.56L1239.97 761.63L1241.76 761.7L1243.55 761.76L1245.34 761.81L1247.13 761.87L1248.92 761.92L1250.71 761.97L1252.5 762.02" stroke="#ff0000" stroke-width="2.2" fill="none" stroke-linejoin="round"/></g><clipPath id="c_gd"><rect x="1340" y="92" width="537" height="263"/></clipPath><g clip-path="url(#c_gd)"><path d="M1339.5 223.26L1340.73 223.28L1341.96 223.3L1343.19 223.32L1344.43 223.33L1345.66 223.35L1346.89 223.37L1348.12 223.39L1349.35 223.41L1350.58 223.42L1351.81 223.44L1353.04 223.46L1354.28 223.48L1355.51 223.49L1356.74 223.51L1357.97 223.53L1359.2 223.55L1360.43 223.57L1361.66 223.58L1362.9 223.6L1364.13 223.62L1365.36 223.64L1366.59 223.65L1367.82 223.67L1369.05 223.69L1370.28 223.7L1371.51 223.72L1372.75 223.74L1373.98 223.76L1375.21 223.77L1376.44 223.79L1377.67 223.81L1378.9 223.82L1380.13 223.84L1381.37 223.86L1382.6 223.87L1383.83 223.89L1385.06 223.91L1386.29 223.92L1387.52 223.94L1388.75 223.96L1389.98 223.97L1391.22 223.99L1392.45 224.01L1393.68 224.02L1394.91 224.04L1396.14 224.05L1397.37 224.07L1398.6 224.08L1399.84 224.1L1401.07 224.12L1402.3 224.13L1403.53 224.15L1404.76 224.16L1405.99 224.18L1407.22 224.19L1408.46 224.21L1409.69 224.22L1410.92 224.24L1412.15 224.25L1413.38 224.26L1414.61 224.28L1415.84 224.29L1417.07 224.31L1418.31 224.32L1419.54 224.34L1420.77 224.35L1422 224.37L1423.23 224.39L1424.46 224.4L1425.69 224.42L1426.93 224.44L1428.16 224.45L1429.39 224.47L1430.62 224.49L1431.85 224.51L1433.08 224.52L1434.31 224.54L1435.54 224.56L1436.78 224.58L1438.01 224.6L1439.24 224.62L1440.47 224.65L1441.7 224.67L1442.93 224.69L1444.16 224.72L1445.4 224.74L1446.63 224.77L1447.86 224.79L1449.09 224.82L1450.32 224.85L1451.55 224.88L1452.78 224.91L1454.01 224.94L1455.25 224.97L1456.48 225L1457.71 225.03L1458.94 225.07L1460.17 225.1L1461.4 225.14L1462.63 225.18L1463.87 225.21L1465.1 225.25L1466.33 225.29L1467.56 225.34L1468.79 225.38L1470.02 225.42L1471.25 225.47L1472.48 225.52L1473.72 225.56L1474.95 225.61L1476.18 225.66L1477.41 225.72L1478.64 225.77L1479.87 225.82L1481.1 225.88L1482.34 225.93L1483.57 225.99L1484.8 226.05L1486.03 226.11L1487.26 226.17L1488.49 226.23L1489.72 226.3L1490.95 226.36L1492.19 226.43L1493.42 226.5L1494.65 226.57L1495.88 226.64L1497.11 226.71L1498.34 226.78L1499.57 226.85L1500.81 226.93L1502.04 227.01L1503.27 227.08L1504.5 227.16L1505.73 227.24L1506.96 227.33L1508.19 227.41L1509.43 227.49L1510.66 227.58L1511.89 227.67L1513.12 227.76L1514.35 227.85L1515.58 227.94L1516.81 228.03L1518.04 228.12L1519.28 228.22L1520.51 228.32L1521.74 228.41L1522.97 228.51L1524.2 228.62L1525.43 228.72L1526.66 228.82L1527.9 228.93L1529.13 229.04L1530.36 229.15L1531.59 229.26L1532.82 229.38L1534.05 229.49L1535.28 229.61L1536.51 229.73L1537.75 229.86L1538.98 229.98L1540.21 230.11L1541.44 230.24L1542.67 230.37L1543.9 230.51L1545.13 230.65L1546.37 230.79L1547.6 230.94L1548.83 231.08L1550.06 231.24L1551.29 231.39L1552.52 231.55L1553.75 231.71L1554.98 231.87L1556.22 232.04L1557.45 232.21L1558.68 232.39L1559.91 232.57L1561.14 232.76L1562.37 232.95L1563.6 233.15L1564.84 233.35L1566.07 233.56L1567.3 233.78L1568.53 234L1569.76 234.22L1570.99 234.46L1572.22 234.7L1573.45 234.94L1574.69 235.2L1575.92 235.46L1577.15 235.73L1578.38 236L1579.61 236.28L1580.84 236.56L1582.07 236.86L1583.31 237.15L1584.54 237.45L1585.77 237.76L1587 238.07L1588.23 238.39L1589.46 238.71L1590.69 239.04L1591.92 239.37L1593.16 239.7L1594.39 240.04L1595.62 240.39L1596.85 240.75L1598.08 241.11L1599.31 241.48L1600.54 241.86L1601.78 242.25L1603.01 242.65L1604.24 243.06L1605.47 243.48L1606.7 243.91L1607.93 244.36L1609.16 244.82L1610.39 245.3L1611.63 245.79L1612.86 246.3L1614.09 246.82L1615.32 247.37L1616.55 247.94L1617.78 248.53L1619.01 249.14L1620.25 249.77L1621.48 250.43L1622.71 251.11L1623.94 251.82L1625.17 252.56L1626.4 253.32L1627.63 254.11L1628.87 254.93L1630.1 255.77L1631.33 256.65L1632.56 257.55L1633.79 258.48L1635.02 259.45L1636.25 260.44L1637.48 261.46L1638.72 262.51L1639.95 263.6L1641.18 264.71L1642.41 265.85L1643.64 267.02L1644.87 268.22L1646.1 269.43L1647.34 270.68L1648.57 271.94L1649.8 273.22L1651.03 274.52L1652.26 275.84L1653.49 277.17L1654.72 278.51L1655.95 279.87L1657.19 281.25L1658.42 282.64L1659.65 284.05L1660.88 285.49L1662.11 286.95L1663.34 288.44L1664.57 289.97L1665.81 291.52L1667.04 293.12L1668.27 294.75L1669.5 296.42L1670.73 298.14L1671.96 299.89L1673.19 301.68L1674.42 303.49L1675.66 305.33L1676.89 307.18L1678.12 309.06L1679.35 310.94L1680.58 312.82L1681.81 314.71L1683.04 316.6L1684.28 318.47L1685.51 320.34L1686.74 322.2L1687.97 324.05L1689.2 325.89L1690.43 327.73L1691.66 329.56L1692.89 331.4L1694.13 333.23L1695.36 335.06L1696.59 336.9L1697.82 338.73L1699.05 340.58L1700.28 342.43L1701.51 344.28L1702.75 346.14L1703.98 348.01L1705.21 349.87L1706.44 351.74L1707.67 353.61" stroke="#a0a0a0" stroke-width="1.2" fill="none" stroke-linejoin="round"/><path d="M1710.12 91.34L1710.44 91.84L1710.77 92.34L1711.1 92.84L1711.43 93.34L1711.76 93.83L1712.08 94.33L1712.41 94.83L1712.74 95.32L1713.07 95.81L1713.4 96.31L1713.73 96.8L1714.05 97.29L1714.38 97.78L1714.71 98.27L1715.04 98.75L1715.37 99.24L1715.69 99.72L1716.02 100.2L1716.35 100.68L1716.68 101.16L1717.01 101.64L1717.34 102.11L1717.66 102.58L1717.99 103.05L1718.32 103.51L1718.65 103.98L1718.98 104.44L1719.3 104.89L1719.63 105.35L1719.96 105.8L1720.29 106.24L1720.62 106.69L1720.95 107.13L1721.27 107.56L1721.6 108L1721.93 108.43L1722.26 108.85L1722.59 109.27L1722.92 109.69L1723.24 110.1L1723.57 110.51L1723.9 110.92L1724.23 111.32L1724.56 111.71L1724.88 112.1L1725.21 112.49L1725.54 112.87L1725.87 113.24L1726.2 113.61L1726.53 113.98L1726.85 114.34L1727.18 114.69L1727.51 115.04L1727.84 115.38L1728.17 115.72L1728.49 116.05L1728.82 116.37L1729.15 116.69L1729.48 117L1729.81 117.31L1730.14 117.61L1730.46 117.9L1730.79 118.19L1731.12 118.47L1731.45 118.75L1731.78 119.02L1732.1 119.29L1732.43 119.55L1732.76 119.8L1733.09 120.05L1733.42 120.29L1733.75 120.53L1734.07 120.76L1734.4 120.99L1734.73 121.21L1735.06 121.43L1735.39 121.64L1735.71 121.85L1736.04 122.05L1736.37 122.24L1736.7 122.44L1737.03 122.62L1737.36 122.8L1737.68 122.98L1738.01 123.15L1738.34 123.31L1738.67 123.48L1739 123.63L1739.33 123.78L1739.65 123.93L1739.98 124.07L1740.31 124.21L1740.64 124.35L1740.97 124.47L1741.29 124.6L1741.62 124.72L1741.95 124.83L1742.28 124.94L1742.61 125.05L1742.94 125.15L1743.26 125.25L1743.59 125.35L1743.92 125.44L1744.25 125.52L1744.58 125.6L1744.9 125.68L1745.23 125.75L1745.56 125.82L1745.89 125.89L1746.22 125.95L1746.55 126.01L1746.87 126.06L1747.2 126.11L1747.53 126.16L1747.86 126.2L1748.19 126.24L1748.51 126.28L1748.84 126.31L1749.17 126.34L1749.5 126.37L1749.83 126.39L1750.16 126.41L1750.48 126.42L1750.81 126.44L1751.14 126.45L1751.47 126.45L1751.8 126.45L1752.12 126.45L1752.45 126.45L1752.78 126.44L1753.11 126.43L1753.44 126.42L1753.77 126.4L1754.09 126.39L1754.42 126.36L1754.75 126.34L1755.08 126.31L1755.41 126.28L1755.73 126.25L1756.06 126.21L1756.39 126.17L1756.72 126.13L1757.05 126.09L1757.38 126.04L1757.7 125.99L1758.03 125.94L1758.36 125.89L1758.69 125.83L1759.02 125.77L1759.35 125.7L1759.67 125.64L1760 125.57L1760.33 125.5L1760.66 125.43L1760.99 125.35L1761.31 125.28L1761.64 125.19L1761.97 125.11L1762.3 125.03L1762.63 124.94L1762.96 124.85L1763.28 124.76L1763.61 124.66L1763.94 124.57L1764.27 124.47L1764.6 124.37L1764.92 124.26L1765.25 124.16L1765.58 124.05L1765.91 123.94L1766.24 123.83L1766.57 123.72L1766.89 123.6L1767.22 123.48L1767.55 123.36L1767.88 123.24L1768.21 123.12L1768.53 122.99L1768.86 122.86L1769.19 122.73L1769.52 122.6L1769.85 122.47L1770.18 122.33L1770.5 122.19L1770.83 122.06L1771.16 121.92L1771.49 121.77L1771.82 121.63L1772.14 121.48L1772.47 121.34L1772.8 121.19L1773.13 121.04L1773.46 120.88L1773.79 120.73L1774.11 120.57L1774.44 120.42L1774.77 120.26L1775.1 120.1L1775.43 119.94L1775.76 119.78L1776.08 119.61L1776.41 119.45L1776.74 119.28L1777.07 119.11L1777.4 118.94L1777.72 118.77L1778.05 118.59L1778.38 118.42L1778.71 118.24L1779.04 118.06L1779.37 117.88L1779.69 117.7L1780.02 117.51L1780.35 117.33L1780.68 117.14L1781.01 116.95L1781.33 116.75L1781.66 116.56L1781.99 116.36L1782.32 116.16L1782.65 115.96L1782.98 115.75L1783.3 115.55L1783.63 115.34L1783.96 115.13L1784.29 114.91L1784.62 114.69L1784.94 114.47L1785.27 114.25L1785.6 114.03L1785.93 113.8L1786.26 113.57L1786.59 113.33L1786.91 113.09L1787.24 112.85L1787.57 112.61L1787.9 112.36L1788.23 112.12L1788.55 111.86L1788.88 111.61L1789.21 111.35L1789.54 111.09L1789.87 110.82L1790.2 110.55L1790.52 110.28L1790.85 110L1791.18 109.72L1791.51 109.44L1791.84 109.15L1792.17 108.86L1792.49 108.57L1792.82 108.27L1793.15 107.96L1793.48 107.66L1793.81 107.35L1794.13 107.04L1794.46 106.72L1794.79 106.4L1795.12 106.08L1795.45 105.75L1795.78 105.42L1796.1 105.09L1796.43 104.75L1796.76 104.41L1797.09 104.07L1797.42 103.73L1797.74 103.38L1798.07 103.03L1798.4 102.68L1798.73 102.32L1799.06 101.96L1799.39 101.61L1799.71 101.24L1800.04 100.88L1800.37 100.52L1800.7 100.15L1801.03 99.78L1801.35 99.41L1801.68 99.03L1802.01 98.66L1802.34 98.28L1802.67 97.91L1803 97.53L1803.32 97.15L1803.65 96.77L1803.98 96.38L1804.31 96L1804.64 95.62L1804.96 95.23L1805.29 94.84L1805.62 94.46L1805.95 94.07L1806.28 93.68L1806.61 93.29L1806.93 92.9L1807.26 92.51L1807.59 92.12L1807.92 91.73L1808.25 91.34" stroke="#a0a0a0" stroke-width="1.2" fill="none" stroke-linejoin="round"/><path d="M1709.66 354 V92" stroke="#8c8c8c" stroke-width="1.3"/><path d="M1339.5 287.19L1341.29 287.19L1343.08 287.19L1344.87 287.19L1346.66 287.19L1348.45 287.19L1350.25 287.19L1352.04 287.19L1353.83 287.19L1355.62 287.19L1357.41 287.19L1359.2 287.19L1360.99 287.19L1362.78 287.19L1364.57 287.19L1366.36 287.19L1368.16 287.19L1369.95 287.19L1371.74 287.19L1373.53 287.19L1375.32 287.19L1377.11 287.19L1378.9 287.19L1380.69 287.19L1382.48 287.19L1384.27 287.19L1386.07 287.19L1387.86 287.19L1389.65 287.19L1391.44 287.19L1393.23 287.19L1395.02 287.19L1396.81 287.19L1398.6 287.19L1400.39 287.19L1402.18 287.19L1403.97 287.19L1405.77 287.19L1407.56 287.19L1409.35 287.19L1411.14 287.19L1412.93 287.19L1414.72 287.19L1416.51 287.19L1418.3 287.19L1420.09 287.19L1421.88 287.19L1423.68 287.19L1425.47 287.19L1427.26 287.19L1429.05 287.19L1430.84 287.19L1432.63 287.19L1434.42 287.19L1436.21 287.19L1438 287.19L1439.79 287.19L1441.59 287.19L1443.38 287.19L1445.17 287.19L1446.96 287.19L1448.75 287.19L1450.54 287.19L1452.33 287.19L1454.12 287.19L1455.91 287.19L1457.7 287.19L1459.49 287.19L1461.29 287.19L1463.08 287.19L1464.87 287.19L1466.66 287.19L1468.45 287.19L1470.24 287.19L1472.03 287.19L1473.82 287.19L1475.61 287.19L1477.4 287.19L1479.2 287.19L1480.99 287.19L1482.78 287.19L1484.57 287.19L1486.36 287.19L1488.15 287.19L1489.94 287.19L1491.73 287.19L1493.52 287.19L1495.31 287.19L1497.11 287.19L1498.9 287.19L1500.69 287.19L1502.48 287.19L1504.27 287.19L1506.06 287.19L1507.85 287.19L1509.64 287.19L1511.43 287.19L1513.22 287.19L1515.02 287.19L1516.81 287.19L1518.6 287.19L1520.39 287.19L1522.18 287.19L1523.97 287.19L1525.76 287.19L1527.55 287.18L1529.34 287.18L1531.13 287.18L1532.92 287.18L1534.72 287.17L1536.51 287.17L1538.3 287.17L1540.09 287.16L1541.88 287.16L1543.67 287.15L1545.46 287.15L1547.25 287.14L1549.04 287.14L1550.83 287.13L1552.63 287.12L1554.42 287.12L1556.21 287.11L1558 287.1L1559.79 287.1L1561.58 287.09L1563.37 287.08L1565.16 287.07L1566.95 287.06L1568.74 287.05L1570.54 287.04L1572.33 287.03L1574.12 287.02L1575.91 287.01L1577.7 287L1579.49 286.99L1581.28 286.98L1583.07 286.97L1584.86 286.96L1586.65 286.94L1588.44 286.93L1590.24 286.92L1592.03 286.9L1593.82 286.87L1595.61 286.83L1597.4 286.79L1599.19 286.74L1600.98 286.69L1602.77 286.63L1604.56 286.57L1606.35 286.51L1608.15 286.44L1609.94 286.36L1611.73 286.29L1613.52 286.21L1615.31 286.13L1617.1 286.05L1618.89 285.97L1620.68 285.88L1622.47 285.8L1624.26 285.72L1626.06 285.64L1627.85 285.56L1629.64 285.48L1631.43 285.4L1633.22 285.33L1635.01 285.26L1636.8 285.19L1638.59 285.13L1640.38 285.06L1642.17 285L1643.96 284.93L1645.76 284.86L1647.55 284.79L1649.34 284.71L1651.13 284.64L1652.92 284.57L1654.71 284.5L1656.5 284.43L1658.29 284.37L1660.08 284.32L1661.87 284.27L1663.67 284.23L1665.46 284.2L1667.25 284.18L1669.04 284.18L1670.83 284.19L1672.62 284.22L1674.41 284.26L1676.2 284.32L1677.99 284.4L1679.78 284.49L1681.58 284.59L1683.37 284.71L1685.16 284.83L1686.95 284.96L1688.74 285.09L1690.53 285.23L1692.32 285.37L1694.11 285.51L1695.9 285.65L1697.69 285.79L1699.48 285.92L1701.28 286.06L1703.07 286.18L1704.86 286.3L1706.65 286.41L1708.44 286.5L1710.23 286.59L1712.02 286.68L1713.81 286.77L1715.6 286.86L1717.39 286.95L1719.19 287.05L1720.98 287.14L1722.77 287.23L1724.56 287.32L1726.35 287.42L1728.14 287.51L1729.93 287.59L1731.72 287.68L1733.51 287.77L1735.3 287.85L1737.1 287.93L1738.89 288L1740.68 288.07L1742.47 288.14L1744.26 288.2L1746.05 288.26L1747.84 288.32L1749.63 288.36L1751.42 288.4L1753.21 288.44L1755.01 288.47L1756.8 288.49L1758.59 288.51L1760.38 288.52L1762.17 288.53L1763.96 288.54L1765.75 288.55L1767.54 288.56L1769.33 288.57L1771.12 288.58L1772.91 288.59L1774.71 288.6L1776.5 288.61L1778.29 288.62L1780.08 288.62L1781.87 288.63L1783.66 288.64L1785.45 288.64L1787.24 288.65L1789.03 288.66L1790.82 288.66L1792.62 288.67L1794.41 288.67L1796.2 288.68L1797.99 288.68L1799.78 288.69L1801.57 288.69L1803.36 288.7L1805.15 288.7L1806.94 288.71L1808.73 288.71L1810.53 288.72L1812.32 288.73L1814.11 288.73L1815.9 288.74L1817.69 288.75L1819.48 288.75L1821.27 288.76L1823.06 288.77L1824.85 288.78L1826.64 288.79L1828.43 288.79L1830.23 288.8L1832.02 288.81L1833.81 288.82L1835.6 288.83L1837.39 288.84L1839.18 288.84L1840.97 288.85L1842.76 288.86L1844.55 288.87L1846.34 288.88L1848.14 288.89L1849.93 288.9L1851.72 288.91L1853.51 288.91L1855.3 288.92L1857.09 288.93L1858.88 288.94L1860.67 288.95L1862.46 288.96L1864.25 288.97L1866.05 288.98L1867.84 288.99L1869.63 289L1871.42 289.01L1873.21 289.01L1875 289.02" stroke="#646464" stroke-width="3" fill="none" stroke-linejoin="round"/><path d="M1339.5 223.26L1341.21 223.29L1342.92 223.31L1344.64 223.34L1346.35 223.36L1348.06 223.39L1349.77 223.41L1351.49 223.43L1353.2 223.46L1354.91 223.48L1356.62 223.51L1358.33 223.53L1360.05 223.56L1361.76 223.58L1363.47 223.61L1365.18 223.63L1366.9 223.65L1368.61 223.68L1370.32 223.7L1372.03 223.73L1373.74 223.75L1375.46 223.77L1377.17 223.8L1378.88 223.82L1380.59 223.84L1382.31 223.87L1384.02 223.89L1385.73 223.91L1387.44 223.94L1389.15 223.96L1390.87 223.98L1392.58 224.01L1394.29 224.03L1396 224.05L1397.71 224.07L1399.43 224.09L1401.14 224.12L1402.85 224.14L1404.56 224.16L1406.28 224.18L1407.99 224.2L1409.7 224.22L1411.41 224.24L1413.12 224.26L1414.84 224.28L1416.55 224.31L1418.26 224.33L1419.97 224.35L1421.69 224.37L1423.4 224.39L1425.11 224.42L1426.82 224.44L1428.53 224.46L1430.25 224.49L1431.96 224.51L1433.67 224.54L1435.38 224.57L1437.1 224.6L1438.81 224.62L1440.52 224.66L1442.23 224.69L1443.94 224.72L1445.66 224.75L1447.37 224.79L1449.08 224.83L1450.79 224.86L1452.51 224.9L1454.22 224.95L1455.93 224.99L1457.64 225.03L1459.35 225.08L1461.07 225.13L1462.78 225.18L1464.49 225.23L1466.2 225.29L1467.92 225.35L1469.63 225.41L1471.34 225.47L1473.05 225.53L1474.76 225.6L1476.48 225.67L1478.19 225.74L1479.9 225.81L1481.61 225.88L1483.32 225.96L1485.04 226.04L1486.75 226.13L1488.46 226.21L1490.17 226.3L1491.89 226.39L1493.6 226.48L1495.31 226.58L1497.02 226.68L1498.73 226.78L1500.45 226.88L1502.16 226.99L1503.87 227.1L1505.58 227.21L1507.3 227.33L1509.01 227.45L1510.72 227.57L1512.43 227.69L1514.14 227.82L1515.86 227.95L1517.57 228.08L1519.28 228.22L1520.99 228.36L1522.71 228.5L1524.42 228.65L1526.13 228.8L1527.84 228.95L1529.55 229.11L1531.27 229.27L1532.98 229.43L1534.69 229.59L1536.4 229.76L1538.12 229.94L1539.83 230.11L1541.54 230.29L1543.25 230.47L1544.96 230.66L1546.68 230.85L1548.39 231.04L1550.1 231.24L1551.81 231.44L1553.53 231.65L1555.24 231.86L1556.95 232.07L1558.66 232.3L1560.37 232.53L1562.09 232.77L1563.8 233.02L1565.51 233.29L1567.22 233.56L1568.93 233.85L1570.65 234.15L1572.36 234.46L1574.07 234.79L1575.78 235.14L1577.5 235.5L1579.21 235.87L1580.92 236.24L1582.63 236.63L1584.34 237.01L1586.06 237.41L1587.77 237.8L1589.48 238.19L1591.19 238.58L1592.91 238.98L1594.62 239.37L1596.33 239.78L1598.04 240.2L1599.75 240.64L1601.47 241.1L1603.18 241.58L1604.89 242.09L1606.6 242.63L1608.32 243.2L1610.03 243.8L1611.74 244.41L1613.45 245.05L1615.16 245.7L1616.88 246.35L1618.59 247.02L1620.3 247.69L1622.01 248.37L1623.73 249.04L1625.44 249.71L1627.15 250.39L1628.86 251.1L1630.57 251.83L1632.29 252.6L1634 253.43L1635.71 254.31L1637.42 255.26L1639.14 256.29L1640.85 257.41L1642.56 258.61L1644.27 259.89L1645.98 261.23L1647.7 262.64L1649.41 264.1L1651.12 265.6L1652.83 267.14L1654.54 268.71L1656.26 270.3L1657.97 271.92L1659.68 273.57L1661.39 275.25L1663.11 276.97L1664.82 278.72L1666.53 280.52L1668.24 282.35L1669.95 284.24L1671.67 286.17L1673.38 288.12L1675.09 290.1L1676.8 292.08L1678.52 294.06L1680.23 296.02L1681.94 297.95L1683.65 299.84L1685.36 301.68L1687.08 303.46L1688.79 305.19L1690.5 306.87L1692.21 308.49L1693.93 310.06L1695.64 311.58L1697.35 313.05L1699.06 314.47L1700.77 315.84L1702.49 317.15L1704.2 318.42L1705.91 319.64L1707.62 320.81L1709.34 321.94L1711.05 323.02L1712.76 324.05L1714.47 325.05L1716.18 326L1717.9 326.9L1719.61 327.77L1721.32 328.6L1723.03 329.39L1724.75 330.14L1726.46 330.86L1728.17 331.54L1729.88 332.2L1731.59 332.82L1733.31 333.42L1735.02 333.99L1736.73 334.54L1738.44 335.07L1740.16 335.58L1741.87 336.08L1743.58 336.56L1745.29 337.02L1747 337.47L1748.72 337.91L1750.43 338.34L1752.14 338.75L1753.85 339.16L1755.56 339.55L1757.28 339.92L1758.99 340.29L1760.7 340.65L1762.41 340.99L1764.13 341.32L1765.84 341.65L1767.55 341.96L1769.26 342.26L1770.97 342.56L1772.69 342.84L1774.4 343.12L1776.11 343.38L1777.82 343.64L1779.54 343.89L1781.25 344.13L1782.96 344.36L1784.67 344.59L1786.38 344.8L1788.1 345.01L1789.81 345.22L1791.52 345.41L1793.23 345.61L1794.95 345.79L1796.66 345.97L1798.37 346.14L1800.08 346.31L1801.79 346.47L1803.51 346.63L1805.22 346.79L1806.93 346.94L1808.64 347.08L1810.36 347.23L1812.07 347.36L1813.78 347.5L1815.49 347.63L1817.2 347.76L1818.92 347.89L1820.63 348.01L1822.34 348.13L1824.05 348.25L1825.77 348.37L1827.48 348.48L1829.19 348.6L1830.9 348.71L1832.61 348.81L1834.33 348.92L1836.04 349.03L1837.75 349.13L1839.46 349.24L1841.17 349.34L1842.89 349.44L1844.6 349.54L1846.31 349.64L1848.02 349.74L1849.74 349.84L1851.45 349.94" stroke="#ff3030" stroke-width="1.5" fill="none" stroke-linejoin="round"/><path d="M1603.68 314.96L1604.01 315.01L1604.34 315.07L1604.66 315.12L1604.99 315.17L1605.32 315.23L1605.65 315.28L1605.98 315.33L1606.3 315.39L1606.63 315.44L1606.96 315.49L1607.29 315.54L1607.61 315.6L1607.94 315.65L1608.27 315.7L1608.6 315.76L1608.92 315.81L1609.25 315.86L1609.58 315.92L1609.91 315.97L1610.24 316.02L1610.56 316.08L1610.89 316.13L1611.22 316.19L1611.55 316.24L1611.87 316.29L1612.2 316.35L1612.53 316.4L1612.86 316.46L1613.19 316.51L1613.51 316.57L1613.84 316.62L1614.17 316.68L1614.5 316.73L1614.82 316.79L1615.15 316.84L1615.48 316.9L1615.81 316.95L1616.13 317.01L1616.46 317.06L1616.79 317.12L1617.12 317.18L1617.45 317.23L1617.77 317.29L1618.1 317.35L1618.43 317.4L1618.76 317.46L1619.08 317.52L1619.41 317.58L1619.74 317.63L1620.07 317.69L1620.4 317.75L1620.72 317.81L1621.05 317.87L1621.38 317.93L1621.71 317.98L1622.03 318.04L1622.36 318.1L1622.69 318.16L1623.02 318.22L1623.35 318.28L1623.67 318.34L1624 318.4L1624.33 318.46L1624.66 318.53L1624.98 318.59L1625.31 318.65L1625.64 318.71L1625.97 318.77L1626.29 318.84L1626.62 318.9L1626.95 318.96L1627.28 319.03L1627.61 319.09L1627.93 319.15L1628.26 319.22L1628.59 319.28L1628.92 319.35L1629.24 319.41L1629.57 319.48L1629.9 319.54L1630.23 319.61L1630.56 319.68L1630.88 319.74L1631.21 319.81L1631.54 319.88L1631.87 319.95L1632.19 320.01L1632.52 320.08L1632.85 320.15L1633.18 320.22L1633.5 320.29L1633.83 320.36L1634.16 320.43L1634.49 320.5L1634.82 320.57L1635.14 320.65L1635.47 320.72L1635.8 320.79L1636.13 320.86L1636.45 320.94L1636.78 321.01L1637.11 321.08L1637.44 321.16L1637.77 321.23L1638.09 321.31L1638.42 321.39L1638.75 321.46L1639.08 321.54L1639.4 321.62L1639.73 321.69L1640.06 321.77L1640.39 321.85L1640.71 321.93L1641.04 322.01L1641.37 322.09L1641.7 322.17L1642.03 322.25L1642.35 322.33L1642.68 322.41L1643.01 322.5L1643.34 322.58L1643.66 322.66L1643.99 322.75L1644.32 322.83L1644.65 322.92L1644.98 323L1645.3 323.09L1645.63 323.18L1645.96 323.27L1646.29 323.35L1646.61 323.44L1646.94 323.53L1647.27 323.62L1647.6 323.72L1647.92 323.81L1648.25 323.9L1648.58 323.99L1648.91 324.09L1649.24 324.18L1649.56 324.28L1649.89 324.38L1650.22 324.47L1650.55 324.57L1650.87 324.67L1651.2 324.77L1651.53 324.87L1651.86 324.97L1652.19 325.07L1652.51 325.18L1652.84 325.28L1653.17 325.38L1653.5 325.49L1653.82 325.6L1654.15 325.7L1654.48 325.81L1654.81 325.92L1655.13 326.03L1655.46 326.14L1655.79 326.25L1656.12 326.37L1656.45 326.48L1656.77 326.6L1657.1 326.71L1657.43 326.83L1657.76 326.95L1658.08 327.07L1658.41 327.19L1658.74 327.31L1659.07 327.43L1659.4 327.55L1659.72 327.67L1660.05 327.8L1660.38 327.93L1660.71 328.05L1661.03 328.18L1661.36 328.31L1661.69 328.44L1662.02 328.57L1662.34 328.71L1662.67 328.84L1663 328.98L1663.33 329.11L1663.66 329.25L1663.98 329.39L1664.31 329.53L1664.64 329.67L1664.97 329.81L1665.29 329.96L1665.62 330.1L1665.95 330.25L1666.28 330.39L1666.61 330.54L1666.93 330.69L1667.26 330.84L1667.59 330.99L1667.92 331.15L1668.24 331.3L1668.57 331.46L1668.9 331.61L1669.23 331.77L1669.55 331.93L1669.88 332.09L1670.21 332.25L1670.54 332.42L1670.87 332.58L1671.19 332.75L1671.52 332.91L1671.85 333.08L1672.18 333.25L1672.5 333.42L1672.83 333.6L1673.16 333.77L1673.49 333.94L1673.82 334.12L1674.14 334.3L1674.47 334.48L1674.8 334.66L1675.13 334.84L1675.45 335.02L1675.78 335.2L1676.11 335.39L1676.44 335.58L1676.77 335.77L1677.09 335.96L1677.42 336.15L1677.75 336.34L1678.08 336.53L1678.4 336.73L1678.73 336.92L1679.06 337.12L1679.39 337.32L1679.71 337.52L1680.04 337.72L1680.37 337.93L1680.7 338.13L1681.03 338.34L1681.35 338.55L1681.68 338.76L1682.01 338.97L1682.34 339.18L1682.66 339.39L1682.99 339.61L1683.32 339.83L1683.65 340.04L1683.98 340.26L1684.3 340.49L1684.63 340.71L1684.96 340.93L1685.29 341.16L1685.61 341.38L1685.94 341.61L1686.27 341.84L1686.6 342.07L1686.92 342.3L1687.25 342.54L1687.58 342.77L1687.91 343.01L1688.24 343.24L1688.56 343.48L1688.89 343.72L1689.22 343.96L1689.55 344.2L1689.87 344.44L1690.2 344.69L1690.53 344.93L1690.86 345.18L1691.19 345.42L1691.51 345.67L1691.84 345.92L1692.17 346.17L1692.5 346.42L1692.82 346.67L1693.15 346.92L1693.48 347.17L1693.81 347.42L1694.13 347.67L1694.46 347.93L1694.79 348.18L1695.12 348.43L1695.45 348.69L1695.77 348.95L1696.1 349.2L1696.43 349.46L1696.76 349.72L1697.08 349.97L1697.41 350.23L1697.74 350.49L1698.07 350.75L1698.4 351.01L1698.72 351.27L1699.05 351.53L1699.38 351.79L1699.71 352.05L1700.03 352.31L1700.36 352.57L1700.69 352.83L1701.02 353.09L1701.34 353.35L1701.67 353.61" stroke="#2a962a" stroke-width="1.4" fill="none" stroke-linejoin="round"/><path d="M1703.18 91.34L1703.53 91.69L1703.88 92.04L1704.24 92.38L1704.59 92.73L1704.94 93.07L1705.29 93.42L1705.64 93.77L1706 94.12L1706.35 94.46L1706.7 94.81L1707.05 95.16L1707.4 95.51L1707.76 95.86L1708.11 96.21L1708.46 96.56L1708.81 96.91L1709.16 97.27L1709.51 97.62L1709.87 97.98L1710.22 98.33L1710.57 98.69L1710.92 99.05L1711.27 99.41L1711.63 99.77L1711.98 100.13L1712.33 100.49L1712.68 100.86L1713.03 101.22L1713.39 101.59L1713.74 101.96L1714.09 102.33L1714.44 102.7L1714.79 103.08L1715.14 103.45L1715.5 103.83L1715.85 104.21L1716.2 104.59L1716.55 104.97L1716.9 105.36L1717.26 105.74L1717.61 106.12L1717.96 106.51L1718.31 106.89L1718.66 107.28L1719.02 107.66L1719.37 108.05L1719.72 108.43L1720.07 108.81L1720.42 109.2L1720.77 109.58L1721.13 109.96L1721.48 110.34L1721.83 110.71L1722.18 111.09L1722.53 111.46L1722.89 111.84L1723.24 112.21L1723.59 112.57L1723.94 112.94L1724.29 113.3L1724.65 113.66L1725 114.02L1725.35 114.37L1725.7 114.72L1726.05 115.06L1726.4 115.41L1726.76 115.74L1727.11 116.08L1727.46 116.41L1727.81 116.73L1728.16 117.05L1728.52 117.37L1728.87 117.68L1729.22 117.98L1729.57 118.28L1729.92 118.58L1730.28 118.87L1730.63 119.16L1730.98 119.44L1731.33 119.72L1731.68 119.99L1732.03 120.26L1732.39 120.52L1732.74 120.78L1733.09 121.03L1733.44 121.28L1733.79 121.53L1734.15 121.77L1734.5 122L1734.85 122.23L1735.2 122.46L1735.55 122.68L1735.91 122.9L1736.26 123.12L1736.61 123.33L1736.96 123.53L1737.31 123.74L1737.67 123.94L1738.02 124.13L1738.37 124.32L1738.72 124.51L1739.07 124.69L1739.42 124.87L1739.78 125.04L1740.13 125.21L1740.48 125.38L1740.83 125.54L1741.18 125.7L1741.54 125.86L1741.89 126.01L1742.24 126.16L1742.59 126.31L1742.94 126.45L1743.3 126.58L1743.65 126.72L1744 126.85L1744.35 126.97L1744.7 127.1L1745.05 127.21L1745.41 127.33L1745.76 127.43L1746.11 127.54L1746.46 127.64L1746.81 127.73L1747.17 127.82L1747.52 127.91L1747.87 127.99L1748.22 128.07L1748.57 128.14L1748.93 128.2L1749.28 128.26L1749.63 128.32L1749.98 128.37L1750.33 128.41L1750.68 128.45L1751.04 128.48L1751.39 128.51L1751.74 128.53L1752.09 128.55L1752.44 128.56L1752.8 128.56L1753.15 128.56L1753.5 128.55L1753.85 128.54L1754.2 128.52L1754.56 128.5L1754.91 128.47L1755.26 128.43L1755.61 128.4L1755.96 128.35L1756.31 128.3L1756.67 128.25L1757.02 128.19L1757.37 128.13L1757.72 128.06L1758.07 127.99L1758.43 127.91L1758.78 127.83L1759.13 127.75L1759.48 127.66L1759.83 127.57L1760.19 127.47L1760.54 127.37L1760.89 127.27L1761.24 127.16L1761.59 127.06L1761.94 126.94L1762.3 126.83L1762.65 126.71L1763 126.59L1763.35 126.46L1763.7 126.33L1764.06 126.2L1764.41 126.07L1764.76 125.93L1765.11 125.8L1765.46 125.65L1765.82 125.51L1766.17 125.37L1766.52 125.22L1766.87 125.07L1767.22 124.91L1767.58 124.76L1767.93 124.6L1768.28 124.44L1768.63 124.28L1768.98 124.12L1769.33 123.95L1769.69 123.79L1770.04 123.62L1770.39 123.45L1770.74 123.28L1771.09 123.1L1771.45 122.93L1771.8 122.75L1772.15 122.58L1772.5 122.4L1772.85 122.22L1773.21 122.04L1773.56 121.85L1773.91 121.67L1774.26 121.49L1774.61 121.3L1774.96 121.11L1775.32 120.93L1775.67 120.74L1776.02 120.55L1776.37 120.36L1776.72 120.17L1777.08 119.98L1777.43 119.79L1777.78 119.59L1778.13 119.4L1778.48 119.2L1778.84 119.01L1779.19 118.81L1779.54 118.61L1779.89 118.41L1780.24 118.2L1780.59 118L1780.95 117.79L1781.3 117.58L1781.65 117.37L1782 117.16L1782.35 116.94L1782.71 116.72L1783.06 116.5L1783.41 116.28L1783.76 116.05L1784.11 115.83L1784.47 115.59L1784.82 115.36L1785.17 115.12L1785.52 114.88L1785.87 114.64L1786.22 114.39L1786.58 114.14L1786.93 113.89L1787.28 113.63L1787.63 113.37L1787.98 113.11L1788.34 112.84L1788.69 112.57L1789.04 112.29L1789.39 112.01L1789.74 111.73L1790.1 111.44L1790.45 111.15L1790.8 110.85L1791.15 110.55L1791.5 110.24L1791.85 109.93L1792.21 109.61L1792.56 109.29L1792.91 108.97L1793.26 108.64L1793.61 108.3L1793.97 107.96L1794.32 107.62L1794.67 107.27L1795.02 106.91L1795.37 106.56L1795.73 106.19L1796.08 105.83L1796.43 105.46L1796.78 105.08L1797.13 104.71L1797.48 104.33L1797.84 103.94L1798.19 103.55L1798.54 103.16L1798.89 102.77L1799.24 102.37L1799.6 101.97L1799.95 101.57L1800.3 101.16L1800.65 100.75L1801 100.34L1801.36 99.93L1801.71 99.51L1802.06 99.1L1802.41 98.68L1802.76 98.26L1803.12 97.83L1803.47 97.41L1803.82 96.98L1804.17 96.55L1804.52 96.12L1804.87 95.69L1805.23 95.26L1805.58 94.83L1805.93 94.4L1806.28 93.96L1806.63 93.53L1806.99 93.09L1807.34 92.65L1807.69 92.22L1808.04 91.78L1808.39 91.34" stroke="#3a9a3a" stroke-width="1.3" fill="none" stroke-linejoin="round"/><path d="M1808.85 354L1809.07 353.69L1809.3 353.39L1809.52 353.08L1809.75 352.77L1809.97 352.46L1810.19 352.16L1810.42 351.85L1810.64 351.54L1810.87 351.23L1811.09 350.93L1811.31 350.62L1811.54 350.31L1811.76 350L1811.99 349.69L1812.21 349.38L1812.43 349.07L1812.66 348.76L1812.88 348.45L1813.11 348.14L1813.33 347.83L1813.56 347.52L1813.78 347.21L1814 346.9L1814.23 346.59L1814.45 346.28L1814.68 345.96L1814.9 345.65L1815.12 345.34L1815.35 345.02L1815.57 344.71L1815.8 344.39L1816.02 344.08L1816.24 343.76L1816.47 343.44L1816.69 343.12L1816.92 342.81L1817.14 342.49L1817.36 342.17L1817.59 341.85L1817.81 341.53L1818.04 341.21L1818.26 340.88L1818.48 340.56L1818.71 340.24L1818.93 339.91L1819.16 339.59L1819.38 339.26L1819.61 338.93L1819.83 338.61L1820.05 338.28L1820.28 337.95L1820.5 337.62L1820.73 337.29L1820.95 336.96L1821.17 336.62L1821.4 336.29L1821.62 335.95L1821.85 335.62L1822.07 335.28L1822.29 334.94L1822.52 334.6L1822.74 334.26L1822.97 333.92L1823.19 333.58L1823.41 333.24L1823.64 332.89L1823.86 332.55L1824.09 332.2L1824.31 331.85L1824.53 331.5L1824.76 331.15L1824.98 330.8L1825.21 330.45L1825.43 330.09L1825.66 329.74L1825.88 329.38L1826.1 329.03L1826.33 328.67L1826.55 328.31L1826.78 327.94L1827 327.58L1827.22 327.22L1827.45 326.85L1827.67 326.49L1827.9 326.12L1828.12 325.75L1828.34 325.38L1828.57 325.01L1828.79 324.63L1829.02 324.26L1829.24 323.88L1829.46 323.5L1829.69 323.12L1829.91 322.74L1830.14 322.36L1830.36 321.98L1830.58 321.59L1830.81 321.21L1831.03 320.82L1831.26 320.43L1831.48 320.04L1831.71 319.64L1831.93 319.25L1832.15 318.85L1832.38 318.45L1832.6 318.05L1832.83 317.65L1833.05 317.25L1833.27 316.85L1833.5 316.44L1833.72 316.03L1833.95 315.62L1834.17 315.21L1834.39 314.8L1834.62 314.38L1834.84 313.97L1835.07 313.55L1835.29 313.13L1835.51 312.71L1835.74 312.28L1835.96 311.86L1836.19 311.43L1836.41 311L1836.63 310.57L1836.86 310.14L1837.08 309.7L1837.31 309.26L1837.53 308.83L1837.76 308.39L1837.98 307.94L1838.2 307.5L1838.43 307.05L1838.65 306.6L1838.88 306.15L1839.1 305.7L1839.32 305.24L1839.55 304.79L1839.77 304.33L1840 303.86L1840.22 303.4L1840.44 302.94L1840.67 302.47L1840.89 302L1841.12 301.52L1841.34 301.05L1841.56 300.57L1841.79 300.09L1842.01 299.61L1842.24 299.13L1842.46 298.64L1842.68 298.15L1842.91 297.66L1843.13 297.17L1843.36 296.68L1843.58 296.18L1843.81 295.68L1844.03 295.17L1844.25 294.67L1844.48 294.16L1844.7 293.65L1844.93 293.14L1845.15 292.62L1845.37 292.11L1845.6 291.59L1845.82 291.06L1846.05 290.54L1846.27 290.01L1846.49 289.48L1846.72 288.95L1846.94 288.41L1847.17 287.87L1847.39 287.33L1847.61 286.79L1847.84 286.24L1848.06 285.69L1848.29 285.14L1848.51 284.59L1848.73 284.03L1848.96 283.48L1849.18 282.91L1849.41 282.35L1849.63 281.78L1849.86 281.22L1850.08 280.65L1850.3 280.07L1850.53 279.5L1850.75 278.92L1850.98 278.34L1851.2 277.76L1851.42 277.18L1851.65 276.59L1851.87 276L1852.1 275.41L1852.32 274.82L1852.54 274.22L1852.77 273.63L1852.99 273.03L1853.22 272.43L1853.44 271.83L1853.66 271.22L1853.89 270.61L1854.11 270.01L1854.34 269.4L1854.56 268.78L1854.79 268.17L1855.01 267.55L1855.23 266.94L1855.46 266.32L1855.68 265.7L1855.91 265.07L1856.13 264.45L1856.35 263.82L1856.58 263.2L1856.8 262.57L1857.03 261.93L1857.25 261.3L1857.47 260.67L1857.7 260.03L1857.92 259.4L1858.15 258.76L1858.37 258.12L1858.59 257.48L1858.82 256.83L1859.04 256.19L1859.27 255.54L1859.49 254.9L1859.71 254.25L1859.94 253.6L1860.16 252.95L1860.39 252.3L1860.61 251.65L1860.84 250.99L1861.06 250.34L1861.28 249.68L1861.51 249.02L1861.73 248.36L1861.96 247.7L1862.18 247.04L1862.4 246.38L1862.63 245.72L1862.85 245.06L1863.08 244.39L1863.3 243.73L1863.52 243.06L1863.75 242.39L1863.97 241.72L1864.2 241.05L1864.42 240.38L1864.64 239.71L1864.87 239.04L1865.09 238.37L1865.32 237.69L1865.54 237.02L1865.76 236.35L1865.99 235.67L1866.21 234.99L1866.44 234.32L1866.66 233.64L1866.89 232.96L1867.11 232.28L1867.33 231.6L1867.56 230.92L1867.78 230.24L1868.01 229.56L1868.23 228.87L1868.45 228.19L1868.68 227.51L1868.9 226.82L1869.13 226.14L1869.35 225.45L1869.57 224.77L1869.8 224.08L1870.02 223.4L1870.25 222.71L1870.47 222.02L1870.69 221.34L1870.92 220.65L1871.14 219.96L1871.37 219.27L1871.59 218.58L1871.81 217.89L1872.04 217.2L1872.26 216.51L1872.49 215.82L1872.71 215.13L1872.94 214.44L1873.16 213.75L1873.38 213.06L1873.61 212.37L1873.83 211.67L1874.06 210.98L1874.28 210.29L1874.5 209.6L1874.73 208.91L1874.95 208.22L1875.18 207.52L1875.4 206.83L1875.62 206.14L1875.85 205.45" stroke="#2a962a" stroke-width="1.4" fill="none" stroke-linejoin="round"/><path d="M1701.67 354 L1702.93 92 M1808.39 92 L1808.85 354" stroke="#1d8a1d" stroke-width="1.5"/></g><clipPath id="c_flt"><rect x="1340" y="407" width="537" height="263"/></clipPath><g clip-path="url(#c_flt)"><path d="M1339.5 461.13L1341.29 461.13L1343.08 461.12L1344.87 461.12L1346.66 461.11L1348.45 461.11L1350.25 461.1L1352.04 461.1L1353.83 461.1L1355.62 461.09L1357.41 461.09L1359.2 461.08L1360.99 461.08L1362.78 461.07L1364.57 461.07L1366.36 461.06L1368.16 461.06L1369.95 461.05L1371.74 461.05L1373.53 461.04L1375.32 461.04L1377.11 461.03L1378.9 461.03L1380.69 461.02L1382.48 461.01L1384.27 461.01L1386.07 461L1387.86 460.99L1389.65 460.99L1391.44 460.98L1393.23 460.97L1395.02 460.97L1396.81 460.96L1398.6 460.95L1400.39 460.94L1402.18 460.93L1403.97 460.93L1405.77 460.92L1407.56 460.91L1409.35 460.9L1411.14 460.89L1412.93 460.88L1414.72 460.87L1416.51 460.86L1418.3 460.85L1420.09 460.84L1421.88 460.83L1423.68 460.81L1425.47 460.8L1427.26 460.79L1429.05 460.78L1430.84 460.76L1432.63 460.75L1434.42 460.74L1436.21 460.72L1438 460.71L1439.79 460.69L1441.59 460.68L1443.38 460.66L1445.17 460.65L1446.96 460.63L1448.75 460.61L1450.54 460.6L1452.33 460.58L1454.12 460.56L1455.91 460.54L1457.7 460.52L1459.49 460.5L1461.29 460.48L1463.08 460.46L1464.87 460.44L1466.66 460.42L1468.45 460.4L1470.24 460.38L1472.03 460.35L1473.82 460.33L1475.61 460.31L1477.4 460.28L1479.2 460.26L1480.99 460.24L1482.78 460.22L1484.57 460.19L1486.36 460.17L1488.15 460.15L1489.94 460.13L1491.73 460.11L1493.52 460.09L1495.31 460.07L1497.11 460.05L1498.9 460.03L1500.69 460.02L1502.48 460L1504.27 459.98L1506.06 459.97L1507.85 459.96L1509.64 459.94L1511.43 459.93L1513.22 459.92L1515.02 459.92L1516.81 459.91L1518.6 459.91L1520.39 459.9L1522.18 459.9L1523.97 459.9L1525.76 459.9L1527.55 459.91L1529.34 459.91L1531.13 459.92L1532.92 459.93L1534.72 459.94L1536.51 459.96L1538.3 459.97L1540.09 459.98L1541.88 460L1543.67 460.01L1545.46 460.02L1547.25 460.03L1549.04 460.04L1550.83 460.04L1552.63 460.04L1554.42 460.04L1556.21 460.03L1558 460.02L1559.79 460L1561.58 459.98L1563.37 459.95L1565.16 459.91L1566.95 459.87L1568.74 459.81L1570.54 459.75L1572.33 459.68L1574.12 459.6L1575.91 459.51L1577.7 459.41L1579.49 459.29L1581.28 459.17L1583.07 459.03L1584.86 458.89L1586.65 458.73L1588.44 458.57L1590.24 458.4L1592.03 458.22L1593.82 458.04L1595.61 457.85L1597.4 457.65L1599.19 457.45L1600.98 457.25L1602.77 457.05L1604.56 456.84L1606.35 456.63L1608.15 456.43L1609.94 456.22L1611.73 456.01L1613.52 455.81L1615.31 455.6L1617.1 455.4L1618.89 455.2L1620.68 455L1622.47 454.81L1624.26 454.62L1626.06 454.44L1627.85 454.26L1629.64 454.08L1631.43 453.91L1633.22 453.75L1635.01 453.59L1636.8 453.44L1638.59 453.3L1640.38 453.17L1642.17 453.05L1643.96 452.93L1645.76 452.83L1647.55 452.77L1649.34 452.74L1651.13 452.77L1652.92 452.87L1654.71 453.04L1656.5 453.3L1658.29 453.63L1660.08 454.03L1661.87 454.49L1663.67 455.02L1665.46 455.61L1667.25 456.25L1669.04 456.94L1670.83 457.68L1672.62 458.48L1674.41 459.33L1676.2 460.25L1677.99 461.24L1679.78 462.31L1681.58 463.45L1683.37 464.68L1685.16 466.01L1686.95 467.43L1688.74 468.96L1690.53 470.57L1692.32 472.27L1694.11 474.05L1695.9 475.91L1697.69 477.83L1699.48 479.81L1701.28 481.84L1703.07 483.92L1704.86 486.04L1706.65 488.2L1708.44 490.4L1710.23 492.63L1712.02 494.89L1713.81 497.17L1715.6 499.48L1717.39 501.81L1719.19 504.16L1720.98 506.52L1722.77 508.89L1724.56 511.28L1726.35 513.68L1728.14 516.08L1729.93 518.49L1731.72 520.91L1733.51 523.32L1735.3 525.74L1737.1 528.16L1738.89 530.58L1740.68 533L1742.47 535.42L1744.26 537.83L1746.05 540.25L1747.84 542.66L1749.63 545.08L1751.42 547.48L1753.21 549.89L1755.01 552.29L1756.8 554.69L1758.59 557.08L1760.38 559.47L1762.17 561.86L1763.96 564.23L1765.75 566.6L1767.54 568.96L1769.33 571.31L1771.12 573.65L1772.91 575.98L1774.71 578.3L1776.5 580.61L1778.29 582.91L1780.08 585.19L1781.87 587.46L1783.66 589.71L1785.45 591.94L1787.24 594.17L1789.03 596.39L1790.82 598.6L1792.62 600.8L1794.41 603.01L1796.2 605.22L1797.99 607.44L1799.78 609.66L1801.57 611.9L1803.36 614.15L1805.15 616.42L1806.94 618.71L1808.73 621.03L1810.53 623.37L1812.32 625.73L1814.11 628.1L1815.9 630.47L1817.69 632.84L1819.48 635.18L1821.27 637.51L1823.06 639.8L1824.85 642.05L1826.64 644.25L1828.43 646.39L1830.23 648.47L1832.02 650.47L1833.81 652.39L1835.6 654.21L1837.39 655.96L1839.18 657.65L1840.97 659.3L1842.76 660.94L1844.55 662.57L1846.34 664.23L1848.14 665.92L1849.93 667.68L1851.72 669.52L1853.51 671L1855.3 671L1857.09 671L1858.88 671L1860.67 671L1862.46 671L1864.25 671L1866.05 671L1867.84 671L1869.63 671L1871.42 671L1873.21 671L1875 671" stroke="#ff3a3a" stroke-width="1.5" fill="none" stroke-linejoin="round"/><path d="M1603.68 669L1604.59 667.47L1605.5 665.94L1606.4 664.41L1607.31 662.88L1608.22 661.34L1609.13 659.81L1610.03 658.27L1610.94 656.74L1611.85 655.21L1612.76 653.67L1613.66 652.13L1614.57 650.6L1615.48 649.06L1616.39 647.53L1617.29 645.99L1618.2 644.46L1619.11 642.92L1620.01 641.39L1620.92 639.85L1621.83 638.32L1622.74 636.79L1623.64 635.25L1624.55 633.72L1625.46 632.19L1626.37 630.66L1627.27 629.13L1628.18 627.6L1629.09 626.07L1630 624.55L1630.9 623.02L1631.81 621.5L1632.72 619.98L1633.63 618.46L1634.53 616.94L1635.44 615.42L1636.35 613.9L1637.26 612.39L1638.16 610.88L1639.07 609.37L1639.98 607.86L1640.89 606.35L1641.79 604.85L1642.7 603.35L1643.61 601.85L1644.52 600.35L1645.42 598.85L1646.33 597.36L1647.24 595.87L1648.14 594.38L1649.05 592.89L1649.96 591.4L1650.87 589.92L1651.77 588.43L1652.68 586.95L1653.59 585.47L1654.5 583.99L1655.4 582.51L1656.31 581.03L1657.22 579.55L1658.13 578.07L1659.03 576.59L1659.94 575.11L1660.85 573.63L1661.76 572.15L1662.66 570.67L1663.57 569.19L1664.48 567.71L1665.39 566.23L1666.29 564.74L1667.2 563.26L1668.11 561.78L1669.02 560.29L1669.92 558.81L1670.83 557.32L1671.74 555.84L1672.65 554.35L1673.55 552.87L1674.46 551.38L1675.37 549.9L1676.27 548.42L1677.18 546.93L1678.09 545.45L1679 543.97L1679.9 542.49L1680.81 541.01L1681.72 539.53L1682.63 538.06L1683.53 536.59L1684.44 535.11L1685.35 533.64L1686.26 532.18L1687.16 530.71L1688.07 529.25L1688.98 527.79L1689.89 526.35L1690.79 524.91L1691.7 523.48L1692.61 522.06L1693.52 520.66L1694.42 519.28L1695.33 517.91L1696.24 516.57L1697.15 515.24L1698.05 513.94L1698.96 512.67L1699.87 511.42L1700.78 510.2L1701.68 509.01L1702.59 507.85L1703.5 506.73L1704.4 505.64L1705.31 504.58L1706.22 503.56L1707.13 502.57L1708.03 501.61L1708.94 500.69L1709.85 499.81L1710.76 498.96L1711.66 498.14L1712.57 497.36L1713.48 496.62L1714.39 495.91L1715.29 495.24L1716.2 494.6L1717.11 494L1718.02 493.44L1718.92 492.91L1719.83 492.41L1720.74 491.95L1721.65 491.53L1722.55 491.13L1723.46 490.77L1724.37 490.44L1725.28 490.14L1726.18 489.87L1727.09 489.63L1728 489.43L1728.91 489.25L1729.81 489.1L1730.72 488.98L1731.63 488.89L1732.53 488.83L1733.44 488.79L1734.35 488.77L1735.26 488.78L1736.16 488.81L1737.07 488.86L1737.98 488.93L1738.89 489.02L1739.79 489.13L1740.7 489.25L1741.61 489.39L1742.52 489.54L1743.42 489.71L1744.33 489.89L1745.24 490.07L1746.15 490.27L1747.05 490.48L1747.96 490.69L1748.87 490.92L1749.78 491.14L1750.68 491.37L1751.59 491.6L1752.5 491.84L1753.41 492.08L1754.31 492.31L1755.22 492.54L1756.13 492.77L1757.04 493L1757.94 493.22L1758.85 493.44L1759.76 493.65L1760.67 493.86L1761.57 494.06L1762.48 494.25L1763.39 494.44L1764.29 494.62L1765.2 494.8L1766.11 494.98L1767.02 495.15L1767.92 495.31L1768.83 495.47L1769.74 495.62L1770.65 495.78L1771.55 495.92L1772.46 496.07L1773.37 496.2L1774.28 496.34L1775.18 496.47L1776.09 496.6L1777 496.72L1777.91 496.84L1778.81 496.96L1779.72 497.08L1780.63 497.19L1781.54 497.3L1782.44 497.4L1783.35 497.51L1784.26 497.61L1785.17 497.71L1786.07 497.8L1786.98 497.89L1787.89 497.99L1788.8 498.07L1789.7 498.16L1790.61 498.25L1791.52 498.33L1792.42 498.41L1793.33 498.49L1794.24 498.56L1795.15 498.64L1796.05 498.71L1796.96 498.78L1797.87 498.85L1798.78 498.92L1799.68 498.98L1800.59 499.04L1801.5 499.1L1802.41 499.16L1803.31 499.22L1804.22 499.28L1805.13 499.33L1806.04 499.39L1806.94 499.44L1807.85 499.49L1808.76 499.54L1809.67 499.59L1810.57 499.64L1811.48 499.68L1812.39 499.73L1813.3 499.77L1814.2 499.81L1815.11 499.86L1816.02 499.9L1816.93 499.94L1817.83 499.98L1818.74 500.01L1819.65 500.05L1820.55 500.09L1821.46 500.12L1822.37 500.16L1823.28 500.19L1824.18 500.23L1825.09 500.26L1826 500.29L1826.91 500.32L1827.81 500.35L1828.72 500.38L1829.63 500.41L1830.54 500.44L1831.44 500.47L1832.35 500.5L1833.26 500.53L1834.17 500.56L1835.07 500.58L1835.98 500.61L1836.89 500.64L1837.8 500.66L1838.7 500.69L1839.61 500.71L1840.52 500.73L1841.43 500.76L1842.33 500.78L1843.24 500.8L1844.15 500.83L1845.06 500.85L1845.96 500.87L1846.87 500.89L1847.78 500.91L1848.68 500.93L1849.59 500.95L1850.5 500.97L1851.41 500.99L1852.31 501.01L1853.22 501.03L1854.13 501.05L1855.04 501.07L1855.94 501.08L1856.85 501.1L1857.76 501.12L1858.67 501.14L1859.57 501.15L1860.48 501.17L1861.39 501.19L1862.3 501.2L1863.2 501.22L1864.11 501.24L1865.02 501.25L1865.93 501.27L1866.83 501.28L1867.74 501.3L1868.65 501.32L1869.56 501.33L1870.46 501.35L1871.37 501.36L1872.28 501.38L1873.19 501.39L1874.09 501.41L1875 501.42" stroke="#2a9a2a" stroke-width="1.5" fill="none" stroke-linejoin="round"/></g><clipPath id="c_imp"><rect x="1340" y="722" width="537" height="265"/></clipPath><g clip-path="url(#c_imp)"><path d="M1339.5 853.4L1341.29 853.43L1343.08 853.45L1344.87 853.48L1346.66 853.51L1348.45 853.53L1350.25 853.56L1352.04 853.58L1353.83 853.61L1355.62 853.64L1357.41 853.66L1359.2 853.69L1360.99 853.72L1362.78 853.74L1364.57 853.77L1366.36 853.8L1368.16 853.83L1369.95 853.85L1371.74 853.88L1373.53 853.91L1375.32 853.94L1377.11 853.96L1378.9 853.99L1380.69 854.02L1382.48 854.05L1384.27 854.08L1386.07 854.11L1387.86 854.13L1389.65 854.16L1391.44 854.19L1393.23 854.22L1395.02 854.25L1396.81 854.28L1398.6 854.31L1400.39 854.34L1402.18 854.37L1403.97 854.4L1405.77 854.44L1407.56 854.47L1409.35 854.5L1411.14 854.53L1412.93 854.56L1414.72 854.6L1416.51 854.63L1418.3 854.66L1420.09 854.7L1421.88 854.73L1423.68 854.76L1425.47 854.8L1427.26 854.83L1429.05 854.87L1430.84 854.91L1432.63 854.94L1434.42 854.98L1436.21 855.01L1438 855.05L1439.79 855.09L1441.59 855.13L1443.38 855.17L1445.17 855.21L1446.96 855.24L1448.75 855.28L1450.54 855.33L1452.33 855.37L1454.12 855.41L1455.91 855.45L1457.7 855.49L1459.49 855.53L1461.29 855.58L1463.08 855.62L1464.87 855.66L1466.66 855.71L1468.45 855.76L1470.24 855.8L1472.03 855.85L1473.82 855.9L1475.61 855.94L1477.4 855.99L1479.2 856.04L1480.99 856.1L1482.78 856.15L1484.57 856.2L1486.36 856.26L1488.15 856.31L1489.94 856.37L1491.73 856.43L1493.52 856.49L1495.31 856.56L1497.11 856.62L1498.9 856.69L1500.69 856.75L1502.48 856.82L1504.27 856.9L1506.06 856.97L1507.85 857.05L1509.64 857.12L1511.43 857.21L1513.22 857.29L1515.02 857.37L1516.81 857.46L1518.6 857.55L1520.39 857.64L1522.18 857.74L1523.97 857.84L1525.76 857.94L1527.55 858.04L1529.34 858.15L1531.13 858.25L1532.92 858.36L1534.72 858.47L1536.51 858.58L1538.3 858.7L1540.09 858.81L1541.88 858.93L1543.67 859.04L1545.46 859.16L1547.25 859.28L1549.04 859.4L1550.83 859.52L1552.63 859.64L1554.42 859.76L1556.21 859.88L1558 860L1559.79 860.12L1561.58 860.25L1563.37 860.37L1565.16 860.49L1566.95 860.61L1568.74 860.73L1570.54 860.85L1572.33 860.96L1574.12 861.08L1575.91 861.2L1577.7 861.31L1579.49 861.42L1581.28 861.53L1583.07 861.63L1584.86 861.73L1586.65 861.83L1588.44 861.92L1590.24 862L1592.03 862.08L1593.82 862.15L1595.61 862.22L1597.4 862.27L1599.19 862.32L1600.98 862.36L1602.77 862.39L1604.56 862.41L1606.35 862.41L1608.15 862.41L1609.94 862.39L1611.73 862.35L1613.52 862.3L1615.31 862.23L1617.1 862.14L1618.89 862.03L1620.68 861.89L1622.47 861.73L1624.26 861.55L1626.06 861.34L1627.85 861.09L1629.64 860.82L1631.43 860.51L1633.22 860.17L1635.01 859.78L1636.8 859.36L1638.59 858.89L1640.38 858.37L1642.17 857.8L1643.96 857.18L1645.76 856.51L1647.55 855.8L1649.34 855.07L1651.13 854.31L1652.92 853.55L1654.71 852.79L1656.5 852.03L1658.29 851.3L1660.08 850.59L1661.87 849.93L1663.67 849.31L1665.46 848.74L1667.25 848.23L1669.04 847.8L1670.83 847.44L1672.62 847.16L1674.41 846.98L1676.2 846.9L1677.99 846.93L1679.78 847.08L1681.58 847.37L1683.37 847.81L1685.16 848.44L1686.95 849.27L1688.74 850.31L1690.53 851.59L1692.32 853.12L1694.11 854.84L1695.9 856.69L1697.69 858.57L1699.48 860.4L1701.28 862.09L1703.07 863.57L1704.86 864.75L1706.65 865.54L1708.44 865.9L1710.23 865.84L1712.02 865.43L1713.81 864.71L1715.6 863.73L1717.39 862.54L1719.19 861.19L1720.98 859.74L1722.77 858.23L1724.56 856.71L1726.35 855.23L1728.14 853.85L1729.93 852.59L1731.72 851.45L1733.51 850.41L1735.3 849.47L1737.1 848.62L1738.89 847.85L1740.68 847.15L1742.47 846.52L1744.26 845.93L1746.05 845.38L1747.84 844.87L1749.63 844.38L1751.42 843.92L1753.21 843.48L1755.01 843.07L1756.8 842.68L1758.59 842.32L1760.38 841.98L1762.17 841.68L1763.96 841.39L1765.75 841.13L1767.54 840.9L1769.33 840.7L1771.12 840.52L1772.91 840.37L1774.71 840.24L1776.5 840.14L1778.29 840.07L1780.08 840.02L1781.87 840L1783.66 840L1785.45 840.02L1787.24 840.06L1789.03 840.12L1790.82 840.19L1792.62 840.29L1794.41 840.4L1796.2 840.52L1797.99 840.66L1799.78 840.8L1801.57 840.96L1803.36 841.13L1805.15 841.31L1806.94 841.49L1808.73 841.69L1810.53 841.88L1812.32 842.08L1814.11 842.28L1815.9 842.49L1817.69 842.69L1819.48 842.89L1821.27 843.09L1823.06 843.29L1824.85 843.49L1826.64 843.68L1828.43 843.87L1830.23 844.06L1832.02 844.25L1833.81 844.43L1835.6 844.62L1837.39 844.8L1839.18 844.98L1840.97 845.15L1842.76 845.33L1844.55 845.5L1846.34 845.67L1848.14 845.85L1849.93 846.01L1851.72 846.18L1853.51 846.35L1855.3 846.52L1857.09 846.68L1858.88 846.85L1860.67 847.01L1862.46 847.17L1864.25 847.33L1866.05 847.5L1867.84 847.66L1869.63 847.82L1871.42 847.98L1873.21 848.14L1875 848.3" stroke="#a8a8a8" stroke-width="1.3" fill="none" stroke-linejoin="round"/><path d="M1339.5 931.5L1341.29 931.5L1343.08 931.5L1344.87 931.5L1346.66 931.51L1348.45 931.51L1350.25 931.51L1352.04 931.51L1353.83 931.51L1355.62 931.51L1357.41 931.51L1359.2 931.51L1360.99 931.52L1362.78 931.52L1364.57 931.52L1366.36 931.52L1368.16 931.52L1369.95 931.52L1371.74 931.52L1373.53 931.53L1375.32 931.53L1377.11 931.53L1378.9 931.53L1380.69 931.53L1382.48 931.53L1384.27 931.53L1386.07 931.54L1387.86 931.54L1389.65 931.54L1391.44 931.54L1393.23 931.54L1395.02 931.54L1396.81 931.54L1398.6 931.55L1400.39 931.55L1402.18 931.55L1403.97 931.55L1405.77 931.55L1407.56 931.55L1409.35 931.55L1411.14 931.55L1412.93 931.56L1414.72 931.56L1416.51 931.56L1418.3 931.56L1420.09 931.56L1421.88 931.56L1423.68 931.57L1425.47 931.57L1427.26 931.57L1429.05 931.57L1430.84 931.57L1432.63 931.57L1434.42 931.57L1436.21 931.58L1438 931.58L1439.79 931.58L1441.59 931.58L1443.38 931.58L1445.17 931.58L1446.96 931.58L1448.75 931.59L1450.54 931.59L1452.33 931.59L1454.12 931.59L1455.91 931.59L1457.7 931.59L1459.49 931.6L1461.29 931.6L1463.08 931.6L1464.87 931.6L1466.66 931.6L1468.45 931.6L1470.24 931.61L1472.03 931.61L1473.82 931.61L1475.61 931.62L1477.4 931.62L1479.2 931.63L1480.99 931.63L1482.78 931.64L1484.57 931.65L1486.36 931.67L1488.15 931.68L1489.94 931.69L1491.73 931.71L1493.52 931.73L1495.31 931.75L1497.11 931.78L1498.9 931.81L1500.69 931.84L1502.48 931.87L1504.27 931.91L1506.06 931.94L1507.85 931.99L1509.64 932.03L1511.43 932.08L1513.22 932.14L1515.02 932.19L1516.81 932.26L1518.6 932.32L1520.39 932.39L1522.18 932.47L1523.97 932.55L1525.76 932.63L1527.55 932.72L1529.34 932.81L1531.13 932.91L1532.92 933.01L1534.72 933.12L1536.51 933.23L1538.3 933.34L1540.09 933.46L1541.88 933.59L1543.67 933.72L1545.46 933.86L1547.25 934L1549.04 934.14L1550.83 934.29L1552.63 934.45L1554.42 934.61L1556.21 934.77L1558 934.94L1559.79 935.12L1561.58 935.3L1563.37 935.49L1565.16 935.69L1566.95 935.9L1568.74 936.12L1570.54 936.35L1572.33 936.6L1574.12 936.87L1575.91 937.15L1577.7 937.46L1579.49 937.78L1581.28 938.11L1583.07 938.46L1584.86 938.82L1586.65 939.19L1588.44 939.57L1590.24 939.96L1592.03 940.34L1593.82 940.73L1595.61 941.12L1597.4 941.51L1599.19 941.9L1600.98 942.28L1602.77 942.65L1604.56 943.01L1606.35 943.37L1608.15 943.71L1609.94 944.03L1611.73 944.34L1613.52 944.64L1615.31 944.92L1617.1 945.18L1618.89 945.44L1620.68 945.68L1622.47 945.91L1624.26 946.14L1626.06 946.36L1627.85 946.57L1629.64 946.77L1631.43 946.97L1633.22 947.16L1635.01 947.36L1636.8 947.55L1638.59 947.74L1640.38 947.94L1642.17 948.13L1643.96 948.33L1645.76 948.53L1647.55 948.71L1649.34 948.87L1651.13 948.99L1652.92 949.07L1654.71 949.1L1656.5 949.06L1658.29 948.94L1660.08 948.73L1661.87 948.41L1663.67 947.98L1665.46 947.42L1667.25 946.71L1669.04 945.84L1670.83 944.8L1672.62 943.58L1674.41 942.18L1676.2 940.65L1677.99 939.07L1679.78 937.48L1681.58 935.95L1683.37 934.55L1685.16 933.32L1686.95 932.34L1688.74 931.67L1690.53 931.36L1692.32 931.47L1694.11 932.04L1695.9 932.98L1697.69 934.24L1699.48 935.75L1701.28 937.42L1703.07 939.2L1704.86 941.01L1706.65 942.77L1708.44 944.43L1710.23 945.94L1712.02 947.3L1713.81 948.51L1715.6 949.59L1717.39 950.52L1719.19 951.33L1720.98 952L1722.77 952.55L1724.56 952.97L1726.35 953.27L1728.14 953.45L1729.93 953.52L1731.72 953.47L1733.51 953.33L1735.3 953.09L1737.1 952.77L1738.89 952.37L1740.68 951.92L1742.47 951.41L1744.26 950.85L1746.05 950.27L1747.84 949.66L1749.63 949.04L1751.42 948.41L1753.21 947.78L1755.01 947.17L1756.8 946.56L1758.59 945.97L1760.38 945.38L1762.17 944.8L1763.96 944.23L1765.75 943.66L1767.54 943.11L1769.33 942.57L1771.12 942.03L1772.91 941.51L1774.71 940.99L1776.5 940.49L1778.29 939.99L1780.08 939.5L1781.87 939.02L1783.66 938.55L1785.45 938.1L1787.24 937.65L1789.03 937.21L1790.82 936.78L1792.62 936.36L1794.41 935.95L1796.2 935.55L1797.99 935.16L1799.78 934.78L1801.57 934.41L1803.36 934.05L1805.15 933.7L1806.94 933.36L1808.73 933.02L1810.53 932.7L1812.32 932.39L1814.11 932.09L1815.9 931.8L1817.69 931.51L1819.48 931.24L1821.27 930.98L1823.06 930.72L1824.85 930.48L1826.64 930.24L1828.43 930.02L1830.23 929.8L1832.02 929.59L1833.81 929.38L1835.6 929.19L1837.39 929L1839.18 928.82L1840.97 928.64L1842.76 928.47L1844.55 928.31L1846.34 928.15L1848.14 928L1849.93 927.85L1851.72 927.71L1853.51 927.57L1855.3 927.43L1857.09 927.3L1858.88 927.17L1860.67 927.04L1862.46 926.92L1864.25 926.8L1866.05 926.68L1867.84 926.56L1869.63 926.44L1871.42 926.33L1873.21 926.21L1875 926.1" stroke="#636363" stroke-width="3" fill="none" stroke-linejoin="round"/></g><g fill="#000"><text x="985.5" y="84" text-anchor="middle" font-size="15">SPL</text><text x="719" y="88" font-size="15">dB</text><text x="1251" y="88" text-anchor="end" font-size="15">deg</text><text transform="translate(713.5,95.4) scale(0.9,1)" font-size="16" text-anchor="end">110</text><text transform="translate(713.5,127.4) scale(0.9,1)" font-size="16" text-anchor="end">105</text><text transform="translate(713.5,160.4) scale(0.9,1)" font-size="16" text-anchor="end">100</text><text transform="translate(713.5,193.4) scale(0.9,1)" font-size="16" text-anchor="end">95</text><text transform="translate(713.5,226.4) scale(0.9,1)" font-size="16" text-anchor="end">90</text><text transform="translate(713.5,258.4) scale(0.9,1)" font-size="16" text-anchor="end">85</text><text transform="translate(713.5,291.4) scale(0.9,1)" font-size="16" text-anchor="end">80</text><text transform="translate(713.5,324.4) scale(0.9,1)" font-size="16" text-anchor="end">75</text><text transform="translate(713.5,357.4) scale(0.9,1)" font-size="16" text-anchor="end">70</text><text transform="translate(1273,95.4) scale(0.9,1)" font-size="16" text-anchor="middle">180</text><text transform="translate(1273,127.4) scale(0.9,1)" font-size="16" text-anchor="middle">135</text><text transform="translate(1273,160.4) scale(0.9,1)" font-size="16" text-anchor="middle">90</text><text transform="translate(1273,193.4) scale(0.9,1)" font-size="16" text-anchor="middle">45</text><text transform="translate(1273,226.4) scale(0.9,1)" font-size="16" text-anchor="middle">0</text><text transform="translate(1273,258.4) scale(0.9,1)" font-size="16" text-anchor="middle">-45</text><text transform="translate(1273,291.4) scale(0.9,1)" font-size="16" text-anchor="middle">-90</text><text transform="translate(1273,324.4) scale(0.9,1)" font-size="16" text-anchor="middle">-135</text><text transform="translate(1273,357.4) scale(0.9,1)" font-size="16" text-anchor="middle">-180</text><text transform="translate(717.4,370) scale(0.9,1)" font-size="16" text-anchor="middle">20Hz</text><text transform="translate(788.59,370) scale(0.9,1)" font-size="16" text-anchor="middle">50</text><text transform="translate(842.45,370) scale(0.9,1)" font-size="16" text-anchor="middle">100</text><text transform="translate(896.3,370) scale(0.9,1)" font-size="16" text-anchor="middle">200</text><text transform="translate(967.49,370) scale(0.9,1)" font-size="16" text-anchor="middle">500</text><text transform="translate(1021.35,370) scale(0.9,1)" font-size="16" text-anchor="middle">1k</text><text transform="translate(1075.2,370) scale(0.9,1)" font-size="16" text-anchor="middle">2k</text><text transform="translate(1146.39,370) scale(0.9,1)" font-size="16" text-anchor="middle">5k</text><text transform="translate(1200.25,370) scale(0.9,1)" font-size="16" text-anchor="middle">10k</text><text transform="translate(1254.1,370) scale(0.9,1)" font-size="16" text-anchor="middle">20k</text></g><g fill="#000"><text x="985.5" y="399" text-anchor="middle" font-size="15">Power &amp; DI</text><text x="719" y="403" font-size="15">dB</text><text x="1251" y="403" text-anchor="end" font-size="15">dB</text><text transform="translate(713.5,410.4) scale(0.9,1)" font-size="16" text-anchor="end">110</text><text transform="translate(713.5,442.4) scale(0.9,1)" font-size="16" text-anchor="end">105</text><text transform="translate(713.5,475.4) scale(0.9,1)" font-size="16" text-anchor="end">100</text><text transform="translate(713.5,508.4) scale(0.9,1)" font-size="16" text-anchor="end">95</text><text transform="translate(713.5,541.4) scale(0.9,1)" font-size="16" text-anchor="end">90</text><text transform="translate(713.5,573.4) scale(0.9,1)" font-size="16" text-anchor="end">85</text><text transform="translate(713.5,606.4) scale(0.9,1)" font-size="16" text-anchor="end">80</text><text transform="translate(713.5,639.4) scale(0.9,1)" font-size="16" text-anchor="end">75</text><text transform="translate(713.5,672.4) scale(0.9,1)" font-size="16" text-anchor="end">70</text><text transform="translate(1273,410.4) scale(0.9,1)" font-size="16" text-anchor="middle">35</text><text transform="translate(1273,442.4) scale(0.9,1)" font-size="16" text-anchor="middle">30</text><text transform="translate(1273,475.4) scale(0.9,1)" font-size="16" text-anchor="middle">25</text><text transform="translate(1273,508.4) scale(0.9,1)" font-size="16" text-anchor="middle">20</text><text transform="translate(1273,541.4) scale(0.9,1)" font-size="16" text-anchor="middle">15</text><text transform="translate(1273,573.4) scale(0.9,1)" font-size="16" text-anchor="middle">10</text><text transform="translate(1273,606.4) scale(0.9,1)" font-size="16" text-anchor="middle">5</text><text transform="translate(1273,639.4) scale(0.9,1)" font-size="16" text-anchor="middle">0</text><text transform="translate(1273,672.4) scale(0.9,1)" font-size="16" text-anchor="middle">-5</text><text transform="translate(717.4,685) scale(0.9,1)" font-size="16" text-anchor="middle">20Hz</text><text transform="translate(788.59,685) scale(0.9,1)" font-size="16" text-anchor="middle">50</text><text transform="translate(842.45,685) scale(0.9,1)" font-size="16" text-anchor="middle">100</text><text transform="translate(896.3,685) scale(0.9,1)" font-size="16" text-anchor="middle">200</text><text transform="translate(967.49,685) scale(0.9,1)" font-size="16" text-anchor="middle">500</text><text transform="translate(1021.35,685) scale(0.9,1)" font-size="16" text-anchor="middle">1k</text><text transform="translate(1075.2,685) scale(0.9,1)" font-size="16" text-anchor="middle">2k</text><text transform="translate(1146.39,685) scale(0.9,1)" font-size="16" text-anchor="middle">5k</text><text transform="translate(1200.25,685) scale(0.9,1)" font-size="16" text-anchor="middle">10k</text><text transform="translate(1254.1,685) scale(0.9,1)" font-size="16" text-anchor="middle">20k</text></g><g fill="#000"><text x="985.5" y="714" text-anchor="middle" font-size="15">Directivity (hor)</text><text x="719" y="718" font-size="15">dB</text><text transform="translate(713.5,725.4) scale(0.9,1)" font-size="16" text-anchor="end">110</text><text transform="translate(713.5,758.4) scale(0.9,1)" font-size="16" text-anchor="end">105</text><text transform="translate(713.5,791.4) scale(0.9,1)" font-size="16" text-anchor="end">100</text><text transform="translate(713.5,824.4) scale(0.9,1)" font-size="16" text-anchor="end">95</text><text transform="translate(713.5,857.4) scale(0.9,1)" font-size="16" text-anchor="end">90</text><text transform="translate(713.5,890.4) scale(0.9,1)" font-size="16" text-anchor="end">85</text><text transform="translate(713.5,923.4) scale(0.9,1)" font-size="16" text-anchor="end">80</text><text transform="translate(713.5,956.4) scale(0.9,1)" font-size="16" text-anchor="end">75</text><text transform="translate(713.5,989.4) scale(0.9,1)" font-size="16" text-anchor="end">70</text><text transform="translate(717.4,1002) scale(0.9,1)" font-size="16" text-anchor="middle">20Hz</text><text transform="translate(788.59,1002) scale(0.9,1)" font-size="16" text-anchor="middle">50</text><text transform="translate(842.45,1002) scale(0.9,1)" font-size="16" text-anchor="middle">100</text><text transform="translate(896.3,1002) scale(0.9,1)" font-size="16" text-anchor="middle">200</text><text transform="translate(967.49,1002) scale(0.9,1)" font-size="16" text-anchor="middle">500</text><text transform="translate(1021.35,1002) scale(0.9,1)" font-size="16" text-anchor="middle">1k</text><text transform="translate(1075.2,1002) scale(0.9,1)" font-size="16" text-anchor="middle">2k</text><text transform="translate(1146.39,1002) scale(0.9,1)" font-size="16" text-anchor="middle">5k</text><text transform="translate(1200.25,1002) scale(0.9,1)" font-size="16" text-anchor="middle">10k</text><text transform="translate(1254.1,1002) scale(0.9,1)" font-size="16" text-anchor="middle">20k</text></g><g fill="#000"><text x="1608.5" y="84" text-anchor="middle" font-size="15">GD &amp; Phase</text><text x="1342" y="88" font-size="15">ms</text><text x="1874" y="88" text-anchor="end" font-size="15">deg</text><text transform="translate(1336.5,95.4) scale(0.9,1)" font-size="16" text-anchor="end">15</text><text transform="translate(1336.5,160.4) scale(0.9,1)" font-size="16" text-anchor="end">10</text><text transform="translate(1336.5,226.4) scale(0.9,1)" font-size="16" text-anchor="end">5</text><text transform="translate(1336.5,291.4) scale(0.9,1)" font-size="16" text-anchor="end">0</text><text transform="translate(1336.5,357.4) scale(0.9,1)" font-size="16" text-anchor="end">-5</text><text transform="translate(1897,95.4) scale(0.9,1)" font-size="16" text-anchor="middle">180</text><text transform="translate(1897,160.4) scale(0.9,1)" font-size="16" text-anchor="middle">90</text><text transform="translate(1897,226.4) scale(0.9,1)" font-size="16" text-anchor="middle">0</text><text transform="translate(1897,291.4) scale(0.9,1)" font-size="16" text-anchor="middle">-90</text><text transform="translate(1897,357.4) scale(0.9,1)" font-size="16" text-anchor="middle">-180</text><text transform="translate(1340.5,370) scale(0.9,1)" font-size="16" text-anchor="middle">20Hz</text><text transform="translate(1411.53,370) scale(0.9,1)" font-size="16" text-anchor="middle">50</text><text transform="translate(1465.27,370) scale(0.9,1)" font-size="16" text-anchor="middle">100</text><text transform="translate(1519,370) scale(0.9,1)" font-size="16" text-anchor="middle">200</text><text transform="translate(1590.03,370) scale(0.9,1)" font-size="16" text-anchor="middle">500</text><text transform="translate(1643.77,370) scale(0.9,1)" font-size="16" text-anchor="middle">1k</text><text transform="translate(1697.5,370) scale(0.9,1)" font-size="16" text-anchor="middle">2k</text><text transform="translate(1768.53,370) scale(0.9,1)" font-size="16" text-anchor="middle">5k</text><text transform="translate(1822.27,370) scale(0.9,1)" font-size="16" text-anchor="middle">10k</text><text transform="translate(1876,370) scale(0.9,1)" font-size="16" text-anchor="middle">20k</text></g><g fill="#000"><text x="1608.5" y="399" text-anchor="middle" font-size="15">Filter</text><text x="1342" y="403" font-size="15">dB</text><text x="1874" y="403" text-anchor="end" font-size="15">deg</text><text transform="translate(1336.5,410.4) scale(0.9,1)" font-size="16" text-anchor="end">10</text><text transform="translate(1336.5,436.4) scale(0.9,1)" font-size="16" text-anchor="end">5</text><text transform="translate(1336.5,462.4) scale(0.9,1)" font-size="16" text-anchor="end">0</text><text transform="translate(1336.5,488.4) scale(0.9,1)" font-size="16" text-anchor="end">-5</text><text transform="translate(1336.5,514.4) scale(0.9,1)" font-size="16" text-anchor="end">-10</text><text transform="translate(1336.5,541.4) scale(0.9,1)" font-size="16" text-anchor="end">-15</text><text transform="translate(1336.5,567.4) scale(0.9,1)" font-size="16" text-anchor="end">-20</text><text transform="translate(1336.5,593.4) scale(0.9,1)" font-size="16" text-anchor="end">-25</text><text transform="translate(1336.5,619.4) scale(0.9,1)" font-size="16" text-anchor="end">-30</text><text transform="translate(1336.5,645.4) scale(0.9,1)" font-size="16" text-anchor="end">-35</text><text transform="translate(1336.5,672.4) scale(0.9,1)" font-size="16" text-anchor="end">-40</text><text transform="translate(1897,410.4) scale(0.9,1)" font-size="16" text-anchor="middle">180</text><text transform="translate(1897,436.4) scale(0.9,1)" font-size="16" text-anchor="middle">144</text><text transform="translate(1897,462.4) scale(0.9,1)" font-size="16" text-anchor="middle">108</text><text transform="translate(1897,488.4) scale(0.9,1)" font-size="16" text-anchor="middle">72</text><text transform="translate(1897,514.4) scale(0.9,1)" font-size="16" text-anchor="middle">36</text><text transform="translate(1897,541.4) scale(0.9,1)" font-size="16" text-anchor="middle">0</text><text transform="translate(1897,567.4) scale(0.9,1)" font-size="16" text-anchor="middle">-36</text><text transform="translate(1897,593.4) scale(0.9,1)" font-size="16" text-anchor="middle">-72</text><text transform="translate(1897,619.4) scale(0.9,1)" font-size="16" text-anchor="middle">-108</text><text transform="translate(1897,645.4) scale(0.9,1)" font-size="16" text-anchor="middle">-144</text><text transform="translate(1897,672.4) scale(0.9,1)" font-size="16" text-anchor="middle">-180</text><text transform="translate(1340.5,685) scale(0.9,1)" font-size="16" text-anchor="middle">20Hz</text><text transform="translate(1411.53,685) scale(0.9,1)" font-size="16" text-anchor="middle">50</text><text transform="translate(1465.27,685) scale(0.9,1)" font-size="16" text-anchor="middle">100</text><text transform="translate(1519,685) scale(0.9,1)" font-size="16" text-anchor="middle">200</text><text transform="translate(1590.03,685) scale(0.9,1)" font-size="16" text-anchor="middle">500</text><text transform="translate(1643.77,685) scale(0.9,1)" font-size="16" text-anchor="middle">1k</text><text transform="translate(1697.5,685) scale(0.9,1)" font-size="16" text-anchor="middle">2k</text><text transform="translate(1768.53,685) scale(0.9,1)" font-size="16" text-anchor="middle">5k</text><text transform="translate(1822.27,685) scale(0.9,1)" font-size="16" text-anchor="middle">10k</text><text transform="translate(1876,685) scale(0.9,1)" font-size="16" text-anchor="middle">20k</text></g><g fill="#000"><text x="1608.5" y="714" text-anchor="middle" font-size="15">Impedance</text><text x="1342" y="718" font-size="15">ohm</text><text x="1874" y="718" text-anchor="end" font-size="15">deg</text><text transform="translate(1336.5,725.4) scale(0.9,1)" font-size="16" text-anchor="end">40</text><text transform="translate(1336.5,758.4) scale(0.9,1)" font-size="16" text-anchor="end">35</text><text transform="translate(1336.5,791.4) scale(0.9,1)" font-size="16" text-anchor="end">30</text><text transform="translate(1336.5,824.4) scale(0.9,1)" font-size="16" text-anchor="end">25</text><text transform="translate(1336.5,857.4) scale(0.9,1)" font-size="16" text-anchor="end">20</text><text transform="translate(1336.5,890.4) scale(0.9,1)" font-size="16" text-anchor="end">15</text><text transform="translate(1336.5,923.4) scale(0.9,1)" font-size="16" text-anchor="end">10</text><text transform="translate(1336.5,956.4) scale(0.9,1)" font-size="16" text-anchor="end">5</text><text transform="translate(1336.5,989.4) scale(0.9,1)" font-size="16" text-anchor="end">0</text><text transform="translate(1897,725.4) scale(0.9,1)" font-size="16" text-anchor="middle">180</text><text transform="translate(1897,758.4) scale(0.9,1)" font-size="16" text-anchor="middle">135</text><text transform="translate(1897,791.4) scale(0.9,1)" font-size="16" text-anchor="middle">90</text><text transform="translate(1897,824.4) scale(0.9,1)" font-size="16" text-anchor="middle">45</text><text transform="translate(1897,857.4) scale(0.9,1)" font-size="16" text-anchor="middle">0</text><text transform="translate(1897,890.4) scale(0.9,1)" font-size="16" text-anchor="middle">-45</text><text transform="translate(1897,923.4) scale(0.9,1)" font-size="16" text-anchor="middle">-90</text><text transform="translate(1897,956.4) scale(0.9,1)" font-size="16" text-anchor="middle">-135</text><text transform="translate(1897,989.4) scale(0.9,1)" font-size="16" text-anchor="middle">-180</text><text transform="translate(1340.5,1002) scale(0.9,1)" font-size="16" text-anchor="middle">20Hz</text><text transform="translate(1411.53,1002) scale(0.9,1)" font-size="16" text-anchor="middle">50</text><text transform="translate(1465.27,1002) scale(0.9,1)" font-size="16" text-anchor="middle">100</text><text transform="translate(1519,1002) scale(0.9,1)" font-size="16" text-anchor="middle">200</text><text transform="translate(1590.03,1002) scale(0.9,1)" font-size="16" text-anchor="middle">500</text><text transform="translate(1643.77,1002) scale(0.9,1)" font-size="16" text-anchor="middle">1k</text><text transform="translate(1697.5,1002) scale(0.9,1)" font-size="16" text-anchor="middle">2k</text><text transform="translate(1768.53,1002) scale(0.9,1)" font-size="16" text-anchor="middle">5k</text><text transform="translate(1822.27,1002) scale(0.9,1)" font-size="16" text-anchor="middle">10k</text><text transform="translate(1876,1002) scale(0.9,1)" font-size="16" text-anchor="middle">20k</text></g><rect x="0" y="1029" width="1920" height="1" fill="#ffffff"/><rect x="0" y="1030" width="1920" height="50" fill="#1c2b36"/><rect x="1476" y="1030" width="168" height="50" fill="#4a5962"/><rect x="129" y="1077" width="158" height="3" fill="#76b9ed"/><rect x="298" y="1077" width="158" height="3" fill="#76b9ed"/><rect x="467" y="1077" width="158" height="3" fill="#76b9ed"/><rect x="636" y="1077" width="158" height="3" fill="#76b9ed"/><rect x="805" y="1077" width="158" height="3" fill="#76b9ed"/><rect x="974" y="1077" width="158" height="3" fill="#76b9ed"/><rect x="1143" y="1077" width="158" height="3" fill="#76b9ed"/><rect x="1312" y="1077" width="158" height="3" fill="#76b9ed"/><rect x="1476" y="1077" width="168" height="3" fill="#76b9ed"/><path d="M20 1047.5 L28.8 1046.3 V1054.5 H20 Z M30.2 1046.1 L40 1044.8 V1054.5 H30.2 Z M20 1055.8 H28.8 V1064 L20 1062.8 Z M30.2 1055.8 H40 V1065.3 L30.2 1064 Z" fill="#ffffff"/><g stroke="#fff" stroke-width="1.4" fill="none"><rect x="80.5" y="1048" width="13" height="13"/><path d="M80.5 1045.5 H93.5 M80.5 1063.5 H93.5 M99 1045 V1065"/></g><rect x="97.5" y="1051" width="3" height="5" fill="#fff"/><path d="M141 1045 H151 L153 1047 H158 V1066 H147 L144 1068 Z" fill="#f4c443"/><path d="M141 1045 L147 1048 V1068 L141 1066 Z" fill="#e8a81e"/><text x="170" y="1061" font-size="15.5" fill="#ffffff" textLength="110" lengthAdjust="spacingAndGlyphs">Armin van Buur...</text><defs><radialGradient id="ffg" cx="0.7" cy="0.15" r="0.95"><stop offset="0" stop-color="#fff44f"/><stop offset="0.35" stop-color="#ff980e"/><stop offset="0.7" stop-color="#ff3750"/><stop offset="1" stop-color="#f5156c"/></radialGradient><radialGradient id="ffp" cx="0.4" cy="0.3" r="0.8"><stop offset="0" stop-color="#b833e1"/><stop offset="1" stop-color="#5b2ad0"/></radialGradient></defs><path d="M323.5 1040 C328 1042 334 1047 334 1056 C334 1064 327.5 1069.5 320 1069.5 C312 1069.5 305.5 1063 305.5 1055 C305.5 1050 307.5 1046 310 1044 C310 1047 311 1049 312.5 1050 C314 1046 318 1044 321 1045 C322.5 1043 323.5 1041.5 323.5 1040 Z" fill="url(#ffg)"/><circle cx="320.5" cy="1056.5" r="6.8" fill="url(#ffp)"/><path d="M312 1052 C315 1049 320 1048.5 324 1050.5 C320 1050 316 1051 314 1054 Z" fill="#ff9a1e"/><text x="339" y="1061" font-size="15.5" fill="#ffffff" textLength="103.5" lengthAdjust="spacingAndGlyphs">YouTube – Mo...</text><defs><linearGradient id="dg" x1="0" y1="0" x2="1" y2="1"><stop offset="0" stop-color="#0aa2b8"/><stop offset="1" stop-color="#6a2bb0"/></linearGradient></defs><rect x="474" y="1040" width="30" height="30" fill="url(#dg)"/><path d="M480 1049 H485 C490 1049 490 1061 485 1061 H480 Z M498 1049 H493 C488 1049 488 1061 493 1061 H498 Z" fill="#fff"/><text x="508.4" y="1061" font-size="15.5" fill="#ffffff" textLength="87.3" lengthAdjust="spacingAndGlyphs">Dolby Access</text><circle cx="658" cy="1054.5" r="14" fill="#ffffff"/><circle cx="658" cy="1054.5" r="11.5" fill="#3cc14f"/><path d="M646 1068 L648 1061 L652 1065 Z" fill="#fff"/><path d="M653 1049 C652 1054 657 1060 663 1060 L664 1057 L661 1056 L660 1057.5 C658 1057 655 1054 654.5 1052 L656 1051 L655 1048 Z" fill="#fff"/><text x="677" y="1061" font-size="15.5" fill="#ffffff" textLength="69" lengthAdjust="spacingAndGlyphs">WhatsApp</text><rect x="812" y="1040" width="30" height="30" fill="#2a8cf0" rx="3"/><g stroke="#fff" stroke-width="1.6" fill="none" stroke-linejoin="round"><path d="M816 1045.5 L822.5 1063 L828.5 1045.5"/><path d="M829.5 1054 V1049.5 C829.5 1045 837 1045 837 1049.5 V1054"/><path d="M837 1055.5 H833 C829 1055.5 829 1062 833 1062 H837"/></g><text x="846" y="1061" font-size="15.5" fill="#ffffff" textLength="78" lengthAdjust="spacingAndGlyphs">VNC Viewer</text><defs><clipPath id="mmc"><rect x="981" y="1040" width="30" height="30" rx="4"/></clipPath></defs><g clip-path="url(#mmc)"><rect x="981" y="1040" width="30" height="30" fill="#433f45"/><ellipse cx="996" cy="1049" rx="19" ry="17" fill="#f07a0a"/><rect x="987.5" y="1040" width="2" height="18" fill="#555"/><circle cx="988.5" cy="1058" r="3.2" fill="#dcdcdc"/><circle cx="988.5" cy="1058" r="1.5" fill="#666"/><rect x="993" y="1058" width="4.5" height="2.5" fill="#f0d8c0"/><rect x="1000.5" y="1043.0" width="5" height="1.3" fill="#f6e0cc" opacity="0.45"/><rect x="1000.5" y="1045.4" width="5" height="1.3" fill="#f6e0cc" opacity="0.52"/><rect x="1000.5" y="1047.8" width="5" height="1.3" fill="#f6e0cc" opacity="0.59"/><rect x="1000.5" y="1050.2" width="5" height="1.3" fill="#f6e0cc" opacity="0.66"/><rect x="1000.5" y="1052.6" width="5" height="1.3" fill="#f6e0cc" opacity="0.73"/><rect x="1000.5" y="1055.0" width="5" height="1.3" fill="#f6e0cc" opacity="0.80"/><rect x="1000.5" y="1057.4" width="5" height="1.3" fill="#f6e0cc" opacity="0.87"/><rect x="1000.5" y="1059.8" width="5" height="1.3" fill="#f6e0cc" opacity="0.94"/></g><text x="1015" y="1061" font-size="15.5" fill="#ffffff" textLength="53" lengthAdjust="spacingAndGlyphs">Miumax</text><defs><linearGradient id="mpg" x1="0" y1="0" x2="1" y2="1"><stop offset="0" stop-color="#ff8a30"/><stop offset="1" stop-color="#a050e0"/></linearGradient></defs><circle cx="1165" cy="1055" r="13.3" fill="#262626" stroke="url(#mpg)" stroke-width="2"/><path d="M1161 1047.5 L1172 1055 L1161 1062.5 Z" fill="#f4f4f4"/><text x="1184" y="1061" font-size="15.5" fill="#ffffff" textLength="104" lengthAdjust="spacingAndGlyphs">Medienwieder...</text><rect x="1319.5" y="1040.5" width="29" height="29" fill="#e8e6f0" stroke="#8fa8c8" stroke-width="0.8" rx="2"/><path d="M1324.5 1062 C1328 1064 1338 1065 1341 1062" stroke="#bbb" stroke-width="2" fill="none"/><path d="M1327 1065 C1325 1058 1327 1052 1333.5 1042 C1339 1052 1343 1058 1341 1065 C1337 1067 1331 1067 1327 1065 Z" fill="#fdfdfd" stroke="#d0d0d0" stroke-width="0.6"/><path d="M1333.5 1042 C1331.5 1046 1329.5 1050 1328.5 1054 C1331 1052 1336 1052 1338.5 1054 C1337.5 1050 1335.5 1046 1333.5 1042 Z" fill="#2a2a2a"/><circle cx="1334.8" cy="1051.8" r="3.3" fill="#e42828"/><path d="M1344.5 1053.5 V1058.5 M1343 1056 L1345.5 1060" stroke="#333" stroke-width="1.6"/><ellipse cx="1324.5" cy="1055.5" rx="3.2" ry="1.6" fill="#9fd0f5" stroke="#5a4a3a" stroke-width="0.7"/><path d="M1321.5 1056.5 L1327.5 1060" stroke="#5a4a3a" stroke-width="0.8"/><text x="1353" y="1061" font-size="15.5" fill="#ffffff" textLength="89.5" lengthAdjust="spacingAndGlyphs">REW V5.20.13</text><g transform="translate(1488.1,1044.1) scale(1.0)"><path d="M4.4 0 H23 L28.4 4.7 L14.2 20.8 L0 4.7 Z" fill="#ff0000" stroke="#6a0000" stroke-width="0.9" stroke-linejoin="round"/><path d="M9.5 2.2 H18.9 L14.2 10.4 Z" fill="#f4f400" stroke="#8a2000" stroke-width="0.5"/><path d="M3.2 5.4 C6.5 5.2 10 8.5 11.7 15.4 C8.5 12.5 6 9.5 3.2 5.4 Z" fill="#e6e600" stroke="#8a2000" stroke-width="0.5"/><path d="M25.2 5.4 C21.9 5.2 18.4 8.5 16.7 15.4 C19.9 12.5 22.4 9.5 25.2 5.4 Z" fill="#e6e600" stroke="#8a2000" stroke-width="0.5"/></g><text x="1522" y="1061" font-size="15.5" fill="#ffffff" textLength="66" lengthAdjust="spacingAndGlyphs">VituixCAD</text><path d="M1655 1060 L1662.5 1052.5 L1670 1060" stroke="#fff" stroke-width="1.5" fill="none"/><g stroke="#fff" fill="none" stroke-width="1.4"><rect x="1686" y="1049.5" width="15" height="10"/><path d="M1683 1052 V1057"/></g><rect x="1688" y="1051.5" width="11" height="6" fill="#fff"/><g stroke="#fff" fill="none" stroke-width="1.6"><path d="M1716 1062 A15 15 0 0 1 1731 1047"/><path d="M1720 1062 A11 11 0 0 1 1731 1051"/><path d="M1724 1062 A7 7 0 0 1 1731 1055"/></g><circle cx="1729" cy="1061" r="1.8" fill="#fff"/><g stroke="#fff" fill="none" stroke-width="1.4"><path d="M1743 1052 H1747 L1752 1047 V1064 L1747 1059 H1743 Z"/><path d="M1754.5 1052.5 A4 4 0 0 1 1754.5 1058.5 M1757.5 1049.5 A8 8 0 0 1 1757.5 1061.5 M1760.5 1046.5 A12 12 0 0 1 1760.5 1064.5"/></g><text x="1810.5" y="1048.5" font-size="16" fill="#ffffff" text-anchor="middle" textLength="32.53" lengthAdjust="spacingAndGlyphs">20:47</text><text x="1810.5" y="1070.5" font-size="16" fill="#ffffff" text-anchor="middle" textLength="68.46" lengthAdjust="spacingAndGlyphs">05.06.2023</text><path d="M1869 1046 H1892 V1061 H1878 L1873 1066 V1061 H1869 Z" fill="#fff"/><g stroke="#1c2b36" stroke-width="1.5"><path d="M1873 1050 H1888 M1873 1054 H1888 M1873 1058 H1884"/></g><circle cx="1888" cy="1063.7" r="9.5" fill="#3a3a3a" stroke="#5a5a5a" stroke-width="1.2"/><text x="1888" y="1068.8" font-size="14" fill="#fff" text-anchor="middle" font-weight="bold">2</text><line x1="1913.5" y1="1030" x2="1913.5" y2="1080" stroke="#5a6670"/></svg></body></html>
